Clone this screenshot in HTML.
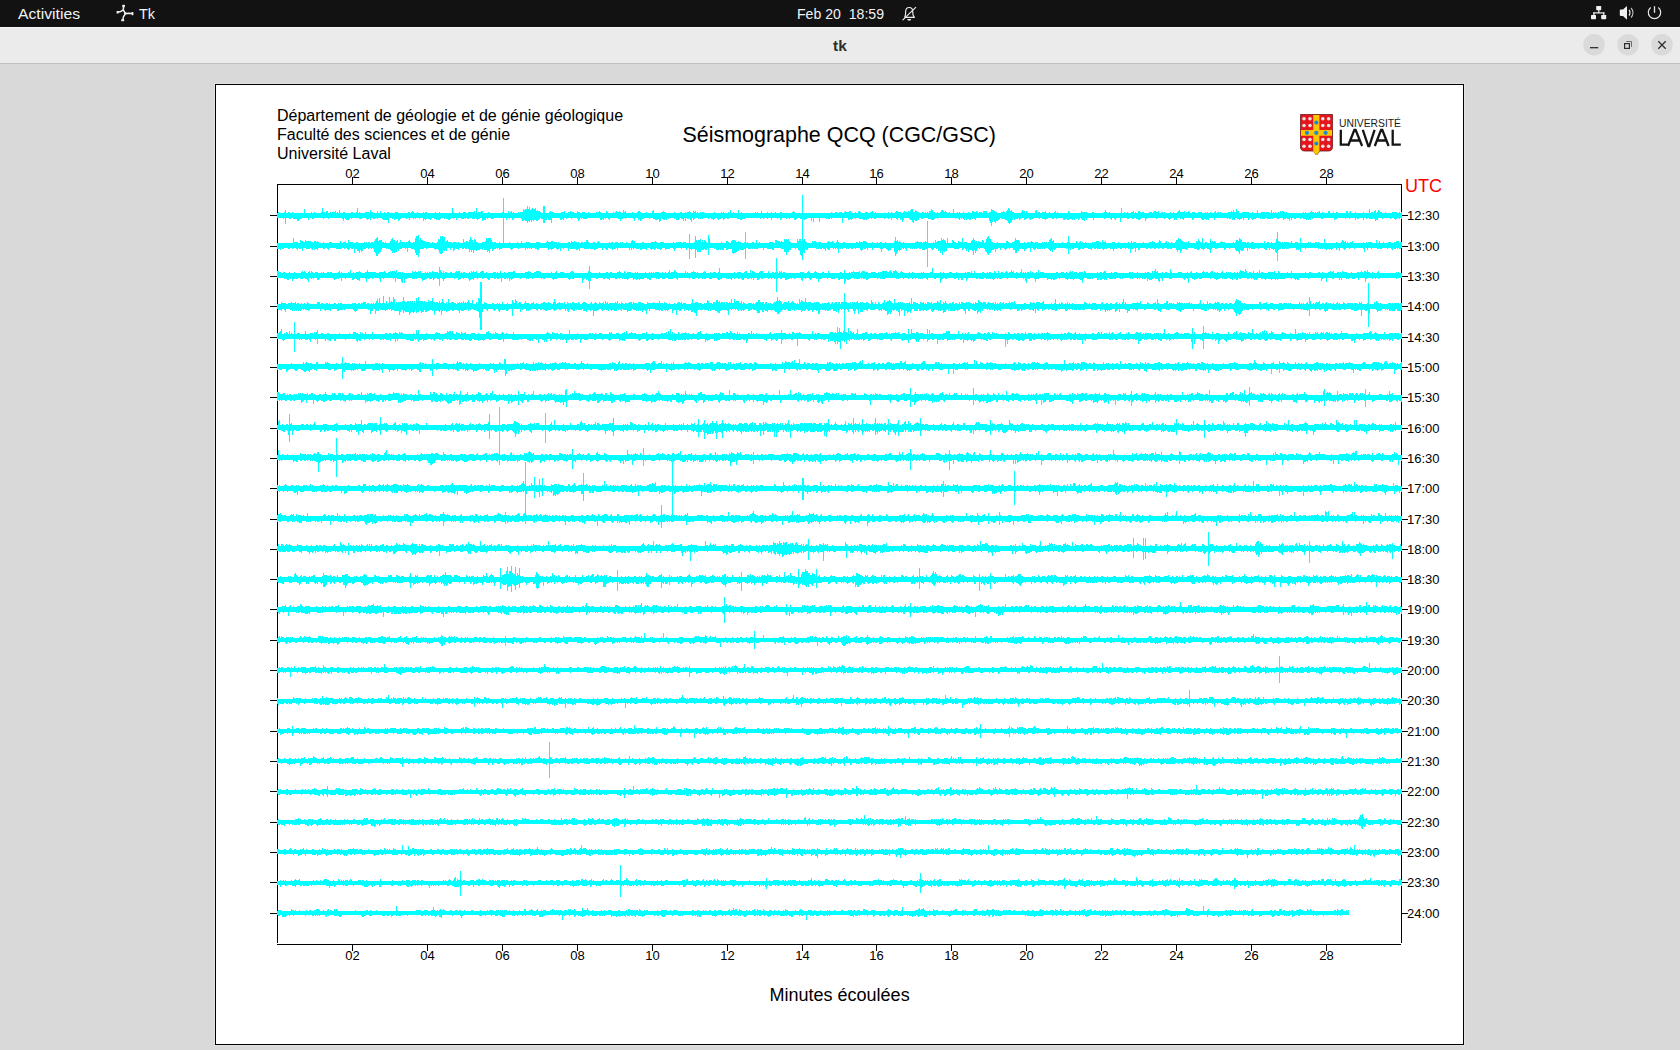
<!DOCTYPE html>
<html><head><meta charset="utf-8"><style>
html,body{margin:0;padding:0;width:1680px;height:1050px;overflow:hidden;background:#d9d9d9}
svg{position:absolute;left:0;top:0;display:block}
text{font-family:'Liberation Sans',sans-serif}
</style></head><body>
<svg width="1680" height="1050" viewBox="0 0 1680 1050">
<!-- top bar -->
<rect x="0" y="0" width="1680" height="27" fill="#121212"/>
<text x="18" y="19" fill="#f2f2f2" font-size="15" textLength="62" lengthAdjust="spacingAndGlyphs">Activities</text>
<g fill="none" stroke="#f0f0f0" stroke-width="1.5" stroke-linecap="round" stroke-linejoin="round">
<path d="M123.6 5.8L123.3 9.8L120.8 11.4L117.6 12.1M123.3 9.8L125.4 13.6L128.5 13.2L132.4 13.5M125.4 13.6L123.4 16.8L122.9 20.2"/>
</g>
<g fill="#f0f0f0">
<rect x="122.3" y="4.8" width="2.6" height="2.4" rx="0.6"/>
<rect x="116.6" y="10.9" width="2.2" height="2.6" rx="0.6"/>
<rect x="131.6" y="12" width="1.8" height="3.2" rx="0.5"/>
<rect x="121.2" y="19.2" width="3" height="2" rx="0.5"/>
<rect x="124.2" y="12.4" width="2.2" height="2.2" rx="0.6"/>
</g>
<text x="139" y="19" fill="#f2f2f2" font-size="15" textLength="16" lengthAdjust="spacingAndGlyphs">Tk</text>
<text x="797" y="19" fill="#f2f2f2" font-size="14.5" textLength="87" lengthAdjust="spacingAndGlyphs" xml:space="preserve">Feb 20  18:59</text>
<g fill="none" stroke="#ececec" stroke-width="1.15" stroke-linejoin="round">
<path d="M904.4 17.4H914.9M904.6 17.4C905.6 16.4 905.6 15 905.6 12.2C905.6 9.2 907.1 7.5 909.2 7.5C911.3 7.5 912.8 9.2 912.8 12.2C912.8 15 912.8 16.4 914.7 17.4"/>
<path d="M902.9 19.8L915.7 7.3" stroke-linecap="round"/>
</g>
<path d="M907.2 19.1H911.2C911 20.1 910.2 20.7 909.2 20.7C908.2 20.7 907.4 20.1 907.2 19.1Z" fill="#ececec"/>
<!-- network -->
<g fill="#f0f0f0">
<rect x="1596.2" y="6" width="5" height="4.2" rx="0.6"/>
<rect x="1591" y="15" width="5" height="4.2" rx="0.6"/>
<rect x="1601.2" y="15" width="5" height="4.2" rx="0.6"/>
<rect x="1598.2" y="10" width="1.2" height="3"/>
<rect x="1593.3" y="12.3" width="11" height="1.2"/>
<rect x="1593.3" y="12.3" width="1.2" height="3"/>
<rect x="1603.2" y="12.3" width="1.2" height="3"/>
</g>
<!-- volume -->
<path d="M1620.6 9.6H1623L1627 6V19.8L1623 15.9H1620.6Q1619.8 15.9 1619.8 15.1V10.4Q1619.8 9.6 1620.6 9.6Z" fill="#f0f0f0"/>
<path d="M1629 10C1630.3 11.3 1630.3 14.2 1629 15.5" stroke="#f0f0f0" stroke-width="1.2" fill="none"/>
<path d="M1631 8C1633.6 10.5 1633.6 15 1631 17.5" stroke="#bdbdbd" stroke-width="1.1" fill="none"/>
<!-- power -->
<path d="M1650.7 7.5A6.2 6.2 0 1 0 1658.3 7.5" stroke="#e8e8e8" stroke-width="1.2" fill="none"/>
<path d="M1654.5 6.2V12.8" stroke="#e8e8e8" stroke-width="1.3"/>
<!-- title bar -->
<rect x="0" y="27" width="1680" height="36" fill="#ebebeb"/>
<rect x="0" y="63" width="1680" height="1" fill="#c0c0c0"/>
<rect x="0" y="27" width="1680" height="1" fill="#f7f7f7"/>
<text x="840" y="51" text-anchor="middle" fill="#2e2e2e" font-size="15.5" font-weight="700">tk</text>
<circle cx="1594" cy="44.7" r="10.8" fill="#dadada"/>
<circle cx="1628" cy="44.7" r="10.8" fill="#dadada"/>
<circle cx="1662" cy="44.7" r="10.8" fill="#dadada"/>
<rect x="1590" y="47" width="8.2" height="1.35" fill="#333"/>
<rect x="1624.6" y="43.6" width="4.8" height="4.8" fill="none" stroke="#2e2e2e" stroke-width="1.2"/>
<path d="M1626.2 41.5H1631.5V46.8" fill="none" stroke="#6a6a6a" stroke-width="1"/>
<path d="M1658.3 41.3L1665.7 48.7M1665.7 41.3L1658.3 48.7" stroke="#2e2e2e" stroke-width="1.3"/>
<!-- canvas -->
<rect x="214" y="83" width="1251" height="963" fill="#e3e3e3"/>
<rect x="215.5" y="84.5" width="1248" height="960" fill="#fff" stroke="#000" stroke-width="1"/>
<g fill="#000" font-size="16">
<text x="277" y="121">Département de géologie et de génie géologique</text>
<text x="277" y="140">Faculté des sciences et de génie</text>
<text x="277" y="159">Université Laval</text>
</g>
<text x="839.2" y="141.5" text-anchor="middle" font-size="21.45" fill="#000">Séismographe QCQ (CGC/GSC)</text>
<!-- logo -->
<g id="logo">
<path d="M1300.5 114.5H1332.5V147C1332.5 149.5 1331 151 1328.5 151H1320L1316.5 155L1313 151H1304.5C1302 151 1300.5 149.5 1300.5 147Z" fill="#e8141c" stroke="#6b1a1a" stroke-width="0.8"/>
<path d="M1313.2 115H1319.4V130H1332V135.7H1319.4V151.5L1316.3 155L1313.2 151.5V135.7H1301V130H1313.2Z" fill="#fbc600"/>
<g fill="#1e88d8">
<circle cx="1316.3" cy="122.6" r="2.1"/><circle cx="1316.3" cy="132.8" r="2.1"/><circle cx="1316.3" cy="143.5" r="2.1"/>
<circle cx="1307" cy="132.8" r="2.1"/><circle cx="1325.6" cy="132.8" r="2.1"/>
</g>
<g fill="#e4e4e4">
<circle cx="1304" cy="118.8" r="1.8"/><circle cx="1310" cy="118.8" r="1.8"/><circle cx="1304" cy="125.5" r="1.8"/><circle cx="1310" cy="125.5" r="1.8"/>
<circle cx="1322.8" cy="118.8" r="1.8"/><circle cx="1328.6" cy="118.8" r="1.8"/><circle cx="1322.8" cy="125.5" r="1.8"/><circle cx="1328.6" cy="125.5" r="1.8"/>
<circle cx="1304" cy="139.5" r="1.8"/><circle cx="1310" cy="139.5" r="1.8"/><circle cx="1304" cy="146.3" r="1.8"/><circle cx="1310" cy="146.3" r="1.8"/>
<circle cx="1322.8" cy="139.5" r="1.8"/><circle cx="1328.6" cy="139.5" r="1.8"/><circle cx="1322.8" cy="146.3" r="1.8"/><circle cx="1328.6" cy="146.3" r="1.8"/>
</g>
<text x="1339" y="126.8" font-size="10.4" fill="#1a1a1a" textLength="62" lengthAdjust="spacingAndGlyphs">UNIVERSITÉ</text>
<path d="M1340.8 129.8V144.7H1349.4M1348 146L1354.4 129.8H1355.6L1362.1 146M1351 140.5H1359M1362.8 129.8L1368.3 146H1369.3L1374.6 129.8M1374.8 146L1381.1 129.8H1382.3L1388.6 146M1377.8 140.5H1385.6M1392.7 129.8V144.7H1400.8" fill="none" stroke="#151515" stroke-width="2.3" stroke-linejoin="miter"/>
</g>
<g shape-rendering="crispEdges">
<path d="M277 184H1402M277.5 184V943M1401.5 184V943M277 944.5H1401" stroke="#000" stroke-width="1" fill="none"/><path d="M352.5 177V184M352.5 945V951M427.5 177V184M427.5 945V951M502.5 177V184M502.5 945V951M577.5 177V184M577.5 945V951M652.5 177V184M652.5 945V951M727.5 177V184M727.5 945V951M802.5 177V184M802.5 945V951M876.5 177V184M876.5 945V951M951.5 177V184M951.5 945V951M1026.5 177V184M1026.5 945V951M1101.5 177V184M1101.5 945V951M1176.5 177V184M1176.5 945V951M1251.5 177V184M1251.5 945V951M1326.5 177V184M1326.5 945V951M270 215.5H277M1402 215.5H1408M270 246.5H277M1402 246.5H1408M270 276.5H277M1402 276.5H1408M270 306.5H277M1402 306.5H1408M270 337.5H277M1402 337.5H1408M270 367.5H277M1402 367.5H1408M270 397.5H277M1402 397.5H1408M270 428.5H277M1402 428.5H1408M270 458.5H277M1402 458.5H1408M270 488.5H277M1402 488.5H1408M270 519.5H277M1402 519.5H1408M270 549.5H277M1402 549.5H1408M270 579.5H277M1402 579.5H1408M270 609.5H277M1402 609.5H1408M270 640.5H277M1402 640.5H1408M270 670.5H277M1402 670.5H1408M270 700.5H277M1402 700.5H1408M270 731.5H277M1402 731.5H1408M270 761.5H277M1402 761.5H1408M270 791.5H277M1402 791.5H1408M270 822.5H277M1402 822.5H1408M270 852.5H277M1402 852.5H1408M270 882.5H277M1402 882.5H1408M270 913.5H277M1402 913.5H1408" stroke="#000" stroke-width="1" fill="none"/>
<path fill="#00ffff" d="M277 213h1v-1h1v1h5v-1h1v-2h1v3h2v-1h2v1h2v-1h1v1h11v-4h1v4h6v-1h1v1h2v-1h1v1h6v-1h1v-4h1v4h2v1h1v-2h2v2h2v-1h1v1h1v-1h3v-1h1v2h1v-1h1v1h1v-3h1v3h3v-1h2v1h6v-1h2v1h3v-1h1v-4h1v5h1v-1h1v1h5v-1h4v1h1v-3h1v2h2v1h4v-2h1v2h2v-2h1v2h3v-1h1v1h2v-1h2v1h6v-1h3v1h10v-1h2v1h1v-1h1v-1h1v1h1v1h3v-1h1v1h5v-1h1v1h1v-1h2v1h8v-1h1v1h3v-1h1v1h12v-5h1v4h1v1h5v-1h1v1h3v-1h3v1h2v-1h6v-1h1v2h1v-5h1v5h1v-1h3v-1h2v2h5v-1h1v1h13v-1h1v-14h1v15h4v-2h1v2h1v-1h1v-1h1v2h1v-1h1v1h4v-1h1v1h1v-1h3v-3h1v1h1v-1h2v-3h1v3h1v-2h1v3h1v-1h1v-1h1v1h2v-1h1v3h1v-1h1v1h2v1h1v1h2v-7h2v7h4v-1h1v-1h1v1h3v1h7v-1h3v-1h1v2h3v-1h2v-1h1v1h3v1h3v-2h1v1h2v1h2v-1h3v1h3v-1h1v1h7v-1h1v1h1v-1h1v-1h1v1h1v1h5v-2h1v1h1v1h5v-1h1v1h1v-1h1v-1h1v1h2v-1h1v1h1v1h2v-3h1v2h1v-1h1v2h6v-1h1v1h4v-1h1v-1h2v1h1v1h5v-1h1v1h5v-2h1v-1h1v3h7v-1h2v-1h1v1h2v1h8v-1h1v1h5v-1h2v1h3v-1h1v1h1v-1h2v-1h1v1h1v1h2v-2h1v1h1v-1h1v2h1v-1h1v1h2v-1h1v1h1v-1h2v1h10v-1h1v1h6v-1h1v1h1v-1h1v1h4v-1h1v1h1v-3h1v3h2v-1h1v1h4v-3h1v3h2v-1h1v1h13v-1h1v1h1v-1h1v1h3v-2h1v2h5v-1h1v1h3v-1h1v1h3v-1h1v1h4v-1h2v1h10v-1h1v-1h1v1h1v1h7v-18h1v18h28v-1h1v1h3v-1h2v1h2v-1h3v1h2v-1h1v-1h1v1h3v-1h2v1h1v1h3v-1h1v1h2v-2h2v1h1v1h4v-1h3v1h2v-1h2v-1h1v1h1v1h1v-1h1v1h12v-1h1v1h2v-1h1v1h3v-1h1v-1h2v1h3v1h2v-1h1v-1h1v1h3v-1h1v1h1v-2h1v-1h2v3h2v-2h1v1h1v1h2v1h3v-1h2v1h1v-1h1v1h1v-1h1v1h1v-2h2v-2h1v1h1v2h2v1h2v-1h1v1h2v-1h1v-2h2v1h1v1h1v-1h1v1h1v1h2v-1h1v1h3v-4h1v4h3v-1h1v1h1v-1h1v1h3v-1h1v1h4v-1h1v1h3v-2h2v1h2v-1h1v1h1v1h1v-1h3v1h1v-2h4v2h2v-1h2v-3h1v1h2v1h1v1h2v1h4v-1h2v-1h1v1h1v1h1v-2h1v-1h1v-2h1v1h1v2h1v-1h1v2h2v1h7v-1h1v-2h1v1h2v2h1v-2h1v1h1v1h7v-2h1v-1h1v3h1v-1h2v1h2v-1h3v-1h1v2h3v-1h1v1h4v-1h1v-1h1v2h1v-1h1v1h10v-2h1v1h1v1h11v-2h1v1h5v1h5v-1h2v1h10v-1h1v-2h1v2h1v1h2v-1h1v1h11v-5h1v5h2v-1h1v1h2v-1h1v1h3v-1h2v-1h1v2h1v-1h1v1h2v-2h2v1h1v1h1v-1h2v1h5v-1h3v1h1v-1h1v-1h2v1h2v-1h1v2h2v-1h2v1h1v-1h1v1h5v-1h1v1h2v-1h1v1h3v-1h1v-1h1v-1h1v2h4v-1h1v2h1v-1h2v-1h1v1h1v1h2v-1h3v1h3v-1h4v1h3v-1h1v1h1v-1h1v1h2v-1h1v1h3v-1h1v-1h1v2h1v-1h2v1h1v-1h1v1h7v-1h3v-1h1v1h1v-2h1v2h2v-3h1v2h2v2h3v-1h7v1h3v-1h1v1h4v-3h1v3h3v-1h4v1h1v-1h3v1h2v-3h1v3h1v-1h1v1h1v-1h1v1h2v-1h1v1h1v-2h1v1h1v-1h2v1h1v1h1v-1h1v1h16v-1h1v1h1v-1h1v1h4v-1h1v-1h1v1h2v1h1v-1h1v1h1v-1h2v-1h1v2h2v-1h1v1h5v-2h2v2h3v-1h1v1h2v-1h2v1h8v-2h2v2h1v-1h1v-1h1v2h4v-1h1v1h7v-1h1v1h5v-4h1v4h1v-1h2v1h1v-2h1v-1h1v3h1v-1h1v-2h1v1h1v1h2v1h3v-1h1v1h6v-1h5v1h2v-1h1v1h1v-1h1v7h-1v-1h-1v1h-1v-1h-2v1h-1v1h-1v-1h-1v-1h-3v1h-1v-1h-7v1h-1v-1h-4v2h-2v1h-1v-2h-1v-1h-1v1h-4v-1h-2v1h-1v-1h-2v2h-1v-2h-4v1h-2v-1h-1v2h-1v-2h-5v1h-1v-1h-3v1h-1v-1h-8v1h-2v1h-1v-2h-11v1h-2v-1h-8v1h-1v-1h-1v2h-1v-1h-1v1h-1v-1h-1v1h-1v-1h-3v-1h-2v1h-1v-1h-4v1h-2v-1h-2v2h-1v-2h-1v3h-1v-2h-2v-1h-1v1h-2v1h-1v-2h-4v1h-2v-1h-4v1h-1v-1h-1v1h-4v-1h-2v1h-3v-1h-1v1h-1v-1h-4v1h-3v1h-1v-1h-1v-1h-1v1h-1v1h-1v-2h-4v2h-1v-2h-1v1h-2v1h-1v-1h-2v-1h-2v2h-1v-1h-1v1h-1v-2h-1v1h-2v-1h-1v1h-1v-1h-12v2h-1v-2h-5v2h-1v-1h-1v1h-1v-1h-2v1h-2v-1h-1v-1h-7v1h-1v1h-1v-2h-8v2h-1v-1h-1v-1h-1v1h-1v-1h-3v2h-1v-1h-1v1h-1v-2h-3v1h-1v1h-1v-1h-1v-1h-3v1h-1v-1h-7v1h-1v-1h-9v1h-1v2h-1v-3h-4v1h-1v1h-2v-1h-2v-1h-2v1h-2v-1h-3v1h-2v-1h-6v4h-1v-4h-4v2h-1v-1h-1v-1h-2v2h-1v-1h-1v-1h-5v1h-1v-1h-10v2h-1v-2h-6v2h-1v-2h-1v3h-1v-1h-2v-1h-1v-1h-1v1h-1v1h-1v-2h-1v1h-1v-1h-1v2h-1v-1h-1v1h-1v-1h-3v1h-2v-1h-2v1h-2v-2h-6v1h-1v-1h-2v1h-2v-1h-4v1h-2v1h-1v-1h-3v-1h-2v1h-1v-1h-5v1h-3v1h-1v-1h-1v-1h-2v1h-2v1h-1v-2h-3v1h-1v1h-1v-2h-1v1h-3v1h-1v-2h-1v2h-1v2h-1v1h-1v1h-1v-1h-1v-2h-1v-1h-2v-1h-4v-1h-1v1h-1v1h-1v1h-2v2h-1v-1h-1v-2h-1v2h-1v4h-1v-3h-1v-2h-1v-3h-13v2h-1v-1h-1v-1h-1v1h-1v-1h-1v2h-2v-1h-2v1h-1v-2h-1v2h-1v-1h-1v-1h-1v1h-1v-1h-1v2h-1v-1h-1v-1h-2v1h-1v-1h-17v1h-1v-1h-2v1h-1v1h-3v-1h-3v-1h-5v1h-2v-1h-2v2h-2v1h-2v-1h-1v3h-1v-1h-1v-2h-2v-1h-1v-1h-5v2h-1v2h-1v-3h-1v1h-1v-2h-2v2h-1v-1h-1v-1h-4v2h-1v-2h-2v1h-1v-1h-3v1h-1v-1h-8v1h-2v-1h-2v1h-1v-1h-2v1h-2v1h-1v-1h-1v1h-2v-1h-4v-1h-3v1h-1v-1h-2v1h-1v1h-1v-1h-1v1h-2v-2h-5v5h-1v-5h-10v1h-1v-1h-1v1h-2v-1h-1v1h-1v-1h-6v4h-1v-4h-5v4h-1v-4h-1v3h-1v-3h-4v1h-2v1h-1v-1h-1v41h-1v-41h-2v-1h-3v1h-1v1h-2v-2h-4v1h-1v-1h-2v1h-1v-1h-4v1h-1v1h-1v-2h-2v1h-1v-1h-5v2h-1v-2h-3v1h-1v-1h-3v1h-1v-1h-2v1h-1v-1h-15v1h-3v1h-2v-1h-3v-1h-8v1h-2v-1h-2v1h-1v1h-1v-2h-2v1h-2v1h-1v-1h-1v-1h-2v1h-1v1h-1v-1h-2v-1h-2v1h-1v-1h-5v1h-1v-1h-1v1h-1v-1h-1v1h-1v-1h-3v1h-1v1h-1v-2h-1v4h-1v-2h-1v-2h-1v1h-2v-1h-1v3h-1v-3h-1v3h-1v-2h-2v-1h-1v1h-1v1h-3v-2h-1v1h-1v-1h-5v1h-1v-1h-1v2h-1v-1h-1v1h-2v-1h-1v-1h-1v3h-1v1h-1v-3h-1v1h-3v-1h-2v-1h-3v1h-1v-1h-5v1h-2v1h-1v1h-1v-2h-1v1h-1v-2h-3v3h-1v-2h-1v-1h-7v1h-1v-1h-2v1h-2v2h-1v-2h-2v-1h-8v2h-1v-1h-1v-1h-2v1h-1v-1h-1v2h-1v-1h-1v1h-2v-2h-13v1h-4v-1h-1v1h-1v-1h-1v2h-1v1h-1v-2h-1v-1h-5v1h-1v-1h-4v1h-1v-1h-2v2h-1v-1h-1v1h-2v-2h-8v5h-1v-3h-3v-2h-1v2h-2v3h-2v-4h-2v-1h-1v1h-1v1h-1v1h-2v-1h-2v1h-1v-1h-1v2h-1v-2h-1v2h-1v-1h-1v2h-1v-2h-2v-1h-1v1h-2v-2h-1v-1h-7v1h-1v1h-1v-2h-2v1h-1v-1h-2v2h-1v-2h-2v26h-1v-26h-9v1h-3v-1h-3v1h-1v-1h-1v2h-3v1h-1v-3h-2v1h-2v1h-1v-1h-1v-1h-1v1h-3v-1h-3v1h-2v-1h-1v1h-1v-1h-1v1h-3v-1h-4v2h-1v-2h-2v1h-1v-1h-2v1h-1v1h-2v-1h-2v-1h-1v1h-1v-1h-3v1h-1v1h-2v-1h-1v1h-1v-1h-2v-1h-2v1h-1v1h-1v-1h-2v-1h-1v1h-1v1h-1v-1h-1v2h-1v-3h-3v1h-1v-1h-3v1h-1v-1h-1v1h-1v-1h-3v2h-1v-2h-2v1h-1v-1h-5v1h-1v1h-1v1h-1v-2h-3v1h-1v-2h-1v1h-1v-1h-3v5h-1v-3h-5v-1h-1v-1h-4v1h-1v-1h-2v1h-2v-1h-2v2h-1v-2h-1v1h-1v1h-1v-1h-1v-1h-4v1h-3v-1h-7v1h-1v-1h-1v1h-1v1h-3v-1h-1v-1h-1v3h-1v-2h-1v-1h-13v1h-1v-1h-4v1h-1v-1h-9v1h-2v-1h-3v2h-1v-2h-6v1h-2v1h-1v1h-2v-2h-4v-1h-2v1h-2v-1h-3v6h-1v-6h-1v1h-1v-1h-6zM277 243h16v-5h1v4h4v1h2v-3h1v1h2v1h2v-2h1v1h5v1h2v1h1v-2h2v1h1v-1h1v1h1v1h4v-1h1v1h5v-1h3v1h8v-2h1v1h1v1h1v-1h2v-1h1v2h2v-3h1v2h4v1h3v-1h2v1h6v-1h1v1h1v-1h1v1h1v-1h2v1h1v-1h2v1h1v-2h1v-2h1v-1h1v-1h1v4h1v-1h3v2h2v1h1v-1h1v1h4v-2h1v-2h1v-1h1v2h2v2h1v-1h1v-1h1v3h1v-1h1v-2h1v2h4v1h1v-1h2v-1h1v-1h1v2h1v1h2v-1h2v-4h1v-2h2v-1h1v5h1v-2h1v2h2v1h2v1h5v1h2v-1h1v1h4v-1h1v-3h1v1h1v-4h1v1h1v-1h1v1h2v5h1v-1h1v-1h1v2h4v1h1v-1h4v1h1v-1h1v1h4v-4h1v3h2v-1h2v1h1v-2h1v-3h1v2h1v1h1v2h1v-3h1v1h1v2h2v1h4v-1h3v-1h1v-3h1v1h1v-1h3v2h1v2h1v1h1v-1h2v1h3v-1h1v1h9v-1h1v1h7v-1h1v1h3v-2h1v2h4v-1h4v1h6v-1h4v1h6v-1h1v-1h1v1h3v-1h2v1h4v1h1v-1h1v1h9v-1h2v1h1v-2h1v1h2v-1h1v1h2v1h1v-1h1v1h2v-1h2v1h1v-1h2v-2h2v2h1v1h4v-1h2v1h2v-1h1v-1h1v1h1v1h9v-1h1v1h1v-1h2v1h2v-1h3v1h2v-1h1v1h1v-1h1v1h3v-1h1v1h4v-2h1v-1h1v1h2v2h7v-1h2v1h7v-1h4v-1h1v1h1v1h3v-1h4v1h9v-1h1v1h2v-1h1v1h1v-1h4v1h1v-1h3v1h3v-9h1v9h4v-1h1v-6h1v4h1v1h1v-1h2v-1h1v3h1v-2h1v2h1v-2h1v1h1v1h1v1h1v-8h1v3h1v5h11v-1h1v1h4v-2h2v1h1v1h2v-2h1v-1h3v1h1v1h2v-1h1v1h2v1h3v-1h1v-10h1v11h1v-1h1v1h4v-1h2v1h2v-3h1v3h2v-1h1v1h9v-1h4v1h2v-3h2v1h3v1h1v-1h1v1h2v-3h1v1h1v-1h1v1h1v-1h1v2h1v1h1v1h6v-4h1v2h1v-2h2v2h2v-1h1v-1h1v2h1v1h1v1h5v-2h1v1h1v-1h2v1h1v1h1v-1h3v1h6v-1h1v-1h1v1h3v-1h1v1h1v1h2v-1h1v-2h1v2h1v1h4v-1h2v1h11v-1h2v1h1v-2h1v1h3v-1h3v1h1v1h5v-1h1v1h4v-1h1v1h2v-1h2v1h3v-1h1v1h8v-2h1v-4h1v4h1v-1h1v2h1v-1h1v1h1v1h2v-1h1v1h11v-1h2v-1h1v1h4v1h1v-1h2v-1h1v1h1v-21h1v22h5v-1h1v1h1v-3h1v2h1v-1h4v-3h1v2h1v-1h1v1h1v1h1v2h1v-5h1v5h4v-3h1v1h1v1h2v1h2v-2h1v1h3v-4h1v5h1v-1h3v1h4v-2h1v-1h1v-2h1v2h1v2h1v-1h1v2h1v-2h1v1h3v-2h1v1h1v2h1v-1h1v-3h1v-2h1v-1h1v2h1v1h1v2h1v1h1v1h4v-1h1v1h8v-2h2v1h1v1h3v-1h2v-1h1v-3h1v2h3v1h1v2h4v-1h1v1h2v-1h2v1h1v-1h1v-1h1v1h2v1h1v-1h3v1h4v-1h1v1h1v-1h3v1h1v-1h1v-2h1v-1h1v-1h1v3h1v-1h1v3h8v-1h1v1h4v-1h1v-6h1v6h1v1h6v-2h1v1h1v1h1v-1h1v-1h1v2h1v-1h1v1h2v-1h1v1h6v-1h1v1h1v-1h2v-1h3v1h2v1h1v-3h1v2h2v-1h1v2h6v-1h3v1h3v-1h1v1h9v-1h1v1h2v-2h1v2h1v-1h3v1h7v-1h1v1h5v-1h3v-1h1v1h2v1h3v-1h1v-2h1v1h1v2h4v-1h1v-1h1v2h1v-1h1v1h2v-1h1v1h3v-1h1v-2h2v-2h1v1h2v1h1v1h1v1h2v1h1v-1h1v1h1v-2h1v2h7v-2h1v1h1v-3h1v2h1v1h1v1h1v-5h1v5h2v-1h2v1h3v-4h1v3h1v-1h1v1h1v-1h1v1h1v1h4v-1h1v-1h1v1h3v1h8v-1h1v1h1v-1h1v-2h2v1h1v-3h1v1h1v1h1v2h4v1h1v-1h2v1h2v-1h3v1h10v-2h1v2h2v-1h2v1h2v-1h1v1h3v-1h1v-3h1v-7h1v9h1v1h2v1h1v-1h1v1h1v-1h5v1h2v-2h1v2h3v-1h3v1h2v-5h1v5h7v-1h1v1h1v-1h1v1h4v-1h2v1h1v-1h1v1h5v-4h1v4h11v-1h1v1h4v-1h1v-2h1v1h1v1h1v-1h1v2h1v-1h1v1h2v-1h2v-1h1v2h10v-1h1v1h2v-1h1v1h1v-1h4v1h4v-3h1v3h2v-2h1v2h3v-1h1v1h4v-1h3v1h3v-1h2v-1h3v2h1v-1h2v6h-1v1h-2v-1h-1v1h-1v-1h-1v1h-2v-1h-1v2h-1v-1h-1v-1h-3v1h-1v-1h-5v1h-2v-1h-1v1h-2v-1h-5v1h-1v-1h-3v2h-1v-2h-2v4h-1v-3h-1v-1h-8v1h-1v-1h-4v1h-1v-1h-3v1h-1v1h-1v-1h-1v-1h-3v3h-1v-3h-2v2h-1v-2h-3v1h-1v1h-1v-1h-1v1h-1v-1h-2v1h-1v-1h-2v-1h-1v1h-1v-1h-1v1h-1v-1h-1v1h-1v-1h-12v1h-1v-1h-4v4h-1v-3h-1v1h-1v-1h-1v1h-1v-2h-7v1h-3v-1h-1v1h-3v-1h-1v1h-2v1h-1v11h-1v-8h-1v-1h-1v-3h-1v1h-1v-1h-2v-1h-1v2h-1v-2h-2v2h-2v-1h-1v-1h-5v1h-1v-1h-3v1h-4v-1h-1v1h-1v-1h-1v3h-1v-3h-3v2h-1v1h-2v-1h-1v4h-1v-2h-1v-1h-2v-1h-1v-2h-5v1h-1v-1h-3v1h-1v1h-1v-2h-7v1h-2v-1h-3v1h-1v4h-1v-3h-1v-1h-2v-1h-2v1h-1v1h-1v-1h-2v-1h-1v1h-1v1h-2v-1h-3v-1h-6v1h-1v1h-1v-1h-4v2h-1v2h-1v-3h-2v2h-1v-2h-1v-2h-4v1h-2v-1h-1v1h-2v-1h-3v1h-2v-1h-3v1h-1v-1h-2v1h-2v-1h-3v1h-1v-1h-2v1h-2v-1h-6v2h-2v-2h-2v4h-1v-4h-1v1h-3v4h-1v-5h-1v1h-1v-1h-2v1h-1v-1h-3v1h-2v-1h-3v1h-1v-1h-1v1h-1v2h-1v-2h-3v-1h-3v1h-1v-1h-1v1h-1v1h-1v-1h-1v-1h-1v1h-4v-1h-1v1h-2v-1h-2v2h-1v-1h-3v-1h-4v1h-2v-1h-1v1h-1v1h-2v-2h-4v1h-2v-1h-1v2h-1v-2h-1v6h-1v-6h-1v1h-1v-1h-10v1h-1v1h-1v-1h-1v3h-1v-2h-1v1h-1v-1h-1v-1h-1v-1h-3v1h-1v-1h-1v1h-1v-1h-1v1h-4v-1h-1v1h-1v1h-1v-1h-1v-1h-2v4h-1v-4h-3v1h-2v2h-1v-2h-2v-1h-1v1h-2v2h-2v2h-2v-3h-2v-2h-3v1h-1v-1h-2v1h-1v1h-1v-1h-1v-1h-3v2h-1v-2h-2v1h-2v3h-1v-3h-1v1h-2v1h-1v2h-2v2h-1v-1h-1v-2h-1v-1h-1v-2h-1v-1h-4v1h-1v-1h-1v1h-1v2h-1v2h-1v-3h-1v5h-1v-4h-1v-1h-3v2h-1v-3h-1v2h-1v-2h-1v-1h-1v1h-1v1h-1v-2h-3v1h-5v-1h-7v3h-2v1h-1v-1h-1v4h-1v-4h-1v2h-1v-3h-1v1h-1v-3h-1v1h-1v-1h-2v1h-1v1h-1v-1h-1v-1h-3v19h-1v-18h-2v1h-3v-2h-1v1h-2v-1h-2v1h-1v-1h-1v1h-1v-1h-1v1h-1v-1h-1v1h-1v-1h-3v3h-1v-2h-1v-1h-1v1h-1v-1h-1v1h-1v1h-1v1h-1v-1h-1v2h-1v2h-1v2h-1v-4h-1v-4h-3v2h-2v1h-1v-1h-1v-1h-1v-1h-3v1h-1v3h-1v-3h-1v-1h-7v2h-1v-2h-4v2h-1v-2h-1v1h-2v-1h-1v2h-1v1h-1v-1h-1v-2h-4v1h-1v-1h-2v1h-2v-1h-2v1h-1v-1h-1v1h-1v-1h-3v1h-1v-1h-1v1h-1v-1h-1v5h-1v-4h-1v-1h-1v1h-1v-1h-1v1h-1v-1h-3v2h-2v-1h-1v-1h-1v3h-1v-2h-2v-1h-1v1h-2v-1h-1v1h-3v-1h-8v2h-2v-1h-1v4h-1v-1h-1v5h-1v-1h-1v-1h-1v-4h-1v-1h-1v-2h-2v1h-1v-1h-4v2h-2v2h-2v3h-1v-3h-2v-3h-3v-1h-7v2h-2v-1h-5v-1h-3v2h-1v-2h-5v1h-4v-1h-1v1h-1v-1h-1v1h-3v-1h-2v11h-1v-10h-1v1h-4v-1h-1v2h-2v1h-1v1h-2v1h-1v-1h-1v-4h-4v1h-2v-2h-2v2h-2v-1h-1v1h-1v-1h-1v1h-3v-2h-1v1h-1v-1h-5v7h-1v-7h-1v2h-2v-1h-1v1h-3v2h-4v-2h-1v8h-1v-9h-3v1h-1v-1h-1v10h-1v-11h-2v2h-1v-2h-4v1h-1v-1h-5v1h-1v2h-1v-2h-1v-1h-3v1h-4v1h-1v-2h-3v1h-1v1h-1v-1h-3v-1h-1v1h-1v1h-1v-1h-2v1h-1v-1h-1v-1h-3v2h-1v-1h-4v1h-2v-2h-1v1h-3v-1h-2v1h-1v-1h-1v2h-1v-2h-1v2h-1v-2h-11v2h-1v-2h-1v1h-3v1h-1v-2h-1v1h-1v-1h-2v2h-2v-1h-1v-1h-2v2h-1v-2h-4v1h-2v1h-2v-1h-4v-1h-1v1h-5v-1h-4v3h-1v-2h-1v1h-2v-1h-6v-1h-1v3h-1v-3h-4v1h-1v-1h-2v3h-1v-3h-1v1h-1v1h-1v-1h-1v-1h-2v1h-2v1h-1v-1h-2v1h-1v-2h-9v2h-2v-1h-2v-1h-3v1h-1v-1h-1v1h-1v-1h-1v1h-1v-1h-1v2h-1v-2h-6v1h-1v-1h-5v1h-1v1h-1v-1h-1v-1h-8v1h-2v1h-1v-2h-1v1h-1v-1h-1v1h-2v1h-1v1h-1v-3h-1v1h-1v4h-1v-2h-1v1h-1v-2h-3v-2h-1v2h-1v-1h-2v1h-3v1h-1v-1h-2v3h-1v-3h-1v2h-1v-2h-1v2h-1v-3h-1v-1h-1v1h-2v-1h-1v1h-2v-1h-3v2h-1v-1h-2v-1h-1v2h-1v1h-1v-3h-2v2h-1v-2h-3v3h-1v-1h-1v1h-1v-1h-1v3h-1v1h-2v-1h-1v-3h-1v-1h-2v1h-1v-1h-1v-1h-7v1h-1v-1h-2v1h-4v4h-1v4h-1v-2h-2v-2h-1v-3h-1v-1h-3v-1h-3v4h-1v-4h-1v1h-1v-1h-3v1h-3v2h-1v-2h-1v3h-2v1h-1v-1h-1v1h-1v-2h-1v-1h-1v-1h-2v-1h-1v1h-1v-1h-4v2h-1v2h-1v1h-1v1h-1v2h-2v-3h-1v-1h-1v-3h-1v-1h-1v1h-1v-1h-2v1h-1v-1h-2v1h-3v2h-1v1h-1v-2h-1v3h-1v-2h-2v-2h-2v4h-1v-5h-1v1h-2v-1h-1v1h-1v1h-1v-1h-1v-1h-2v1h-1v-1h-2v1h-6v-1h-7v2h-1v-1h-1v-1h-2v1h-2v-1h-5v2h-1v-1h-2v1h-1v-2h-1v2h-1v-1h-1v-1h-1v1h-4v-1h-3v3h-1v-3h-1v1h-2v-1h-1v2h-1v-1h-1v-1h-3v1h-1v-1h-2v1h-2v-1h-4v1h-2v-1h-1v2h-1v-1h-3zM277 271h2v1h2v1h2v-1h2v1h4v-1h1v1h4v-1h1v1h6v-1h1v-1h1v1h1v-1h1v1h1v1h2v-1h1v-1h1v2h1v-2h1v1h1v1h2v-1h3v1h3v-1h1v1h1v-1h1v1h3v-1h2v1h1v-1h2v1h6v-1h1v-1h1v2h1v-1h1v1h6v-1h1v1h1v-3h1v3h2v-1h1v1h2v-1h3v-1h1v1h1v1h4v-1h2v-2h1v2h8v1h3v-1h5v-1h1v1h1v1h2v-1h2v-1h1v1h1v-1h3v1h1v-2h1v3h1v-1h3v1h1v-1h1v1h9v-2h1v1h2v-1h1v1h2v-1h1v1h1v-1h1v2h4v-1h1v1h1v-1h1v1h1v-1h2v1h1v-2h1v1h5v1h1v-6h1v3h1v2h1v1h1v-2h1v2h1v-1h2v1h3v-1h2v1h3v-1h1v-1h1v1h1v-1h2v2h1v-1h1v1h1v-1h2v1h4v-1h1v1h1v-2h1v1h1v-1h1v1h2v-1h1v2h3v-1h1v-1h3v2h2v-1h1v1h6v-1h3v1h1v-1h1v1h2v-2h1v2h3v-1h1v1h3v-1h5v-1h2v2h10v-1h3v-1h1v1h2v1h3v-1h2v-1h4v1h1v1h10v-1h1v1h3v-1h1v-1h1v2h3v-1h4v1h6v-1h1v-1h2v1h1v1h14v-2h1v-5h1v6h1v1h8v-1h1v1h6v-1h2v1h2v-1h2v1h5v-1h2v-1h1v1h1v1h3v-2h1v1h1v1h1v-1h4v1h4v-1h1v1h1v-1h1v1h7v-1h1v1h3v-1h1v1h1v-1h1v1h1v-1h1v1h1v-1h4v1h3v-1h1v1h2v-1h1v1h2v-1h1v-2h1v3h1v-1h3v-2h1v1h1v1h1v1h8v-2h1v2h1v-1h1v1h3v-1h2v-1h1v1h2v1h1v-1h1v1h5v-1h1v-1h1v1h1v1h4v-1h1v1h2v-1h3v1h2v-1h1v-4h1v5h14v-1h1v1h2v-1h4v1h3v-1h1v-1h2v2h3v-3h1v3h1v-2h2v1h1v1h4v-1h1v-1h3v2h5v-2h1v2h3v-1h2v1h1v-1h1v-14h1v14h1v1h1v-2h1v1h1v-1h1v2h1v-1h2v1h15v-1h4v1h3v-1h1v-1h1v1h1v1h4v-1h1v-1h1v1h1v1h5v-1h2v1h4v-2h1v2h11v-1h2v1h2v-3h1v3h4v-1h1v1h1v-1h2v-1h1v1h5v-1h1v2h1v-1h1v-1h3v1h3v1h3v-1h5v1h2v-1h1v1h1v-1h2v-1h5v1h2v-1h1v-1h1v2h1v1h1v-2h2v-1h1v1h1v1h1v1h2v-1h1v-1h1v1h1v1h6v-1h1v1h2v-1h1v1h8v-1h1v1h1v-1h1v1h6v-1h2v-4h1v5h7v-1h1v1h2v-1h1v1h5v-1h3v1h4v-1h1v1h8v-1h1v1h1v-1h3v1h1v-2h1v2h2v-2h1v2h7v-1h2v1h3v-1h1v1h1v-1h2v1h3v-2h1v1h1v1h2v-2h1v2h2v-1h2v1h2v-1h1v-1h1v1h1v1h1v-1h2v-2h1v2h1v-1h1v2h2v-1h1v1h3v-1h1v-3h1v4h1v-1h1v1h1v-1h1v1h1v-1h2v1h1v-2h1v2h1v-1h1v1h3v-1h1v1h1v-3h1v3h1v-1h4v1h12v-1h2v1h3v-1h3v1h2v-1h1v1h2v-1h1v-1h1v1h1v-1h1v2h1v-1h3v1h2v-1h4v1h1v-2h1v1h1v1h11v-1h1v1h2v-1h2v1h1v-1h1v-1h2v2h5v-1h1v1h2v-1h3v1h12v-1h2v1h1v-1h1v1h4v-1h1v1h7v-1h1v1h1v-1h2v1h3v-2h1v2h1v-2h1v-2h1v3h1v-1h1v2h4v-1h1v1h2v-1h2v1h3v-4h1v3h1v1h6v-1h4v1h5v-1h1v1h2v-1h1v-1h1v2h4v-1h1v1h5v-1h1v-1h1v1h1v1h1v-1h2v1h2v-1h1v-1h2v2h1v-1h1v1h2v-1h1v1h3v-1h1v-1h1v2h3v-1h1v1h1v-1h1v1h1v-1h1v1h3v-1h1v1h2v-1h1v1h1v-1h1v-2h1v1h3v1h1v-3h1v2h1v2h2v-1h2v1h2v-2h1v2h3v-1h1v1h1v-3h1v3h1v-1h2v1h5v-1h6v-1h1v2h3v-2h1v1h1v1h7v-1h1v1h3v-2h1v2h13v-1h1v1h3v-1h2v1h7v-1h2v1h2v-1h1v1h5v-1h2v-1h1v1h2v-1h1v2h3v-1h2v1h1v-1h1v1h1v-2h1v1h4v1h4v-1h1v1h5v-1h2v1h1v-1h1v-1h1v1h1v1h1v-2h2v1h1v-2h1v2h2v1h2v-1h1v1h4v-1h1v-1h1v2h17v-1h1v1h1v-1h1v1h3v5h-5v1h-1v-1h-17v1h-1v-1h-2v1h-1v-1h-2v1h-1v-1h-5v1h-1v3h-1v-4h-6v2h-1v-2h-3v1h-3v-1h-3v1h-1v-1h-1v1h-1v-1h-4v2h-1v-2h-1v2h-1v-2h-5v1h-2v-1h-5v4h-1v-4h-3v1h-1v2h-1v-3h-12v1h-1v-1h-9v2h-2v-1h-1v1h-1v-1h-1v-1h-2v1h-1v-1h-6v1h-7v1h-1v-1h-1v1h-1v-1h-3v1h-1v-1h-3v-1h-1v1h-1v1h-1v-1h-1v-1h-1v1h-2v-1h-3v1h-1v1h-1v-1h-1v1h-1v-1h-1v-1h-1v1h-1v-1h-2v1h-2v-1h-6v1h-2v-1h-1v2h-2v-2h-1v1h-1v-1h-1v2h-1v-1h-2v-1h-3v1h-3v-1h-1v1h-1v-1h-2v1h-3v1h-1v-1h-2v-1h-3v1h-1v-1h-8v1h-3v-1h-1v1h-3v1h-1v-1h-2v-1h-3v5h-1v-4h-1v-1h-1v1h-1v1h-1v-1h-1v-1h-11v1h-3v-1h-6v3h-1v-2h-1v-1h-1v4h-1v-1h-1v-2h-3v-1h-1v1h-2v1h-3v-1h-1v2h-1v-3h-1v1h-2v-1h-1v1h-1v-1h-2v1h-1v-1h-1v1h-1v-1h-4v1h-1v-1h-1v1h-1v-1h-7v1h-1v-1h-1v1h-1v-1h-4v1h-2v-1h-1v1h-4v-1h-2v2h-1v-1h-1v1h-1v-1h-2v1h-2v-2h-1v2h-2v-2h-4v1h-1v-1h-1v1h-4v-1h-3v1h-1v4h-1v-3h-2v-1h-2v-1h-1v1h-1v-1h-1v1h-1v1h-1v-1h-3v-1h-1v1h-1v1h-1v-1h-2v-1h-5v1h-1v-1h-2v1h-2v1h-2v-1h-1v1h-1v-1h-3v1h-1v-2h-8v1h-3v3h-1v-3h-1v-1h-4v1h-2v-1h-1v5h-1v-2h-1v-3h-1v1h-1v-1h-6v1h-1v-1h-8v1h-1v-1h-5v1h-3v-1h-1v1h-1v-1h-2v1h-1v1h-1v-1h-1v-1h-1v1h-1v-1h-1v1h-1v-1h-1v1h-1v-1h-2v1h-5v-1h-1v1h-2v-1h-8v1h-1v2h-1v-3h-3v2h-2v-2h-2v2h-1v-2h-2v1h-2v-1h-7v1h-2v-1h-2v1h-1v1h-1v3h-1v-5h-4v1h-2v-1h-6v2h-1v-1h-1v-1h-3v1h-1v-1h-1v1h-1v-1h-1v1h-1v-1h-2v1h-1v-1h-2v1h-1v-1h-3v1h-1v-1h-4v1h-1v-1h-4v1h-1v-1h-1v1h-1v-1h-11v1h-3v-1h-1v1h-1v-1h-2v1h-1v-1h-8v1h-1v1h-2v-2h-1v1h-2v-1h-1v1h-1v-1h-1v1h-4v-1h-1v1h-1v-1h-3v1h-2v1h-2v-1h-1v3h-1v2h-1v-6h-1v1h-3v1h-2v-2h-3v1h-4v-1h-3v1h-1v-1h-5v1h-3v3h-1v-4h-1v1h-1v-1h-4v1h-1v1h-1v-1h-1v-1h-3v1h-1v-1h-2v3h-1v-1h-1v-2h-6v1h-1v-1h-2v1h-1v-1h-1v1h-3v1h-2v-2h-3v1h-2v-1h-2v1h-1v13h-1v-14h-1v1h-1v-1h-2v1h-1v-1h-2v1h-1v-1h-5v1h-2v-1h-1v1h-1v1h-2v-2h-3v2h-1v-2h-1v1h-1v-1h-2v1h-2v-1h-3v2h-2v-1h-1v-1h-1v1h-2v-1h-3v1h-1v-1h-2v2h-1v-1h-1v-1h-1v1h-1v-1h-1v1h-1v-1h-4v1h-2v1h-2v-1h-1v-1h-5v1h-3v-1h-3v1h-2v-1h-1v1h-1v-1h-3v1h-1v-1h-3v1h-3v-1h-2v1h-1v-1h-11v2h-1v-1h-1v-1h-3v1h-5v-1h-3v1h-3v-1h-2v1h-2v-1h-1v1h-1v-1h-5v2h-2v-1h-2v-1h-3v1h-4v1h-1v-1h-2v1h-1v-1h-2v1h-1v-2h-4v1h-1v1h-1v-1h-3v-1h-1v1h-1v-1h-2v1h-1v-1h-2v1h-2v-1h-5v2h-1v-1h-2v-1h-2v1h-2v-1h-5v1h-2v-1h-5v3h-1v8h-1v-8h-1v-2h-1v1h-1v-2h-1v1h-1v1h-1v3h-1v-5h-8v1h-2v-1h-1v1h-1v1h-1v-1h-1v-1h-11v1h-3v1h-1v-1h-1v-1h-7v1h-2v-1h-1v1h-1v-1h-8v1h-1v-1h-3v1h-1v-1h-1v1h-1v-1h-5v1h-1v-1h-7v1h-1v1h-1v-1h-1v2h-1v-3h-1v1h-1v-1h-1v1h-2v-1h-2v4h-1v-4h-2v1h-2v-1h-1v1h-2v-1h-4v2h-2v-1h-1v-1h-4v1h-1v-1h-4v1h-1v-1h-3v2h-1v-1h-2v1h-1v1h-1v-2h-1v-1h-4v1h-1v-1h-2v1h-2v1h-1v-2h-3v1h-1v-1h-9v1h-1v2h-1v-2h-1v-1h-2v8h-1v-7h-2v-1h-2v1h-1v1h-1v-2h-1v1h-3v-1h-2v1h-2v1h-2v1h-1v-2h-1v-1h-4v1h-1v-1h-1v1h-3v-1h-5v1h-2v4h-1v-5h-1v5h-1v-1h-1v-3h-4v-1h-1v4h-1v-4h-1v1h-1v-1h-9v1h-1v-1h-2v4h-1v-3h-1v-1h-6v1h-1v-1h-2v1h-2v-1h-1v4h-1v-3h-1v-1h-5v3h-1v-1h-2v-1h-1v-1h-1v1h-1v1h-2v-2h-6v1h-1v-1h-3v3h-1v-3h-2v1h-1v-1h-1v1h-2v1h-1v-1h-1v-1h-13v1h-1v1h-2v-2h-3v1h-1v-1h-1v1h-1v-1h-2v4h-1v-2h-1v-1h-2v-1h-2v1h-3v-1h-2v1h-2v-1h-1v1h-2v2h-1v-3h-1v1h-1v-1h-1v2h-2v-1h-1v-1h-1v1h-1v-1h-7zM277 304h4v-2h1v1h4v1h2v-1h3v-1h1v1h3v-1h1v2h1v-1h2v1h2v-1h1v1h2v-1h1v1h2v-2h1v1h1v1h8v-2h3v2h1v-1h2v1h3v-1h2v1h1v-1h1v1h4v-1h2v1h2v-1h1v1h1v-1h2v1h10v-1h1v1h1v-1h2v1h2v-1h2v1h1v-1h2v-1h3v2h1v-1h2v1h2v-1h1v1h1v-1h1v1h1v-1h1v-2h1v-2h1v4h1v-5h1v5h1v1h1v-1h1v-7h1v7h1v1h1v-3h1v3h1v-1h1v-6h1v5h1v-1h1v1h1v-5h1v2h1v5h1v-2h1v1h1v-1h4v-1h1v-4h1v4h1v1h2v-1h2v1h1v-1h1v1h1v-1h1v2h1v-2h1v2h1v-5h1v3h1v-4h1v4h4v1h1v-1h1v1h3v-2h1v2h1v-1h2v-3h1v4h2v1h1v-1h2v1h1v-2h1v2h1v-1h1v-3h1v3h1v1h1v1h1v-2h1v2h1v-5h1v4h2v-1h3v1h2v1h1v-1h2v-1h1v1h1v-1h1v1h1v-2h1v2h1v-1h1v1h1v-1h1v-2h1v2h1v1h2v-3h1v4h3v-2h1v2h1v-6h1v1h1v-17h2v22h2v-2h1v1h2v1h5v-1h2v1h3v-1h1v1h1v-1h1v1h2v-2h1v2h4v-1h1v1h4v-4h1v2h1v1h1v-4h1v2h1v3h1v-1h1v-1h2v2h3v-1h1v-2h1v2h3v1h2v-1h2v-1h1v2h2v-1h1v1h4v-1h2v-1h2v1h3v-1h1v1h2v1h2v-2h1v-3h1v3h1v2h1v-1h2v-1h1v1h3v1h1v-2h1v2h2v-2h1v1h1v1h1v-1h1v1h1v-2h2v1h3v1h1v-2h1v1h1v1h2v-1h1v-1h3v1h1v1h3v-1h1v-1h1v2h2v-1h1v-1h1v1h1v1h2v-2h1v1h1v1h1v-1h1v-1h1v2h1v-3h1v2h1v-1h1v2h1v-1h6v-1h1v1h1v-2h1v3h1v-1h1v1h1v-2h1v1h1v1h2v-1h2v1h1v-1h1v-1h3v2h1v-2h1v1h3v1h1v-2h3v1h3v1h3v-2h1v1h5v-1h1v1h5v-2h1v2h3v1h1v-2h1v1h2v1h2v-1h1v1h4v-1h1v1h2v-1h1v-1h2v1h1v-1h1v2h1v-1h3v1h5v-1h1v-4h1v4h2v-1h3v1h4v1h2v-1h1v1h1v-1h1v-3h1v1h1v2h3v1h1v-2h2v1h1v-3h2v2h1v-1h1v2h1v-1h2v1h1v-1h1v2h1v-2h2v1h1v-1h1v1h1v-4h1v4h2v-4h1v3h1v-1h3v2h2v-2h1v3h1v-2h1v1h1v1h3v-1h4v1h1v-1h1v1h1v-1h1v-1h2v-2h2v2h1v1h1v-1h2v2h1v-2h2v2h1v-1h1v1h1v-1h1v1h2v-1h1v-1h2v-1h1v-4h1v4h1v-1h1v1h1v1h1v2h1v-1h1v-1h3v1h1v-2h1v2h2v-1h1v-1h1v1h1v1h2v1h1v-1h1v1h1v-5h1v3h1v-2h1v1h1v1h2v-4h1v4h1v1h1v-1h3v1h3v-1h1v1h1v-1h3v1h1v1h2v-1h1v1h1v-1h4v-1h1v1h1v1h1v-1h1v-1h1v2h1v-1h1v-1h2v2h1v-2h2v2h1v-2h3v-9h1v9h2v1h3v-1h1v2h1v-2h1v1h1v-1h1v1h1v-1h1v-1h1v2h2v-1h1v1h1v-1h1v1h3v-1h2v1h1v1h2v-4h1v2h1v2h2v-2h1v2h2v-2h1v1h1v1h2v-1h1v-1h1v-2h1v3h1v-1h1v-1h2v-1h1v1h1v1h1v1h1v1h1v-5h1v4h3v-1h1v1h1v-1h1v1h1v-1h1v1h2v1h1v-1h3v-1h1v2h1v-6h1v6h1v-2h3v1h2v1h2v-2h2v1h1v-1h1v2h1v-1h1v1h1v-2h2v1h2v-1h1v2h1v-1h4v-2h1v1h1v1h1v-3h1v4h2v-2h1v1h1v-2h1v2h1v1h2v-1h2v1h1v-2h2v2h1v-1h2v1h2v-2h1v2h1v-2h2v1h3v-1h1v1h1v-1h2v1h2v1h1v-1h1v1h1v-2h1v1h2v-3h1v1h1v1h2v1h1v-1h3v2h1v-1h1v-1h1v1h4v-1h1v2h1v-2h1v2h1v-1h1v1h1v-1h1v-1h1v2h1v-1h1v-1h1v2h1v-1h2v1h1v-1h1v-1h1v1h1v-1h2v1h1v-2h1v2h1v1h8v-1h2v1h4v-2h1v1h2v-1h1v1h1v1h1v-2h4v1h2v-1h1v-1h1v3h7v-1h1v1h2v-1h1v-4h1v5h3v-1h1v1h1v-2h1v1h1v1h2v-1h1v1h1v-2h1v2h1v-1h1v1h2v-1h1v1h11v-2h2v1h1v1h2v-1h1v1h2v-1h4v1h5v-1h1v-1h1v2h3v-1h2v1h2v-1h2v1h3v-1h1v-1h1v2h2v-1h1v1h2v-2h1v-3h1v5h1v-2h1v2h6v-1h5v-1h1v1h2v-2h1v3h6v-2h1v1h1v1h4v-1h2v-1h1v2h1v-5h1v4h1v1h5v-1h2v-2h2v3h1v-1h3v1h1v-1h1v1h3v-2h1v1h1v-1h1v1h3v1h1v-1h1v1h1v-1h3v-1h1v2h1v-1h1v1h7v-1h1v-3h1v4h2v-1h1v1h3v-3h1v3h1v-1h2v1h3v-1h1v-1h1v1h1v-1h2v1h1v1h1v-1h2v1h2v-1h2v1h2v-1h3v1h2v-1h1v-2h1v-2h1v1h2v1h2v2h2v1h1v-1h1v1h14v-2h2v2h2v-1h3v-1h1v2h3v-1h3v1h6v-1h3v1h1v-1h4v1h1v-1h1v1h1v-1h1v1h8v-2h1v2h1v-1h1v1h1v-1h1v1h2v-1h1v-1h1v2h1v-7h1v4h1v3h2v-1h1v1h1v-1h1v-1h1v1h1v-1h1v-1h1v3h2v-1h2v1h1v-1h1v-1h1v2h1v-1h1v1h1v-1h1v1h2v-1h1v1h2v-1h1v-1h1v2h1v-1h1v1h3v-2h1v1h1v1h2v-1h6v1h1v-1h3v1h2v-2h1v1h1v-1h1v2h5v-1h1v-20h1v21h5v-2h1v1h1v-2h1v1h1v1h1v1h1v-1h1v1h7v-1h3v1h1v-1h1v1h1v-1h5v1h1v-1h2v7h-1v1h-4v-2h-1v1h-1v1h-3v-1h-1v1h-2v-2h-1v1h-1v-1h-1v1h-1v-1h-3v1h-1v1h-3v1h-1v-2h-1v-1h-6v5h-1v13h-1v-17h-1v1h-2v-1h-1v-1h-1v1h-1v6h-1v-6h-1v-1h-1v1h-2v1h-3v-1h-3v-1h-6v1h-1v-1h-3v1h-3v-1h-1v1h-5v-1h-4v2h-2v1h-1v-1h-1v-2h-3v1h-2v-1h-3v1h-1v-1h-5v7h-1v-6h-1v1h-1v-1h-4v-1h-1v1h-1v-1h-7v1h-1v-1h-9v1h-5v1h-1v-2h-3v1h-2v-1h-4v2h-1v-2h-1v1h-1v-1h-5v1h-1v-1h-7v1h-1v-1h-3v1h-3v-1h-1v1h-1v-1h-1v2h-1v1h-1v2h-1v1h-1v-1h-1v-1h-1v3h-1v-3h-1v-1h-1v-2h-1v-1h-4v1h-1v-1h-3v2h-1v-2h-2v1h-1v1h-1v1h-1v-2h-1v1h-1v-2h-1v1h-1v-1h-1v1h-1v-1h-4v1h-1v-1h-1v2h-3v-1h-3v-1h-7v2h-1v-2h-9v1h-2v1h-1v1h-1v-1h-2v-1h-2v-1h-6v1h-2v-1h-1v1h-1v-1h-4v1h-1v2h-1v-1h-2v-1h-1v-1h-1v1h-2v-1h-8v1h-2v-1h-6v2h-1v-1h-2v-1h-1v1h-1v-1h-3v2h-2v2h-1v-3h-2v-1h-5v3h-1v-3h-1v1h-1v1h-1v1h-1v-3h-3v1h-2v1h-1v-1h-1v1h-1v-1h-1v2h-1v-2h-1v-1h-1v1h-1v-1h-1v2h-1v-2h-3v1h-3v-1h-1v1h-2v-1h-6v1h-3v-1h-1v1h-3v-1h-1v1h-3v-1h-1v1h-1v-1h-2v1h-1v-1h-1v1h-1v1h-2v-2h-5v1h-1v-1h-1v1h-1v1h-2v-1h-4v-1h-2v1h-1v-1h-3v1h-1v-1h-1v2h-1v-2h-3v2h-1v-1h-1v-1h-1v4h-1v-4h-1v2h-1v-1h-1v-1h-1v1h-2v-1h-4v1h-1v-1h-1v1h-1v1h-1v-2h-1v1h-1v1h-2v-2h-6v1h-1v-1h-9v2h-1v-1h-2v1h-1v-1h-1v-1h-1v2h-1v-2h-1v1h-1v-1h-1v1h-2v-1h-1v1h-1v-1h-4v2h-1v-1h-1v3h-1v-2h-1v1h-1v2h-1v-4h-1v1h-2v-1h-2v-1h-2v2h-2v-2h-2v5h-1v-3h-1v-1h-1v-1h-3v1h-2v1h-1v-1h-2v1h-5v-2h-1v2h-1v-2h-1v1h-1v2h-2v1h-1v-3h-2v1h-1v-1h-1v1h-1v-1h-2v-1h-1v1h-1v1h-1v1h-1v-1h-1v-2h-2v1h-2v1h-1v-1h-2v1h-1v-1h-2v1h-2v-2h-1v2h-4v-2h-2v2h-1v2h-1v-2h-1v1h-1v1h-1v-2h-2v5h-1v-6h-2v1h-1v-2h-1v7h-1v-4h-1v-2h-1v1h-1v-2h-1v1h-1v1h-1v-1h-1v2h-1v2h-1v-2h-1v2h-1v1h-1v-4h-2v-1h-2v-1h-1v2h-1v-1h-1v1h-1v-1h-1v-1h-3v1h-5v-1h-2v2h-1v-1h-4v2h-3v-3h-1v5h-1v-4h-1v-1h-1v2h-1v3h-1v-3h-1v-2h-4v3h-1v-2h-1v-1h-1v1h-1v26h-1v-27h-2v1h-1v-1h-1v1h-1v3h-1v-3h-1v2h-1v-1h-3v-2h-2v1h-2v1h-2v-1h-1v1h-1v-1h-3v-1h-1v1h-1v4h-2v-4h-1v1h-1v-1h-2v1h-1v1h-1v-2h-2v1h-2v-1h-1v-1h-1v1h-1v1h-1v-1h-1v1h-1v1h-1v-2h-3v-1h-1v1h-1v-1h-1v2h-1v-1h-2v-1h-1v2h-3v-1h-1v-1h-1v1h-2v-1h-1v1h-1v1h-1v1h-1v1h-1v1h-2v-2h-2v-1h-1v-1h-2v1h-1v-1h-3v2h-1v-1h-2v-1h-1v2h-2v-2h-2v3h-3v-2h-1v-1h-3v-1h-1v1h-2v1h-2v-2h-3v1h-1v1h-1v-1h-1v1h-1v-1h-1v-1h-1v2h-1v-1h-1v-1h-1v1h-1v-1h-3v1h-1v-1h-1v1h-1v5h-1v-4h-1v-1h-6v1h-1v2h-2v-1h-1v-1h-2v-1h-4v1h-1v-2h-1v2h-1v-1h-4v-1h-1v1h-3v-1h-1v1h-1v1h-1v5h-1v-3h-2v-2h-1v1h-2v-2h-2v1h-1v-1h-2v-1h-1v2h-1v-2h-2v1h-1v1h-2v-1h-2v5h-1v-5h-2v1h-1v2h-1v-4h-3v1h-1v1h-1v-1h-1v1h-1v-1h-1v-1h-1v2h-2v-1h-1v1h-1v-1h-4v-1h-5v2h-1v-2h-1v1h-1v4h-1v-3h-1v-1h-2v2h-1v-2h-1v1h-1v-1h-1v1h-1v-1h-1v1h-1v-1h-3v-1h-1v1h-1v1h-3v1h-1v-2h-4v-1h-1v2h-1v-1h-1v-1h-1v1h-1v-1h-1v2h-3v-1h-2v1h-1v-1h-1v-1h-1v2h-1v-1h-2v-1h-1v1h-2v1h-1v-1h-1v-1h-2v1h-2v1h-3v5h-1v-6h-2v1h-1v-1h-3v2h-1v-1h-3v-2h-1v1h-4v-1h-1v1h-1v-1h-1v2h-2v-1h-2v-1h-1v1h-1v2h-1v-1h-1v-2h-1v2h-1v-2h-4v1h-2v-1h-2v1h-2v1h-1v-1h-1v-1h-2v1h-4v1h-2v-1h-2v-1h-1v1h-2v-1h-2v2h-1v-1h-1v-1h-5v1h-2v1h-1v-1h-1v1h-1v-2h-3v1h-1v-1h-1v3h-1v-3h-7v7h-1v-7h-3v1h-1v1h-2v-2h-1v1h-5v2h-1v-1h-1v-2h-2v1h-1v1h-1v-1h-1v-1h-5v2h-1v-1h-1v-1h-3v3h-1v18h-2v-12h-1v-6h-1v-1h-2v-1h-3v-1h-2v1h-1v-1h-1v2h-1v-2h-1v1h-3v1h-3v-1h-1v3h-1v-2h-1v-1h-4v1h-2v-1h-2v1h-3v1h-1v-2h-1v1h-1v-1h-1v1h-1v4h-1v-5h-1v2h-1v-1h-1v-1h-1v1h-2v4h-1v-5h-1v1h-1v-1h-3v1h-2v1h-2v-2h-1v2h-2v1h-1v-2h-1v-1h-1v2h-2v1h-1v-3h-1v2h-1v1h-1v-1h-2v1h-1v2h-1v-3h-4v-1h-1v2h-1v-3h-2v2h-1v3h-1v-4h-5v-1h-2v1h-1v-2h-1v1h-1v-1h-1v1h-2v1h-1v-1h-5v-1h-1v2h-1v-1h-1v1h-1v3h-1v-5h-2v2h-2v3h-1v-5h-1v1h-1v-1h-10v1h-1v1h-1v1h-1v-1h-1v-1h-1v-1h-8v1h-1v-1h-1v1h-4v1h-2v-2h-6v2h-1v-1h-4v1h-1v-1h-1v-1h-3v2h-1v-2h-10v1h-1v1h-1v-1h-3v-1h-1v1h-1v-1h-1v1h-1v1h-1v-1h-1v1h-1v-1h-1v1h-1v-1h-1v1h-1v-1h-1v1h-1v-1h-2v-1h-4v3h-1v-2h-1v-1h-2v2h-1v-1h-3v-1h-1zM277 333h2v-1h1v-1h1v-2h1v5h2v-1h1v1h1v-2h1v1h1v1h1v-3h1v3h1v-1h1v1h2v-12h1v12h2v-1h3v1h5v-3h1v3h4v-1h3v1h1v-2h1v1h1v-1h1v-2h1v4h3v-1h2v1h4v-1h2v1h10v-1h1v1h9v-1h1v1h3v-2h3v1h2v1h2v-2h1v2h1v-1h1v1h2v-2h1v2h6v-2h1v2h12v-1h2v1h2v-1h2v1h2v-1h2v-1h1v1h2v1h1v-2h1v1h1v-1h1v1h1v1h10v-1h1v1h2v-4h1v3h1v-3h1v4h7v-1h1v1h8v-1h1v-1h1v1h3v1h5v-1h2v-2h1v1h1v-1h2v1h1v-1h1v2h1v1h2v-2h1v1h3v1h1v-2h1v1h1v1h1v-1h1v-1h1v2h5v-1h4v1h3v-1h1v1h7v-2h2v-1h1v2h2v1h2v-1h1v1h1v-2h1v1h2v1h3v-1h1v-1h1v1h1v1h2v-1h1v1h6v-2h1v2h32v-1h1v-1h1v1h2v1h2v-2h1v1h2v1h1v-1h2v1h2v-1h2v1h7v-4h1v4h7v-1h1v1h11v-1h2v1h1v-1h1v1h2v-1h1v1h3v-1h3v1h7v-2h1v1h1v-1h1v2h4v-1h3v1h3v-1h2v-1h1v2h1v-3h1v2h1v1h1v-1h2v-1h1v1h1v1h1v-1h2v1h6v-1h3v1h1v-2h1v2h5v-1h1v1h8v-1h2v1h1v-1h2v-1h1v2h1v-3h1v2h1v-4h1v5h1v-2h1v2h1v-1h1v1h3v-2h1v1h1v1h1v-1h4v-1h1v1h1v1h1v-1h1v1h4v-1h1v1h3v-1h1v-1h2v-1h1v2h1v1h4v-1h1v1h7v-1h1v1h1v-1h1v1h1v-1h2v1h2v-1h3v1h1v-2h2v1h2v-2h1v1h1v1h1v1h1v-1h1v1h2v-2h1v2h1v-1h1v1h8v-1h2v1h1v-3h1v3h1v-1h1v1h2v-1h1v1h12v-1h1v-1h1v2h3v-1h1v1h1v-1h5v-3h1v3h4v1h3v-1h1v1h2v-2h2v1h1v1h1v-1h3v-1h1v1h1v1h11v-3h1v3h2v-1h1v1h1v-1h3v1h9v-1h1v-1h3v1h2v-1h1v1h1v-6h1v5h1v-4h1v4h2v1h1v-2h1v2h1v-1h2v1h1v-5h1v6h1v-3h1v1h1v1h1v-1h1v2h2v-1h1v-4h1v5h4v-1h3v-1h2v1h1v1h2v-1h2v1h2v-1h2v1h3v-1h4v1h1v-1h2v-1h1v1h1v1h1v-1h1v1h1v-1h4v-1h1v1h2v-1h1v1h1v1h2v-1h4v1h2v-5h1v5h2v-5h1v4h3v1h1v-2h2v1h1v1h1v-1h3v1h4v-5h1v5h1v-4h1v4h1v-1h2v1h10v-1h3v-2h1v1h1v-1h2v3h8v-3h1v3h3v-1h1v1h2v-1h1v1h1v-1h1v-1h1v2h8v-1h1v-1h1v1h2v1h3v-1h2v1h1v-1h1v-1h1v1h1v1h2v-2h1v1h2v1h1v-1h1v1h8v-1h1v1h2v-2h1v1h1v1h4v-1h1v1h2v-1h2v1h2v-1h2v1h2v-2h1v2h2v-1h4v1h2v-1h1v1h3v-1h1v1h2v-1h2v1h1v-1h1v1h1v-1h1v-1h1v1h2v1h11v-1h1v1h2v-1h2v1h1v-1h1v-1h1v1h3v1h2v-1h1v-1h1v2h3v-1h1v1h5v-1h1v1h6v-1h2v1h3v-1h1v-1h1v1h1v1h1v-2h1v2h2v-1h1v1h1v-1h1v1h2v-2h1v2h1v-1h1v-1h1v1h1v1h4v-1h2v-1h1v2h5v-1h1v1h1v-2h1v1h1v1h5v-1h1v-1h2v1h2v-1h1v2h2v-1h1v1h1v-1h4v1h1v-1h1v1h3v-1h1v1h1v-1h3v1h1v-1h1v1h2v-1h1v-4h1v5h3v-1h1v1h5v-1h2v-1h2v1h1v1h2v-1h1v1h2v-1h5v1h3v-6h1v6h1v-2h1v2h7v-1h1v-7h1v7h1v-1h1v1h1v1h1v-1h1v1h3v-2h1v2h3v-1h3v1h9v-2h1v2h4v-1h1v-1h1v1h1v-2h1v2h1v1h1v-1h1v-1h1v1h5v1h2v-2h1v1h3v-4h1v4h1v1h2v-1h1v1h2v-1h1v-1h1v2h1v-3h1v1h1v-2h1v3h1v-2h1v2h1v1h1v-1h2v-2h1v1h1v1h1v1h7v-1h1v-1h1v1h3v1h4v-1h1v1h4v-5h1v5h2v-1h1v1h1v-1h1v1h1v-2h1v1h3v1h1v-1h1v1h1v-2h1v2h3v-1h1v1h1v-2h1v1h1v-1h1v2h2v-1h1v-1h1v1h1v-1h1v2h1v-1h1v-1h2v1h1v-1h1v2h1v-1h1v1h2v-1h3v1h3v-1h1v-2h1v2h6v1h8v-1h1v1h6v-1h6v-1h1v-1h1v1h1v2h2v-1h1v-1h1v1h1v1h7v-2h1v2h4v-1h4v1h1v-1h5v1h2v-1h1v6h-3v1h-2v-1h-4v2h-1v-2h-1v1h-1v1h-1v-2h-1v1h-1v-1h-2v1h-2v-1h-1v1h-1v-1h-1v1h-1v1h-1v-1h-1v1h-1v-1h-1v-1h-4v1h-1v-1h-4v1h-2v1h-1v-2h-3v1h-1v-1h-3v1h-1v3h-1v-3h-1v1h-2v-2h-7v1h-2v-1h-2v1h-1v-1h-1v1h-2v-1h-1v1h-2v-1h-3v1h-2v1h-1v-1h-1v-1h-5v1h-1v-1h-4v1h-4v-1h-4v1h-2v2h-1v-3h-3v1h-4v1h-1v-1h-1v-1h-4v1h-1v1h-1v-2h-8v1h-1v1h-1v-1h-5v-1h-4v1h-1v-1h-2v1h-1v1h-2v-1h-1v-1h-3v1h-3v-1h-3v1h-1v-1h-2v1h-2v-1h-4v1h-1v-1h-1v2h-2v1h-1v-2h-3v-1h-1v1h-1v-1h-5v1h-4v2h-1v-1h-1v-1h-1v-1h-3v1h-1v1h-1v3h-1v-5h-1v1h-1v1h-1v-2h-2v1h-1v-1h-8v10h-1v-8h-1v-2h-1v1h-1v-1h-4v1h-1v4h-1v-5h-1v10h-1v-7h-1v-3h-17v1h-1v-1h-2v1h-1v1h-1v-2h-2v1h-1v-1h-4v2h-2v-1h-2v-1h-2v1h-1v-1h-1v1h-3v-1h-4v1h-1v-1h-1v1h-1v-1h-2v1h-1v1h-2v3h-1v-5h-1v1h-2v-1h-1v1h-1v-1h-4v1h-2v-1h-1v1h-2v-1h-1v1h-1v-1h-4v1h-3v-1h-2v1h-1v-1h-1v1h-2v-1h-12v1h-5v-1h-6v2h-1v-1h-1v-1h-1v5h-1v-4h-5v-1h-1v1h-3v-1h-1v1h-2v-1h-3v1h-1v-1h-1v1h-1v-1h-1v1h-1v1h-1v-1h-1v-1h-2v1h-1v-1h-3v1h-1v-1h-2v1h-1v-1h-1v1h-1v1h-1v-2h-1v1h-2v-1h-2v1h-1v-1h-6v1h-2v-1h-1v2h-3v-2h-4v1h-1v1h-2v-1h-2v1h-2v-1h-2v-1h-3v1h-1v-1h-2v1h-2v4h-1v-4h-1v7h-1v-8h-14v1h-2v-1h-1v2h-2v-1h-3v-1h-1v1h-1v-1h-5v1h-1v1h-1v1h-1v-2h-1v1h-1v-1h-1v-1h-1v1h-1v1h-1v-1h-3v3h-1v-4h-1v1h-2v-1h-5v1h-1v-1h-1v1h-1v-1h-1v1h-3v1h-1v-2h-3v1h-2v-1h-1v1h-3v4h-1v-5h-3v1h-2v-1h-2v1h-2v2h-1v-3h-3v1h-1v-1h-3v1h-1v2h-1v-1h-1v1h-1v-2h-1v-1h-4v1h-1v-1h-1v4h-1v-3h-5v1h-1v-1h-1v-1h-9v2h-1v-1h-1v-1h-7v1h-4v-1h-1v1h-1v-1h-6v1h-1v1h-2v-2h-3v1h-1v1h-1v-2h-1v1h-1v-1h-1v1h-2v-1h-1v1h-1v-1h-1v1h-1v-1h-2v1h-1v-1h-1v2h-1v-1h-2v4h-1v-4h-1v2h-1v-2h-1v1h-1v-1h-1v9h-1v-7h-2v2h-1v-3h-1v3h-1v-2h-1v-2h-1v1h-3v-2h-1v3h-1v-3h-3v1h-2v-1h-1v1h-1v-1h-4v1h-1v-1h-1v1h-1v-1h-4v2h-1v-1h-1v-1h-10v7h-1v-7h-4v1h-2v-1h-5v1h-1v-1h-2v1h-1v4h-1v-5h-3v1h-1v1h-1v-1h-1v-1h-2v1h-1v1h-1v-2h-4v2h-1v-1h-2v-1h-16v2h-1v2h-1v-4h-1v1h-2v-1h-2v1h-5v-1h-1v1h-2v-1h-3v1h-1v-1h-9v1h-3v1h-1v-1h-1v1h-1v-2h-4v1h-2v1h-1v-1h-1v2h-1v-3h-6v1h-2v-1h-5v1h-1v-1h-2v1h-2v-1h-1v1h-2v-1h-1v1h-1v-1h-1v1h-3v-1h-1v1h-1v1h-2v-2h-1v2h-1v-1h-4v-1h-9v1h-1v-1h-4v1h-3v-1h-2v1h-1v1h-2v-2h-5v1h-1v1h-1v-1h-1v-1h-12v1h-1v1h-1v-1h-1v1h-1v-1h-2v1h-1v-2h-8v1h-1v1h-1v-1h-1v-1h-5v1h-1v-1h-6v1h-2v-1h-6v1h-4v-1h-2v1h-1v3h-1v-4h-3v1h-2v-1h-1v1h-3v-1h-1v1h-3v3h-1v-3h-1v-1h-1v1h-2v-1h-1v1h-1v-1h-3v1h-1v-1h-4v1h-1v1h-1v-2h-3v3h-1v-2h-1v2h-1v-2h-2v-1h-3v4h-1v-4h-1v1h-1v-1h-3v2h-1v-1h-1v1h-2v-1h-2v-1h-5v1h-1v-1h-2v1h-7v-1h-8v3h-1v-3h-2v1h-3v-1h-7v1h-2v-1h-4v1h-1v1h-1v-1h-4v1h-1v-1h-4v-1h-2v1h-1v1h-2v-1h-1v-1h-1v1h-2v-1h-1v1h-3v-1h-3v1h-4v-1h-2v1h-3v-1h-1v1h-1v-1h-4v2h-1v-2h-1v1h-2v-1h-4v2h-1v-1h-1v-1h-1v1h-1v-1h-4v1h-3v1h-1v-2h-1v1h-3v2h-1v-2h-1v-1h-1v1h-1v-1h-1v2h-4v-1h-4v-1h-8v2h-1v-2h-1v3h-1v-3h-4v2h-1v-2h-1v1h-3v-1h-2v1h-1v-1h-1v1h-2v-1h-7v1h-1v-1h-2v1h-1v-1h-4v1h-1v-1h-3v2h-2v-1h-1v2h-1v-1h-1v-2h-10v1h-1v-1h-9v2h-2v-2h-3v2h-2v-1h-2v-1h-1v2h-1v-2h-7v5h-1v-5h-1v1h-1v-1h-4v3h-1v-2h-1v-1h-1v1h-3v-1h-3v1h-1v-1h-1v1h-1v-1h-4v13h-1v-13h-9v1h-1v1h-1v-1h-1v-1h-5zM277 364h14v-1h1v1h11v-2h1v2h1v-1h1v-1h1v1h2v1h1v-1h2v1h4v-2h2v2h7v-2h1v1h1v-1h1v1h2v1h6v-1h1v1h4v-1h1v-6h1v7h1v-1h1v-1h1v1h4v1h2v-1h1v1h1v-1h1v1h4v-1h1v1h5v-3h1v3h9v-1h3v1h1v-1h1v1h2v-1h1v1h36v-1h1v-1h1v2h1v-1h2v1h1v-1h1v1h6v-5h1v5h3v-1h3v1h4v-1h4v1h6v-1h1v1h2v-1h1v-2h1v2h1v-1h2v1h1v1h1v-1h1v1h2v-1h1v1h3v-1h1v1h8v-1h1v1h10v-1h1v1h2v-1h1v1h5v-2h1v1h1v1h3v-5h2v5h11v-1h1v1h2v-1h1v1h1v-1h1v-1h1v2h2v-1h1v1h6v-2h1v2h1v-1h2v1h1v-2h1v2h1v-1h1v-1h1v1h1v1h2v-1h1v1h4v-1h1v1h1v-1h3v-1h1v1h1v1h2v-1h3v-1h1v1h2v-1h1v1h1v1h1v-1h2v1h4v-1h2v1h4v-1h1v-2h1v2h2v1h3v-1h1v1h21v-1h2v1h1v-2h1v1h3v1h2v-2h1v-1h1v3h2v-1h1v1h2v-1h2v1h2v-1h1v1h3v-1h1v1h11v-1h5v1h1v-1h1v-1h1v-1h2v2h1v1h2v-1h3v-2h1v3h1v-1h1v1h2v-1h1v1h4v-1h1v1h1v-2h1v2h10v-1h1v-1h1v1h2v-1h1v1h2v1h6v-1h3v1h1v-1h2v1h2v-1h4v1h1v-2h3v2h3v-1h1v-1h3v1h1v1h1v-1h1v1h1v-1h2v1h2v-2h1v2h1v-2h1v2h2v-1h1v1h2v-1h1v1h1v-1h2v-1h1v2h3v-1h3v1h2v-1h3v1h2v-2h2v1h1v1h13v-1h1v1h4v-1h1v1h6v-2h1v2h1v-1h1v-2h1v1h1v1h1v-1h2v1h1v-1h1v-1h1v2h1v-3h1v3h4v-4h1v5h4v-2h1v1h1v1h1v-1h3v1h2v-1h2v1h1v-1h3v1h9v-2h1v1h1v-1h2v2h1v-1h1v1h3v-1h1v1h2v-1h1v1h2v-1h2v1h1v-1h7v-1h1v1h1v-1h2v1h1v1h1v-1h1v-1h1v-1h1v2h1v-3h1v4h5v-1h1v1h2v-1h3v-1h1v2h3v-1h2v1h2v-1h2v1h2v-1h1v-1h3v1h2v1h1v-1h1v1h1v-1h5v-2h2v2h2v-1h1v-1h1v3h6v-1h1v1h8v-1h1v-1h1v-1h2v2h1v1h9v-2h2v2h1v-2h1v1h1v1h1v-1h1v1h11v-1h2v1h4v-1h1v1h2v-1h2v-1h1v1h2v-1h1v2h6v-4h1v4h1v-3h1v2h1v1h2v-2h1v1h2v1h3v-1h1v-1h1v1h2v-1h1v1h2v1h1v-1h2v1h9v-1h1v1h7v-1h1v-1h1v1h1v1h2v-2h1v1h2v1h2v-1h2v1h3v-1h1v1h2v-1h1v-1h1v1h1v-1h1v1h2v-1h1v1h2v1h4v-1h2v-1h1v1h1v1h16v-4h1v4h4v-1h2v1h1v-1h1v-1h1v2h1v-1h1v1h1v-1h2v1h2v-2h4v1h2v1h2v-1h2v1h2v-2h1v1h1v1h8v-2h1v2h2v-1h1v1h1v-1h1v1h3v-1h1v1h3v-1h2v1h2v-3h1v3h4v-1h1v1h2v-1h3v1h5v-1h1v1h3v-2h1v2h1v-1h1v1h2v-2h1v2h1v-1h2v1h5v-1h4v-1h2v1h2v1h4v-1h1v1h1v-1h1v1h6v-1h1v1h1v-1h1v-1h1v2h3v-1h3v1h1v-1h1v-1h1v1h1v1h1v-1h1v1h2v-1h1v1h3v-1h3v1h1v-2h2v1h2v1h2v-1h1v1h4v-1h1v1h10v-1h1v1h5v-1h5v-1h1v1h3v1h11v-1h3v1h1v-1h1v-3h1v2h1v1h1v1h6v-2h1v1h1v1h6v-1h2v-1h1v2h5v-3h1v2h3v-1h1v1h1v1h2v-2h1v1h1v1h6v-2h1v2h2v-1h1v1h2v-1h1v1h3v-1h1v-1h1v2h7v-1h2v-1h2v1h1v1h1v-1h1v1h1v-1h1v1h3v-1h2v1h1v-1h1v1h5v-1h2v1h2v-1h2v1h1v-1h1v-1h1v2h1v-1h4v-1h1v1h3v1h9v-1h1v-1h2v1h1v1h6v-1h1v-1h4v1h1v-1h1v1h3v1h2v-2h1v-1h2v2h1v1h1v-1h3v-1h1v1h3v1h1v-1h1v1h2v-1h1v-1h1v8h-2v-1h-3v1h-2v4h-1v-5h-10v1h-2v1h-1v-2h-2v1h-1v1h-1v-1h-2v-1h-1v1h-1v1h-1v-2h-2v1h-1v-1h-8v2h-2v-1h-2v-1h-1v1h-1v-1h-1v4h-1v-3h-2v-1h-5v1h-3v-1h-7v2h-1v-1h-1v-1h-2v1h-1v1h-1v-1h-3v1h-1v-2h-1v3h-1v-2h-1v-1h-1v1h-3v-1h-1v2h-1v-1h-1v1h-2v-2h-1v1h-1v2h-1v-1h-1v-1h-1v-1h-3v2h-1v-1h-1v-1h-3v1h-2v-1h-1v1h-1v-1h-5v1h-1v1h-3v-1h-2v-1h-1v1h-1v1h-1v-2h-3v4h-1v-4h-1v1h-2v-1h-4v5h-1v-5h-4v2h-1v-2h-1v1h-3v1h-2v-1h-3v-1h-1v1h-1v-1h-2v1h-3v1h-1v-1h-2v-1h-8v1h-4v-1h-3v1h-1v1h-1v-2h-8v1h-2v-1h-1v2h-1v-1h-1v1h-2v-1h-2v-1h-2v1h-2v3h-1v-3h-1v-1h-1v2h-1v-1h-1v1h-1v-1h-4v-1h-2v2h-2v-2h-5v1h-1v-1h-2v1h-4v1h-2v-1h-1v-1h-1v2h-1v-2h-1v1h-1v1h-1v-1h-1v1h-1v-1h-1v-1h-4v1h-1v-1h-4v1h-2v-1h-1v2h-1v-1h-1v-1h-1v1h-5v-1h-5v3h-1v-1h-2v-2h-4v2h-1v-1h-1v-1h-4v1h-1v-1h-1v1h-3v-1h-9v1h-2v-1h-4v1h-2v-1h-2v1h-3v-1h-1v1h-4v1h-1v-1h-1v-1h-1v1h-1v1h-1v-2h-2v2h-2v-2h-6v2h-1v-2h-2v1h-3v1h-1v-2h-2v1h-2v-1h-2v1h-1v1h-1v-1h-5v1h-1v-2h-1v1h-1v-1h-1v2h-1v1h-1v-2h-3v-1h-1v1h-2v-1h-3v1h-1v-1h-2v1h-1v-1h-2v1h-3v-1h-5v1h-1v-1h-1v1h-1v-1h-1v1h-2v-1h-3v1h-2v-1h-1v1h-1v1h-1v-1h-1v1h-1v-1h-1v-1h-1v1h-5v1h-1v-1h-3v-1h-10v1h-3v-1h-5v1h-1v-1h-1v1h-1v-1h-3v1h-1v-1h-18v1h-1v-1h-1v1h-1v-1h-7v1h-3v-1h-1v5h-1v-5h-4v5h-1v-5h-5v1h-4v-1h-6v2h-1v-2h-2v1h-1v1h-1v-2h-1v1h-1v-1h-2v1h-3v-1h-2v2h-2v-1h-1v-1h-4v1h-2v1h-1v-1h-1v1h-1v-1h-1v-1h-2v1h-1v-1h-3v1h-1v-1h-4v1h-4v-1h-1v1h-1v-1h-2v1h-2v-1h-6v1h-1v1h-1v-2h-2v1h-1v1h-1v-2h-16v1h-2v1h-1v-2h-2v1h-2v-1h-1v2h-1v-2h-6v1h-2v-1h-2v1h-1v1h-4v-2h-2v1h-1v1h-4v-1h-1v-1h-4v1h-1v-1h-1v4h-1v-2h-1v-1h-6v-1h-3v1h-2v-1h-5v1h-2v-1h-1v2h-1v-1h-1v-1h-6v1h-1v-1h-4v4h-1v-4h-7v2h-2v-1h-2v1h-1v-2h-16v1h-3v1h-1v-2h-2v1h-1v-1h-4v1h-5v-1h-3v1h-3v-1h-4v1h-3v1h-1v-1h-1v-1h-5v1h-1v-1h-3v1h-1v1h-1v-1h-1v1h-1v-1h-1v-1h-10v1h-1v1h-1v-1h-2v-1h-2v1h-1v-1h-6v1h-1v-1h-2v1h-1v-1h-5v1h-1v-1h-3v1h-3v1h-1v-1h-2v-1h-2v3h-1v-3h-11v1h-4v3h-1v-4h-1v1h-1v1h-1v-1h-1v-1h-2v1h-1v-1h-7v1h-2v1h-1v-2h-1v1h-1v-1h-1v1h-7v-1h-1v1h-2v-1h-1v1h-2v1h-1v-1h-1v1h-1v-2h-3v1h-1v-1h-1v1h-2v-1h-1v1h-4v1h-1v-1h-3v-1h-6v1h-2v-1h-6v1h-1v-1h-4v1h-1v-1h-1v1h-1v-1h-8v1h-1v-1h-1v1h-1v-1h-5v1h-3v-1h-2v1h-2v1h-1v-1h-1v-1h-2v1h-1v-1h-2v2h-1v-1h-3v-1h-1v1h-3v1h-1v-1h-1v1h-2v-1h-1v1h-1v-1h-1v1h-2v-1h-4v-1h-3v1h-2v-1h-5v1h-3v1h-1v-1h-1v1h-2v-2h-1v5h-1v2h-1v-6h-1v-1h-1v1h-1v-1h-1v1h-1v-1h-1v1h-2v2h-1v-2h-1v3h-1v-3h-1v-1h-3v1h-1v1h-1v-1h-1v1h-1v-1h-1v-1h-1v1h-1v-1h-4v1h-2v1h-3v1h-1v-2h-2v-1h-2v1h-1v1h-1v-1h-1v1h-1v-2h-1v1h-1v-1h-4v2h-2v-1h-2v-1h-1v1h-1v-1h-4v1h-1v-1h-11v1h-1v-1h-3v7h-1v-6h-1v1h-1v-2h-9v3h-2v-2h-2v-1h-4v1h-1v1h-1v-2h-1v1h-1v-1h-2v1h-1v1h-1v-1h-4v-1h-3v2h-1v-2h-2v1h-1v1h-1v-1h-3v2h-1v-2h-1v-1h-5v4h-1v-3h-1v-1h-1v2h-1v-1h-5v1h-1v-1h-1v-1h-6v1h-1v1h-4v-2h-3v1h-1v-1h-1v1h-2v1h-1v-1h-1v1h-1v-1h-6v2h-1v-1h-1v8h-1v-10h-5v1h-2v1h-1v-2h-3v1h-3v-1h-11v2h-1v-1h-2v-1h-2v1h-2v2h-1v-1h-1v-1h-1v1h-1v1h-2v-1h-1v-1h-2v-1h-3v1h-1v1h-2v-1h-1v-1h-5v1h-1v1h-1v1h-1v-3h-4v1h-3v-1h-1v1h-1zM277 392h2v1h1v1h3v-1h2v2h2v-1h1v1h1v-1h2v1h3v-1h1v1h1v-1h1v1h1v-2h1v1h1v-1h1v1h1v-1h1v1h4v-1h1v2h1v-1h2v-1h2v2h1v-1h1v1h4v-1h2v1h2v-1h2v-2h1v2h1v1h5v-2h1v1h1v-1h1v1h1v1h2v-2h3v2h1v-2h1v1h1v1h4v-1h1v-1h2v2h1v-1h1v1h4v-1h3v1h1v-3h1v3h3v-1h1v1h1v-2h1v1h1v-1h3v1h2v-1h1v2h5v-1h1v1h7v-1h1v-1h1v1h3v-2h1v1h5v1h1v1h1v-1h1v1h1v-2h1v1h3v1h3v-1h2v1h3v-1h1v1h2v-5h1v4h2v1h9v-3h1v2h2v-2h2v2h1v-1h1v1h1v1h2v-2h2v1h1v1h3v-2h1v2h2v-1h3v1h1v-1h1v-2h1v3h1v-1h2v1h1v-1h1v-3h1v4h4v-1h2v-2h1v3h4v-1h1v1h3v-1h2v-2h1v1h2v2h4v-1h1v-1h1v1h1v1h2v-2h2v-2h1v4h1v-1h2v1h3v-1h1v1h3v-1h1v1h4v-1h2v1h1v-1h1v1h3v-1h1v1h2v-4h1v4h1v-1h4v-2h1v3h3v-1h1v1h2v-1h2v-3h1v4h5v-1h2v1h3v-1h1v1h2v-1h1v-1h1v2h1v-1h1v-1h1v2h1v-1h2v1h4v-1h1v1h1v-1h1v1h3v-5h1v-1h1v6h3v-1h1v1h1v-2h1v1h1v-3h1v2h2v1h1v-1h2v1h1v1h1v-1h1v1h6v-1h2v1h1v-1h1v-1h1v-1h1v1h1v1h5v-1h1v1h1v1h2v-2h2v2h3v-3h1v1h1v1h2v1h6v-1h1v1h1v-1h2v-1h1v1h1v1h7v-1h2v1h7v-1h2v-1h1v1h2v1h5v-1h1v1h2v-1h1v-1h2v-2h1v2h1v1h1v1h11v-1h1v1h3v-2h3v1h1v1h1v-1h1v1h1v-1h1v1h1v-4h1v3h1v1h2v-1h1v1h1v-1h1v1h6v-2h2v-1h2v2h3v1h10v-1h2v1h2v-1h1v-2h1v1h3v2h5v-5h1v5h3v-2h2v1h1v1h1v-1h1v1h9v-1h2v1h4v-1h1v1h5v-1h4v1h2v-1h1v-1h1v2h6v-1h1v1h5v-5h1v5h8v-1h1v1h1v-5h1v4h1v1h1v-1h2v-1h2v2h1v-3h1v2h1v-1h1v2h2v-1h1v1h3v-1h4v1h1v-2h1v2h3v-1h1v1h1v-1h1v1h5v-2h2v-1h1v1h3v1h2v-1h1v1h3v-1h1v2h1v-2h1v2h2v-1h1v1h1v-1h3v1h5v-2h2v1h2v-1h1v2h8v-2h1v1h2v1h3v-1h2v1h1v-1h1v1h1v-2h1v1h2v1h1v-1h2v1h7v-1h1v1h1v-1h1v1h5v-1h1v1h4v-1h2v-1h2v2h1v-1h4v-6h1v7h3v-1h1v-2h1v2h3v1h1v-1h3v1h1v-1h2v-1h1v2h1v-1h1v1h2v-1h1v-1h1v1h1v1h5v-1h1v-1h2v-1h1v2h1v1h1v-1h2v1h2v-2h1v2h3v-1h1v-1h1v1h1v-1h1v2h4v-2h1v2h3v-1h1v1h1v-1h1v1h5v-7h1v7h1v-1h2v1h4v-1h1v1h1v-1h1v1h3v-2h1v1h1v1h4v-2h1v1h1v1h3v-2h1v2h3v-1h1v1h3v-4h1v4h4v-1h1v-1h2v1h2v-1h1v1h2v1h9v-1h1v1h2v-1h1v1h1v-1h1v1h1v-1h1v-1h1v2h2v-1h2v1h1v-1h1v1h1v-2h5v2h5v-2h1v1h1v1h1v-1h1v1h1v-1h1v-1h1v2h8v-1h2v1h1v-2h1v2h1v-1h2v1h1v-2h1v1h3v-1h3v1h1v-1h2v2h2v-1h4v1h1v-1h1v-1h1v1h3v-1h1v2h4v-2h2v1h1v1h1v-1h1v1h9v-1h3v1h2v-2h1v1h1v-1h1v2h4v-1h1v-3h1v4h2v-1h2v-1h1v1h1v1h3v-1h1v-1h1v1h1v-1h1v1h4v1h5v-1h1v-2h1v3h1v-1h2v1h1v-1h1v1h6v-1h1v1h2v-1h2v1h10v-3h1v3h4v-1h1v1h1v-1h2v-1h2v2h2v-1h2v-2h1v1h2v1h3v1h2v-1h3v1h1v-5h1v5h16v-2h2v2h1v-1h1v-1h2v-1h2v3h1v-1h2v1h2v-1h1v-2h1v2h1v-1h1v2h1v-5h1v4h1v1h2v-1h1v-7h1v6h1v-1h1v2h1v-1h1v1h1v1h2v-1h1v1h2v-2h1v1h2v-1h1v1h2v1h2v-1h1v-1h1v2h1v-2h1v1h1v1h2v-1h1v1h2v-1h1v-1h1v2h1v-1h1v-1h1v2h1v-1h2v1h6v-1h2v1h2v-1h1v-1h1v2h1v-1h5v-2h1v2h2v1h16v-4h1v-2h1v6h1v-2h1v-1h1v1h1v-1h1v1h1v1h1v1h5v-4h1v4h1v-1h3v1h1v-2h1v1h4v1h1v-2h2v1h1v-1h1v1h1v1h1v-1h1v-1h2v2h1v-1h1v-1h1v1h1v-1h1v2h1v-1h1v-5h1v6h2v-1h1v-2h1v3h9v-1h3v1h5v-1h1v1h1v-4h1v3h2v-1h1v2h9v7h-1v-1h-2v-1h-1v2h-1v-1h-1v-1h-3v1h-1v1h-3v-2h-1v1h-2v-1h-11v1h-2v1h-1v-2h-6v7h-1v-6h-1v-1h-5v1h-1v-1h-2v1h-1v2h-1v-3h-6v1h-1v-1h-2v1h-1v-1h-1v2h-1v-2h-3v1h-1v1h-1v-2h-1v2h-1v-1h-1v1h-1v-1h-4v-1h-2v1h-1v-1h-1v6h-1v-6h-1v1h-1v1h-1v-1h-1v2h-1v-1h-1v-1h-3v2h-1v-3h-6v1h-1v1h-2v-2h-8v3h-1v-1h-3v-2h-11v2h-1v-2h-2v2h-1v-1h-2v-1h-3v1h-1v2h-1v-2h-2v-1h-6v2h-3v-1h-1v1h-1v-2h-8v6h-1v-5h-1v1h-1v1h-1v-1h-1v-1h-1v1h-1v-1h-1v1h-1v-1h-3v-1h-2v1h-1v-1h-7v1h-1v1h-1v1h-1v-2h-1v1h-1v-2h-4v2h-1v-2h-1v1h-1v-1h-2v1h-1v2h-2v-2h-1v1h-1v-2h-1v1h-1v-1h-1v1h-1v-1h-2v1h-4v-1h-5v1h-1v-1h-2v2h-1v-1h-1v1h-1v-2h-2v1h-1v-1h-4v2h-1v-2h-1v1h-2v1h-3v-2h-5v2h-1v-2h-1v1h-2v-1h-1v1h-3v-1h-1v1h-1v1h-1v-2h-1v1h-1v2h-1v-3h-5v2h-1v-1h-1v-1h-1v3h-1v-2h-3v1h-1v-2h-1v1h-1v-1h-3v1h-1v-1h-2v1h-1v1h-1v4h-1v-6h-1v2h-1v-1h-1v-1h-2v1h-2v-1h-5v1h-2v-1h-1v5h-1v-5h-1v1h-1v-1h-2v1h-1v-1h-1v4h-1v-4h-1v2h-2v1h-1v-2h-1v-1h-1v1h-1v-1h-2v1h-1v2h-1v-1h-3v1h-1v-3h-1v1h-1v-1h-4v1h-2v-1h-2v1h-2v1h-2v-2h-5v1h-1v3h-1v-2h-2v-1h-4v-1h-12v1h-2v1h-3v-2h-3v2h-2v1h-1v-3h-1v5h-1v-5h-4v4h-1v-3h-1v-1h-4v1h-1v-1h-1v1h-1v-1h-3v1h-1v-1h-3v2h-1v-1h-2v-1h-4v1h-2v-1h-3v2h-1v-1h-2v-1h-2v1h-1v-1h-5v2h-2v-2h-3v1h-2v1h-3v1h-2v-2h-2v1h-1v-1h-2v1h-1v1h-1v-2h-1v-1h-2v1h-1v-1h-1v5h-1v-5h-3v1h-1v-1h-24v2h-1v-1h-1v-1h-3v1h-1v1h-1v-1h-1v1h-1v-1h-1v1h-1v-1h-1v2h-1v-2h-4v-1h-2v1h-1v-1h-3v1h-1v-1h-2v1h-2v1h-1v1h-1v2h-1v-3h-2v-1h-1v6h-1v-7h-3v1h-3v-1h-4v1h-1v1h-2v-1h-1v-1h-5v3h-1v-2h-1v-1h-18v5h-1v-4h-1v-1h-21v1h-1v-1h-3v1h-2v-1h-13v2h-1v-2h-3v1h-2v3h-1v-1h-1v-2h-1v1h-1v1h-1v-1h-1v-2h-3v2h-1v-2h-2v1h-1v-1h-1v2h-2v-2h-2v1h-1v-1h-2v1h-1v-1h-2v2h-1v-1h-1v-1h-15v1h-1v2h-1v-3h-8v1h-2v-1h-2v2h-1v1h-1v-1h-2v3h-1v-4h-5v1h-1v-1h-1v-1h-2v2h-1v-2h-3v1h-1v-1h-2v1h-1v-1h-1v3h-1v-1h-1v-2h-7v1h-1v-1h-1v1h-1v-1h-3v1h-2v-1h-1v1h-2v-1h-4v1h-1v2h-1v-1h-1v-2h-5v1h-3v-1h-1v1h-1v-1h-3v2h-1v1h-1v-3h-4v1h-1v-1h-1v3h-1v-1h-1v-1h-1v-1h-9v1h-1v2h-1v1h-1v-2h-3v1h-1v-1h-2v-2h-4v2h-2v-2h-1v1h-1v1h-1v-1h-3v-1h-1v1h-1v-1h-2v1h-1v-1h-2v1h-1v1h-2v-1h-1v1h-1v1h-1v-2h-4v1h-1v-1h-4v-1h-12v2h-4v1h-1v-2h-3v-1h-1v2h-1v-1h-1v-1h-4v2h-1v-1h-1v2h-2v-2h-3v-1h-1v1h-3v1h-1v-2h-2v1h-1v1h-1v1h-2v-3h-1v1h-4v-1h-2v1h-1v1h-1v-1h-2v-1h-5v1h-2v-1h-11v1h-1v6h-1v-5h-2v3h-1v-3h-2v1h-1v-1h-4v1h-1v-2h-1v-1h-5v1h-1v-1h-1v1h-1v1h-1v-2h-2v1h-1v1h-1v-1h-1v-1h-11v2h-2v-2h-3v1h-1v2h-1v-1h-1v-1h-1v-1h-1v5h-1v-5h-1v1h-1v-1h-1v1h-2v1h-1v1h-1v-2h-1v1h-1v2h-1v-3h-2v-1h-1v1h-1v-1h-5v1h-2v1h-1v-2h-5v1h-1v-1h-2v2h-1v-2h-2v1h-2v2h-1v-2h-2v1h-1v-1h-2v-1h-2v2h-3v-2h-3v1h-1v-1h-1v2h-1v-1h-2v1h-2v-2h-1v4h-1v1h-1v-5h-1v1h-1v-1h-2v1h-3v2h-3v1h-1v-1h-1v-1h-1v-1h-1v-1h-1v1h-2v-1h-1v2h-1v-1h-2v1h-3v-1h-1v-1h-1v2h-2v-2h-8v1h-1v-1h-3v1h-5v1h-1v-2h-1v1h-1v-1h-5v1h-3v1h-2v1h-1v-1h-1v1h-1v-3h-7v1h-3v-1h-2v1h-1v-1h-1v2h-2v-2h-2v1h-1v1h-1v-1h-2v-1h-3v1h-2v1h-1v-1h-2v1h-1v-1h-1v2h-1v-3h-13v1h-1v-1h-1v1h-1v-1h-3v2h-1v-1h-2v-1h-2v1h-1v-1h-8v1h-3v-1h-2v1h-2v1h-2v-1h-2v-1h-2v1h-1v1h-1v-1h-1v-1h-2v4h-1v-4h-6v3h-1v-3h-2v1h-1v1h-1v1h-1v-3h-6v1h-2v-1h-1v1h-2v-1h-3v1h-2v-1h-3v1h-1v-1h-1v1h-1v-1h-1v1h-1zM277 425h1v-4h1v-1h1v5h2v-1h1v1h3v-1h2v1h1v-11h1v10h1v-1h1v2h9v-1h3v1h2v-1h2v1h2v-1h1v1h2v-1h1v-2h1v2h1v1h7v-1h4v1h7v-1h2v-1h1v1h1v1h7v-1h1v1h4v-1h2v1h3v-2h1v1h1v1h1v-1h3v-4h1v5h2v-1h2v1h1v-1h1v-1h5v1h1v-1h3v2h2v-1h1v-7h1v7h3v-1h1v1h1v-1h1v1h1v1h5v-1h1v-1h1v-1h1v3h3v-1h1v1h2v-2h1v1h1v-1h1v1h1v-1h1v1h1v1h2v-1h1v1h2v-1h2v1h1v-2h1v1h2v1h7v-2h1v2h18v-1h1v1h5v-1h1v-1h1v2h2v-1h1v-1h1v1h2v-1h1v2h1v-1h3v1h5v-1h1v-1h1v2h1v-1h2v1h2v-1h1v1h1v-1h1v-1h1v1h1v1h3v-1h4v-2h1v-8h1v11h9v-18h1v18h2v-1h3v1h2v-1h6v-1h1v-2h2v1h2v1h1v1h1v1h1v-1h1v1h6v-1h2v-1h1v1h3v-1h1v2h1v-2h3v2h6v-12h1v12h4v-1h1v-2h1v3h2v-5h1v5h8v-1h1v1h6v-2h1v2h6v-1h2v1h1v-3h1v-1h1v2h1v2h1v-2h1v2h3v-1h2v1h1v-1h1v1h1v-1h2v-2h1v3h1v-2h2v1h1v1h2v-1h7v-1h2v1h1v-1h1v-5h1v7h9v-1h1v1h1v-1h1v1h1v-1h1v1h2v-3h2v1h1v2h1v-1h2v1h2v-1h1v1h6v-1h1v1h2v-3h1v3h2v-1h1v-1h1v2h2v-1h1v1h1v-1h2v1h6v-2h1v2h7v-1h1v1h5v-1h1v1h1v-1h1v1h1v-2h1v2h3v-1h1v1h3v-2h1v1h2v-1h1v2h2v-1h1v-5h1v6h3v-1h1v-1h1v-3h1v4h2v-1h1v2h1v-1h1v-1h2v-2h1v2h3v-2h1v3h1v1h1v-1h2v-1h1v-3h1v3h1v1h1v-1h1v1h2v-1h1v1h2v1h2v-1h1v1h1v-1h1v1h2v-1h1v-1h3v1h2v-1h3v1h1v1h1v-1h1v-1h2v-1h1v3h1v-2h2v2h3v-2h2v1h1v1h1v-3h1v2h1v-2h1v1h1v1h5v-1h1v1h1v-1h1v2h1v-1h1v-1h1v1h2v-1h1v2h1v-2h1v2h2v-2h1v1h1v-1h1v-3h1v4h1v1h1v-1h1v1h1v-2h1v1h1v1h1v-1h3v1h1v-2h3v1h1v-1h8v1h1v-1h3v1h3v-1h3v2h2v-2h1v1h1v-1h2v-4h1v5h1v1h1v-1h1v1h2v-1h1v-2h1v2h1v1h4v-1h1v1h2v-1h1v-3h1v4h2v-2h1v1h2v-1h1v2h1v-7h1v6h1v-1h1v1h3v-1h1v2h1v-1h1v-5h1v5h3v-1h1v1h4v1h1v-1h1v1h1v-2h1v-5h1v6h1v-1h1v1h1v-1h1v1h1v-1h1v1h1v1h1v-2h2v2h1v-1h1v-5h1v6h1v-2h1v1h6v-1h1v-3h1v5h3v-1h2v-2h1v-1h1v3h2v-3h1v3h1v-1h1v2h3v-1h1v-1h2v-1h1v1h1v1h1v-6h1v6h3v1h1v-1h3v1h5v-1h1v1h6v-1h1v-1h1v2h2v-1h2v1h6v-1h1v-2h1v3h3v-1h2v1h4v-2h2v2h10v-1h1v-2h1v1h1v-1h1v1h1v1h7v1h3v-5h1v4h1v-1h1v1h2v1h2v-1h4v-1h1v1h1v1h6v-5h1v3h1v1h2v1h4v-1h1v1h2v-1h1v-1h2v1h2v1h1v-1h1v1h1v-1h1v1h3v-1h1v1h8v-1h2v1h5v-1h1v1h2v-1h3v1h9v-1h1v1h5v-1h1v1h1v-1h3v1h6v-2h1v2h5v-1h1v1h6v-1h2v-1h1v1h1v-1h1v1h3v1h1v-1h1v1h3v-1h1v-2h1v2h3v1h1v-1h1v1h3v-1h1v-1h1v1h1v-1h1v2h2v-2h2v1h1v-2h1v1h1v2h1v-2h1v2h12v-1h1v-1h2v2h5v-1h2v1h1v-3h1v3h3v-1h2v1h1v-1h1v1h1v-1h1v-1h2v2h1v-1h1v1h8v-2h1v1h1v-5h1v5h1v-1h1v2h1v-1h1v1h1v-2h1v1h1v1h7v-1h1v1h1v-4h1v4h2v-1h1v-1h1v1h1v1h5v-5h1v4h1v1h2v-1h2v1h2v-2h1v1h1v1h3v-1h2v1h1v-1h1v1h2v-4h1v2h1v2h2v-1h1v1h1v-1h1v1h3v-2h1v2h3v-2h2v2h5v-1h1v-1h1v1h3v1h1v-2h3v1h2v1h4v-1h1v-1h1v2h3v-1h2v-3h1v4h1v-2h1v1h2v1h1v-2h1v1h5v1h6v-2h1v2h1v-1h1v1h1v-5h1v5h2v-1h2v1h6v-1h5v-1h1v-1h1v1h1v1h1v1h6v-1h5v1h1v-1h1v1h1v-2h1v2h1v-1h1v-2h1v2h1v1h3v-2h2v1h2v1h2v-5h1v3h1v-1h1v1h1v1h2v-1h1v2h2v-1h2v1h3v-1h1v1h3v-5h1v5h1v-5h1v5h2v-1h4v1h1v-1h1v1h3v-1h2v1h1v-1h1v-1h2v1h2v1h3v-1h1v1h1v-1h1v1h8v-1h2v1h1v-1h1v1h1v-3h1v3h6v6h-1v-1h-5v1h-1v-1h-1v1h-1v1h-1v-1h-1v1h-1v-2h-1v1h-1v-1h-4v1h-4v1h-1v-2h-3v1h-1v-1h-5v1h-3v3h-1v-3h-1v1h-1v-1h-3v-1h-1v1h-4v-1h-7v1h-1v1h-2v-1h-1v-1h-5v1h-1v1h-2v-1h-1v-1h-20v1h-1v1h-1v3h-1v-4h-1v-1h-1v1h-1v-1h-2v1h-1v3h-1v-3h-2v-1h-1v1h-2v-1h-1v1h-2v1h-1v-1h-2v-1h-2v2h-1v-1h-3v-1h-1v1h-1v-1h-10v1h-4v-1h-2v2h-1v-1h-4v1h-1v-1h-2v-1h-4v1h-1v-1h-4v1h-1v-1h-4v1h-1v2h-2v4h-1v-4h-1v-3h-1v1h-3v1h-1v-2h-1v1h-3v-1h-4v1h-3v2h-1v-2h-1v-1h-3v1h-1v-1h-1v1h-1v-1h-4v1h-2v-1h-1v1h-3v1h-2v-1h-1v-1h-2v8h-1v-8h-1v1h-2v-1h-2v1h-2v-1h-4v1h-1v-1h-1v1h-2v1h-1v-1h-4v-1h-1v1h-1v-1h-5v5h-1v-5h-1v2h-4v-1h-1v1h-2v-1h-1v-1h-1v1h-2v1h-1v-1h-1v1h-1v-2h-4v1h-1v-1h-7v1h-2v1h-1v-1h-2v-1h-3v1h-3v-1h-5v1h-1v-1h-1v1h-2v-1h-2v1h-2v3h-1v-4h-1v2h-1v-1h-3v2h-1v-1h-1v-2h-1v1h-2v1h-1v-1h-1v1h-1v-1h-1v-1h-1v1h-3v-1h-1v2h-1v-1h-2v-1h-3v1h-1v-1h-1v3h-1v-3h-9v1h-1v1h-1v-1h-2v-1h-1v1h-2v-1h-1v1h-2v-1h-1v1h-1v-1h-1v1h-3v-1h-1v1h-1v-1h-2v1h-1v-1h-1v1h-2v-1h-3v1h-1v-1h-4v1h-1v-1h-5v1h-2v2h-1v-1h-1v-1h-2v-1h-7v1h-1v-1h-3v2h-3v-2h-3v1h-6v-1h-1v2h-1v-1h-2v2h-1v-2h-2v-1h-1v1h-1v-1h-3v1h-1v1h-1v1h-3v-1h-1v-2h-2v1h-1v1h-1v-2h-2v1h-1v-1h-2v1h-1v-1h-1v5h-1v-4h-3v1h-2v-2h-5v1h-1v-1h-3v1h-1v-1h-1v4h-1v-4h-1v3h-2v-2h-1v-1h-2v1h-1v-1h-5v1h-4v-1h-1v1h-1v-1h-3v2h-1v-1h-1v-1h-3v1h-2v-1h-2v1h-1v-1h-3v1h-1v-1h-3v1h-1v-1h-4v1h-3v-1h-1v1h-1v-1h-3v1h-1v5h-1v-6h-1v1h-1v-1h-1v1h-3v1h-1v-2h-1v2h-2v-1h-1v1h-1v-2h-2v2h-1v-2h-1v2h-5v4h-1v-5h-1v1h-1v3h-1v-2h-1v-1h-1v-2h-2v2h-1v-1h-1v4h-1v-5h-2v2h-1v-1h-2v-1h-1v1h-2v1h-1v-1h-1v3h-1v-2h-1v3h-1v-5h-1v1h-2v-1h-2v2h-1v-1h-1v1h-1v-1h-1v1h-1v-1h-1v1h-1v3h-1v-4h-1v-1h-2v2h-1v-1h-1v-1h-1v2h-1v-2h-1v4h-1v-2h-1v-2h-2v1h-1v-1h-1v2h-1v1h-1v-2h-4v-1h-5v1h-1v-1h-6v2h-1v-1h-1v1h-1v5h-1v-5h-1v4h-1v-6h-1v1h-1v1h-2v-1h-1v1h-2v-1h-2v1h-5v-2h-1v1h-1v1h-2v-1h-1v2h-1v-2h-3v1h-1v-2h-1v1h-1v1h-1v-1h-1v-1h-3v1h-2v7h-1v-8h-1v2h-1v-2h-1v2h-1v-1h-1v-1h-1v2h-1v-2h-4v2h-1v1h-1v4h-1v-6h-1v6h-1v-6h-1v1h-1v-2h-1v2h-1v-1h-1v1h-2v-2h-1v1h-2v4h-1v-4h-2v5h-1v-6h-1v1h-1v1h-1v-1h-1v-1h-1v2h-2v-1h-1v1h-1v-1h-1v-1h-1v2h-1v-1h-1v1h-2v-1h-1v1h-1v-1h-1v3h-1v-2h-1v-1h-2v1h-1v-1h-1v-1h-2v2h-1v-1h-1v-1h-2v2h-1v-1h-1v-1h-1v2h-1v-1h-3v7h-1v-5h-1v-1h-3v1h-1v6h-1v-6h-1v-2h-1v2h-1v1h-1v-2h-1v2h-3v1h-1v-2h-2v6h-1v-7h-1v-2h-1v2h-3v5h-1v-5h-2v-2h-1v1h-1v1h-1v-1h-2v-1h-3v2h-1v-2h-5v1h-1v-1h-3v1h-2v-1h-1v1h-2v-1h-5v1h-1v-1h-2v1h-1v1h-1v-1h-1v-1h-1v1h-1v-1h-2v1h-1v1h-2v-2h-1v1h-2v-1h-3v1h-1v-1h-3v3h-1v-3h-4v1h-2v1h-1v-2h-3v1h-1v-1h-5v1h-2v-1h-2v2h-1v-1h-1v-1h-1v1h-1v-1h-5v1h-1v5h-1v-4h-1v-1h-1v-1h-1v1h-1v-1h-1v1h-2v3h-1v-3h-1v-1h-5v1h-1v-1h-9v1h-1v1h-1v-1h-2v-1h-4v1h-2v-1h-3v1h-1v-1h-7v1h-1v-1h-1v2h-1v-1h-3v-1h-2v1h-2v-1h-2v1h-1v-1h-3v1h-2v1h-1v-1h-1v-1h-2v13h-1v-13h-2v1h-1v-1h-10v3h-1v-1h-1v-1h-1v-1h-4v1h-1v-1h-2v2h-1v-2h-1v2h-1v2h-1v-3h-1v3h-1v3h-1v-4h-1v-1h-1v-1h-1v-1h-3v1h-1v1h-1v-1h-1v-1h-2v1h-1v1h-1v-1h-2v34h-1v-34h-1v-1h-1v2h-2v-1h-1v-1h-2v1h-1v-1h-1v9h-1v-8h-2v-1h-2v2h-1v-2h-2v1h-1v-1h-3v1h-1v1h-1v-2h-6v1h-1v-1h-1v2h-1v-2h-2v1h-1v-1h-1v1h-2v-1h-1v1h-1v1h-2v-1h-1v-1h-2v2h-1v-2h-1v1h-2v-1h-3v1h-4v-1h-1v1h-2v-1h-2v1h-1v-1h-17v4h-1v-4h-1v1h-2v-1h-2v1h-2v-1h-5v5h-1v-4h-1v1h-1v-1h-2v2h-1v-3h-2v1h-1v1h-1v-2h-1v1h-1v-1h-7v1h-1v1h-1v-1h-1v-1h-4v5h-1v-4h-1v-1h-2v2h-1v-1h-3v1h-1v1h-1v-3h-7v3h-1v-1h-1v-2h-1v1h-2v4h-1v-4h-1v1h-1v-2h-4v2h-1v-2h-1v2h-1v-1h-2v-1h-7v1h-1v-1h-2v2h-1v-2h-1v1h-3v-1h-3v1h-2v-1h-1v1h-1v1h-1v-2h-2v1h-1v1h-1v-2h-9v1h-1v-1h-10v1h-4v-1h-2v1h-1v4h-1v-5h-1v1h-1v11h-1v-7h-1v-4h-1v-1h-2v2h-2v-1h-2v-1h-4zM277 455h1v-5h1v4h1v1h2v-1h1v1h4v-1h1v1h12v-2h1v1h5v1h1v-1h2v1h1v-1h1v1h2v-1h1v-1h1v1h2v-2h2v2h2v1h7v-2h1v2h1v-1h3v1h3v-17h1v16h1v1h3v-1h2v1h3v-1h5v1h1v-1h1v1h1v-1h1v-1h1v2h1v-1h1v1h1v-1h2v1h1v-1h3v1h1v-1h1v1h3v-1h1v1h1v-2h1v1h2v1h2v-1h3v1h4v-2h1v-1h1v-2h1v5h1v-1h2v1h1v-1h1v1h1v-1h1v1h4v-1h2v1h2v-1h2v-1h1v1h1v1h11v-1h1v1h2v-1h1v-1h1v1h1v1h1v-1h1v1h1v-1h5v-1h2v1h2v-1h3v1h1v1h4v-3h1v2h2v1h4v-1h2v1h8v-1h3v1h1v-1h2v1h3v-1h5v1h2v-1h1v-1h1v2h5v-1h2v-1h2v2h2v-1h1v1h1v-1h3v-1h1v1h1v-1h2v1h1v1h3v-1h1v1h1v-1h1v1h5v-2h1v-1h1v3h1v-1h1v1h6v-1h1v1h3v-2h1v1h1v-1h1v1h1v-2h1v-1h1v1h1v1h1v1h1v-1h1v2h7v-1h2v1h2v-1h2v1h2v-1h3v1h7v-2h2v1h2v1h1v-1h2v1h1v-1h1v1h1v-1h2v1h1v-6h1v6h4v-1h2v-1h1v1h1v1h2v-1h1v1h3v-1h1v-1h1v1h1v1h6v-2h1v-1h1v2h2v1h4v-2h1v1h2v1h20v-5h1v4h2v1h1v-1h1v1h1v-1h2v-1h1v1h2v1h2v-2h1v1h1v1h1v-7h1v7h5v-1h1v1h6v-1h2v-1h1v2h1v-1h2v-1h1v1h2v1h2v-1h3v1h2v-2h2v1h1v1h1v-1h2v-1h1v1h1v-3h1v4h4v-1h1v1h2v-1h3v-1h1v2h3v-1h1v1h7v-1h2v1h4v-1h1v-1h1v1h1v1h3v-3h1v3h1v-1h1v1h4v-1h3v1h1v-1h1v1h2v-2h1v1h1v-2h1v1h2v1h1v1h1v-1h1v-2h1v1h1v1h1v-2h1v2h1v1h3v-1h2v1h1v-1h1v1h2v-1h1v1h1v-3h1v3h3v-1h1v1h3v-1h2v1h2v-1h1v1h2v-1h6v1h7v-1h6v-1h1v1h3v1h2v-2h4v1h2v1h3v-1h1v-1h1v2h2v-1h2v1h3v-1h1v1h2v-1h4v1h1v-1h1v-1h1v2h8v-1h1v1h3v-1h1v1h2v-1h1v-1h2v1h2v1h4v-1h2v-1h1v2h2v-1h4v-1h1v1h1v1h1v-1h2v1h8v-1h2v1h4v-1h3v1h9v-1h2v1h1v-1h1v-1h2v1h1v1h7v-3h1v2h1v1h1v-3h1v3h3v-1h2v-1h2v-4h1v4h1v2h1v-1h2v1h2v-1h1v1h2v-1h2v-1h1v1h2v1h11v-2h3v1h2v1h4v-2h1v1h1v1h1v-1h1v-4h1v4h1v1h3v-1h1v1h2v-1h2v-1h1v1h3v1h3v-2h1v-1h1v1h1v2h1v-1h1v1h2v-2h1v-1h1v3h4v-2h1v1h1v1h8v-1h1v-4h1v4h1v1h1v-1h1v1h7v-2h2v1h1v1h3v-1h1v1h3v-1h1v1h3v-1h2v1h2v-1h1v-2h1v2h2v1h1v-1h3v-1h1v1h1v1h1v-1h1v1h1v-1h1v1h3v-2h1v2h1v-4h1v4h2v-1h1v1h5v-1h1v-1h3v2h4v-1h2v1h3v-2h1v2h2v-1h1v1h2v-2h1v1h1v1h4v-1h1v1h2v-1h1v1h1v-2h3v1h2v1h3v-1h3v1h4v-1h1v-1h1v2h2v-1h1v1h2v-1h1v1h8v-1h1v1h1v-1h1v1h2v-5h1v4h1v1h17v-2h1v2h1v-1h2v-1h1v2h2v-1h2v-1h1v1h3v-1h1v1h2v1h1v-1h2v-1h3v2h1v-3h1v2h4v1h1v-3h1v3h8v-1h1v-1h1v1h1v1h6v-4h1v1h1v3h8v-1h3v1h1v-1h1v1h1v-1h1v-1h1v2h2v-1h1v-1h1v2h1v-1h5v-1h1v-1h1v1h2v2h1v-1h1v1h5v-1h2v1h2v-1h1v1h1v-1h1v1h1v-1h1v1h2v-1h1v-1h1v1h2v1h1v-2h2v2h6v-1h3v1h2v-2h2v1h1v1h6v-1h2v1h15v-2h1v2h1v-3h1v2h2v1h2v-2h2v1h1v1h1v-1h2v1h2v-1h1v1h1v-1h4v1h2v-2h1v1h2v1h1v-1h1v1h7v-1h1v-2h1v1h1v2h4v-1h4v-2h1v2h5v1h6v-1h1v1h7v-1h7v-1h1v1h3v1h1v-1h1v-1h1v-1h1v1h1v-2h2v4h4v-1h1v1h1v-1h3v1h1v-1h3v1h2v-2h1v2h3v-1h2v-1h2v1h1v1h1v-2h1v1h1v1h8v-1h2v-2h1v2h1v-1h1v1h1v1h4v6h-1v-1h-2v5h-1v-5h-5v2h-1v-2h-1v2h-1v-1h-1v-1h-6v1h-2v-1h-7v1h-1v1h-1v-1h-1v-1h-12v1h-1v-1h-3v1h-1v-1h-2v1h-1v-1h-2v2h-1v-1h-3v-1h-2v1h-2v-1h-2v4h-1v-4h-4v4h-1v-4h-1v1h-2v-1h-13v1h-1v-1h-4v1h-2v-1h-2v2h-1v-1h-1v1h-2v2h-1v-4h-14v1h-2v-1h-3v1h-1v4h-1v-5h-7v1h-3v-1h-1v1h-1v-1h-3v5h-1v-5h-5v1h-1v-1h-1v1h-1v-1h-2v1h-1v-1h-2v2h-2v-1h-2v-1h-7v1h-2v-1h-5v1h-1v-1h-1v1h-1v-1h-2v1h-1v-1h-3v2h-2v-1h-2v1h-2v-2h-2v1h-2v3h-1v-3h-2v-1h-2v1h-2v1h-1v-2h-1v2h-1v-2h-1v2h-1v-1h-1v-1h-3v2h-1v-1h-3v-1h-2v1h-1v-1h-3v1h-2v-1h-2v2h-2v-2h-1v1h-1v-1h-1v1h-1v3h-1v-4h-2v1h-1v-1h-4v1h-3v-1h-1v2h-2v-1h-1v1h-1v-1h-2v1h-1v-2h-1v1h-1v-1h-1v1h-1v1h-2v-1h-1v-1h-2v2h-1v-1h-2v-1h-1v1h-1v-1h-1v1h-3v-1h-4v1h-2v-1h-3v1h-1v1h-1v-1h-4v-1h-3v1h-1v1h-1v-1h-1v-1h-4v2h-1v-2h-1v1h-1v-1h-5v1h-1v-1h-1v2h-2v-1h-1v-1h-3v1h-2v-1h-2v3h-1v-3h-2v1h-4v-1h-6v1h-2v1h-2v-2h-1v2h-1v-1h-1v-1h-2v2h-1v-1h-1v-1h-4v1h-1v-1h-1v3h-1v-3h-4v1h-1v-1h-2v1h-1v-1h-3v1h-1v-1h-3v1h-1v-1h-7v1h-2v4h-1v-5h-5v1h-1v-1h-4v1h-2v-1h-2v1h-1v1h-1v-2h-1v1h-1v-1h-2v1h-2v1h-1v1h-1v-3h-1v4h-1v-4h-1v4h-1v-4h-8v2h-1v-1h-1v-1h-1v1h-2v-1h-1v1h-1v1h-1v-2h-2v1h-1v1h-1v-1h-1v-1h-2v2h-1v-2h-6v1h-2v-1h-2v2h-1v-1h-6v2h-1v-2h-4v1h-1v-2h-2v2h-3v-1h-2v1h-1v-1h-1v-1h-3v4h-1v-4h-1v1h-2v9h-1v-9h-1v-1h-1v2h-1v-2h-1v3h-1v-1h-1v-2h-1v1h-3v-1h-9v2h-1v-2h-3v1h-3v-1h-3v1h-1v-1h-2v1h-1v-1h-3v1h-1v-1h-1v10h-1v-10h-1v1h-1v-1h-1v1h-1v-1h-2v1h-1v-1h-2v1h-1v-1h-1v1h-2v1h-1v-1h-1v-1h-8v1h-3v-1h-2v1h-1v-1h-2v1h-1v1h-1v-1h-1v-1h-1v1h-3v-1h-7v1h-1v-1h-2v1h-1v1h-1v-2h-2v1h-2v-1h-3v3h-1v-2h-2v-1h-8v1h-2v1h-1v-2h-2v1h-1v1h-1v-2h-8v1h-2v-1h-1v1h-3v3h-1v-2h-2v-1h-1v-1h-1v2h-1v-1h-2v1h-1v-1h-2v1h-1v-1h-1v-1h-3v2h-1v-2h-2v1h-2v-1h-1v1h-2v-1h-1v1h-1v1h-2v2h-1v-3h-1v1h-1v-1h-1v-1h-2v1h-1v1h-2v-2h-2v1h-3v-1h-7v1h-1v-1h-8v1h-1v-1h-2v1h-1v-1h-5v4h-1v-4h-1v1h-2v-1h-12v1h-1v4h-1v-5h-1v2h-3v1h-1v3h-1v-5h-2v-1h-2v1h-1v-1h-1v1h-2v-1h-2v1h-1v-1h-1v1h-1v1h-1v-1h-1v-1h-1v1h-1v-1h-3v1h-1v-1h-3v2h-1v-2h-1v1h-1v1h-4v-2h-1v1h-1v-1h-1v1h-2v1h-1v-2h-1v1h-2v-1h-2v2h-1v-2h-1v1h-1v1h-3v-2h-1v1h-1v-1h-5v1h-1v1h-3v-1h-2v-1h-1v1h-1v-1h-7v1h-1v-1h-4v1h-4v-1h-5v1h-1v-1h-1v6h-1v-6h-8v1h-2v4h-1v-5h-3v1h-3v1h-1v-2h-1v4h-1v-3h-2v2h-1v-2h-2v-1h-7v2h-1v-1h-1v-1h-1v1h-1v1h-1v-1h-1v-1h-6v1h-1v1h-1v-1h-1v-1h-3v1h-2v1h-1v-2h-3v1h-1v-1h-4v1h-1v-1h-5v2h-1v-1h-2v8h-1v-9h-4v1h-1v1h-1v-1h-3v-1h-4v1h-2v-1h-1v1h-1v1h-1v-2h-4v1h-1v-1h-4v2h-1v-1h-2v1h-1v1h-1v-3h-6v1h-1v1h-1v1h-1v-2h-1v2h-1v-1h-2v-1h-3v-1h-4v1h-2v1h-1v-2h-1v1h-6v-1h-1v1h-1v1h-1v-2h-2v1h-3v-1h-4v2h-1v-1h-1v-1h-3v1h-2v-1h-4v2h-1v-2h-5v1h-1v-1h-4v1h-4v-1h-3v1h-2v1h-3v-1h-2v-1h-2v1h-3v1h-1v-1h-1v-1h-1v1h-3v-1h-1v1h-1v-1h-1v1h-1v-1h-1v1h-2v-1h-1v1h-2v-1h-5v1h-1v2h-2v1h-1v1h-2v-2h-2v-2h-1v-1h-5v1h-2v1h-1v-1h-1v-1h-2v1h-2v-1h-5v1h-1v-1h-2v2h-1v-1h-2v-1h-3v1h-4v-1h-2v1h-1v-1h-4v1h-1v-1h-3v1h-2v-1h-2v1h-2v1h-2v-2h-1v1h-2v1h-2v-1h-1v-1h-5v2h-3v-1h-2v-1h-4v1h-3v-1h-3v1h-1v-1h-1v1h-2v-1h-1v2h-1v-1h-1v1h-1v1h-1v-3h-5v17h-1v-16h-2v1h-1v-2h-1v1h-2v-1h-4v1h-1v-1h-1v1h-3v1h-1v1h-1v9h-1v-10h-2v-1h-2v-1h-1v1h-1v-1h-1v1h-1v-1h-2v1h-1v-1h-1v1h-2v-1h-2v1h-2v-1h-2v2h-2v-1h-2v1h-1v-2h-11v1h-1v-1h-1v1h-1v-1h-2zM277 485h1v1h1v-1h1v1h4v-1h1v-1h1v1h1v1h4v-1h2v1h3v-1h1v1h1v-1h1v1h4v-1h2v1h1v-1h1v1h2v-1h1v-1h1v2h1v-1h1v1h7v-1h1v1h1v-1h1v-1h1v1h1v1h2v-1h1v1h4v-1h1v1h2v-1h2v1h11v-1h1v1h9v-1h2v1h3v-2h3v2h3v-1h1v1h2v-1h2v1h4v-1h1v-1h1v1h1v1h1v-1h1v-1h1v2h1v-1h2v-1h1v1h2v1h1v-1h2v-1h4v1h2v1h1v-1h2v1h1v-2h1v1h3v-1h1v1h2v1h7v-1h1v-1h1v2h1v-1h1v-1h1v1h2v1h3v-1h2v1h11v-1h4v1h1v-1h2v1h1v-1h1v1h1v-1h1v-1h1v-1h1v2h2v1h1v-1h1v1h1v-1h9v1h3v-1h1v-1h1v2h2v-1h2v1h1v-1h2v1h1v-1h3v1h3v-1h1v1h2v-2h1v2h1v-1h4v1h6v-1h3v1h7v-1h2v1h4v-1h1v1h1v-1h2v-1h1v-1h1v-2h1v3h1v-22h1v24h3v-1h1v1h1v-3h1v2h2v-8h1v9h1v-1h1v1h1v-1h1v-6h1v6h2v-7h1v8h1v-1h1v1h6v-2h1v1h2v-1h3v2h1v-2h1v1h5v1h4v-2h2v2h2v-1h1v-1h1v-1h1v2h1v1h2v-1h3v-1h1v1h1v-12h1v12h2v-1h1v1h1v1h1v-1h1v1h2v-1h1v1h1v-1h1v1h7v-1h1v1h1v-5h1v5h1v-2h1v2h3v-1h1v1h2v-1h1v1h1v-1h1v1h1v-1h1v1h3v-1h4v1h1v-1h1v1h3v-1h1v-1h1v2h3v-2h1v2h1v-1h2v1h1v-1h1v1h6v-1h2v-1h2v1h1v-2h1v1h2v-2h1v4h5v-1h2v1h1v-1h2v1h2v-1h1v1h3v-24h1v23h1v1h1v-1h1v1h5v-1h1v1h4v-2h1v2h2v-1h1v1h4v-1h1v1h1v-1h3v-1h1v1h3v1h1v-3h1v3h1v-1h1v-1h3v-2h1v3h1v1h1v-2h2v1h1v-1h1v2h1v-1h9v1h2v-2h1v2h1v-1h1v1h1v-2h2v2h2v-1h3v1h1v-1h2v-1h1v2h3v-1h1v1h3v-1h1v1h1v-1h1v1h2v-1h1v1h3v-1h3v1h11v-2h1v1h1v1h7v-4h1v3h1v1h4v-1h1v1h2v-1h1v1h1v-2h1v2h1v-1h1v1h1v-1h1v1h1v-1h1v1h1v-8h2v7h2v1h1v-1h2v1h4v-1h5v1h2v-4h1v4h2v-1h1v1h4v-1h2v1h1v-1h1v1h3v-2h1v2h2v-1h1v1h2v-1h1v1h5v-1h3v1h1v-2h1v1h2v1h3v-1h1v-1h1v2h10v-1h3v1h1v-1h3v-1h1v2h1v-1h4v1h6v-4h1v3h3v1h1v-3h1v3h1v-1h1v-1h2v2h3v-1h1v1h3v-1h3v1h1v-1h1v1h2v-1h1v1h2v-1h1v1h4v-1h2v1h3v-1h1v1h7v-1h1v1h3v-1h1v1h3v-2h2v-3h1v5h1v-2h1v2h1v-1h2v1h4v-2h1v1h3v-1h1v2h2v-1h1v1h12v-1h4v1h1v-1h2v1h4v-1h4v-1h1v2h1v-1h4v1h5v-1h1v1h1v-1h1v-1h1v1h1v1h4v-1h3v1h3v-15h1v15h2v-1h1v1h2v-1h2v1h1v-1h1v1h3v-1h1v1h6v-1h2v1h1v-1h2v-1h1v1h5v1h1v-1h3v1h1v-2h1v2h1v-1h3v1h1v-1h1v1h1v-1h1v1h4v-1h2v1h2v-2h1v2h2v-2h1v2h2v-3h2v1h1v2h2v-1h1v-1h1v2h1v-1h1v1h2v-1h2v1h2v-1h2v-1h1v-1h1v3h8v-1h3v1h5v-1h6v-1h1v-2h1v1h1v-1h1v4h1v-2h2v1h2v1h1v-1h1v1h4v-1h1v1h1v-1h2v1h1v-2h1v2h1v-2h1v1h2v1h2v-1h2v1h2v-3h1v3h1v-1h1v1h1v-1h3v1h1v-1h1v-1h1v2h1v-4h1v4h3v-2h1v1h2v1h1v-1h2v-1h1v2h1v-1h1v-1h2v1h2v1h1v-3h1v2h2v1h2v-1h1v1h3v-1h2v1h2v-1h2v1h2v-1h1v1h1v-1h2v1h3v-1h2v1h5v-1h1v1h4v-1h1v1h1v-1h1v-1h1v2h3v-2h1v2h4v-1h2v1h5v-1h2v1h2v-1h1v-2h1v3h2v-1h1v1h6v-1h1v-1h1v2h2v-1h1v1h4v-5h1v5h2v-2h1v1h1v-1h1v2h8v-1h1v1h2v-2h2v1h1v-1h1v2h2v-1h1v1h3v-1h1v1h2v-1h1v1h1v-1h2v1h16v-1h1v1h4v-1h1v1h2v-1h1v1h2v-1h3v1h3v-1h1v1h2v-1h4v1h1v-1h2v-1h2v1h1v1h1v-1h1v1h8v-1h2v-1h1v1h1v1h1v-2h2v1h1v-1h1v2h2v-4h1v3h1v-1h1v1h1v1h1v-1h1v1h1v-1h2v1h2v-1h1v1h8v-2h1v1h1v-1h1v2h1v-1h4v-1h1v1h5v1h5v-3h1v3h1v-1h3v1h4v6h-1v-1h-1v2h-1v-2h-2v1h-1v-1h-1v3h-1v-3h-7v1h-1v3h-1v-2h-1v-2h-1v1h-1v-1h-5v1h-5v-1h-2v1h-1v-1h-2v1h-2v-1h-2v1h-1v1h-2v-2h-2v1h-1v-1h-1v1h-2v-1h-1v1h-3v-1h-3v1h-2v-1h-1v2h-1v-2h-10v2h-1v-1h-1v-1h-9v1h-1v3h-1v-3h-1v-1h-6v1h-4v-1h-1v1h-4v4h-1v-5h-1v1h-5v-1h-4v1h-5v2h-1v-2h-2v-1h-2v4h-1v-3h-1v-1h-1v5h-1v-5h-7v1h-1v-1h-1v1h-3v-1h-7v1h-2v-1h-1v1h-1v-1h-2v2h-1v-2h-2v1h-6v-1h-1v1h-1v-1h-7v1h-2v1h-1v-2h-1v2h-2v-1h-1v1h-1v-1h-2v-1h-3v1h-1v-1h-5v3h-1v-2h-3v-1h-1v1h-1v-1h-1v1h-1v-1h-3v1h-1v-1h-2v3h-1v-3h-1v1h-1v1h-1v-2h-6v1h-1v-1h-3v2h-1v-1h-1v-1h-3v1h-1v-1h-6v1h-2v1h-1v-1h-2v-1h-3v1h-2v5h-1v-6h-1v1h-1v-1h-2v2h-3v-1h-1v1h-1v-1h-2v-1h-1v1h-1v-1h-6v1h-1v-1h-4v1h-1v-1h-2v1h-1v-1h-4v1h-1v1h-1v-2h-3v1h-1v1h-1v-2h-2v1h-2v-1h-1v1h-2v1h-1v1h-1v-2h-1v3h-1v-1h-1v-2h-2v-1h-1v1h-5v-1h-2v1h-1v-1h-4v1h-2v-1h-3v1h-1v-1h-1v1h-1v-1h-2v1h-1v-1h-4v1h-1v-1h-2v2h-2v-1h-1v1h-1v1h-1v-2h-1v-1h-10v2h-1v-2h-2v1h-3v-1h-2v5h-1v-4h-3v1h-1v-2h-10v1h-1v-1h-1v1h-1v3h-1v-3h-1v-1h-2v1h-1v-1h-4v1h-2v-1h-13v1h-1v13h-1v-14h-9v1h-1v-1h-2v1h-1v2h-1v-2h-3v1h-2v1h-1v-1h-1v1h-1v-3h-5v1h-3v-1h-4v1h-2v-1h-4v1h-1v1h-1v-1h-1v-1h-9v2h-1v-2h-2v3h-1v-3h-1v1h-2v-1h-7v1h-4v5h-1v-6h-1v2h-1v-1h-1v-1h-1v1h-4v-1h-1v1h-1v1h-1v-2h-1v1h-1v-1h-1v1h-1v1h-2v-2h-6v1h-1v-1h-1v1h-1v1h-1v-2h-8v1h-1v-1h-14v1h-1v1h-1v-1h-2v1h-2v-2h-7v1h-2v-1h-1v1h-1v-1h-1v1h-1v-1h-1v1h-1v-1h-5v2h-1v-2h-1v1h-3v-1h-9v1h-2v-1h-3v1h-2v-1h-17v2h-1v-1h-1v-1h-1v1h-2v-1h-1v1h-1v1h-1v-2h-3v1h-1v1h-1v-2h-2v1h-1v-1h-2v1h-3v2h-1v-2h-2v-1h-1v9h-2v-9h-3v2h-1v-2h-4v1h-1v-1h-5v1h-1v-1h-3v1h-2v1h-1v-1h-1v-1h-2v1h-1v-1h-20v1h-2v-1h-2v1h-1v1h-1v-1h-1v-1h-3v1h-2v-1h-4v1h-1v-1h-1v2h-1v-1h-2v-1h-4v1h-1v-1h-2v1h-1v-1h-7v1h-1v-1h-5v1h-2v-1h-1v1h-1v1h-1v-1h-1v1h-2v-1h-3v-1h-1v1h-1v4h-1v-5h-8v1h-2v-1h-2v1h-5v1h-1v-1h-1v-1h-3v1h-3v1h-1v1h-1v-3h-1v23h-1v-23h-1v1h-2v-1h-4v1h-2v1h-2v-1h-1v2h-1v-3h-2v1h-3v-1h-1v1h-4v-1h-6v1h-1v-1h-3v5h-1v-5h-1v1h-4v1h-1v-1h-7v-1h-1v1h-3v-1h-1v1h-2v-1h-3v1h-3v-1h-10v1h-6v-1h-2v2h-2v-2h-1v2h-2v-2h-5v10h-1v-7h-2v-3h-5v1h-2v1h-1v-1h-4v-1h-1v1h-2v-1h-2v1h-2v-1h-1v1h-1v1h-1v1h-1v1h-1v-1h-1v2h-1v-1h-1v1h-1v-5h-1v2h-1v-1h-2v-1h-1v1h-1v-1h-4v5h-1v-4h-1v-1h-1v6h-1v-5h-3v-1h-1v7h-1v-7h-7v3h-1v30h-1v-33h-1v1h-1v-1h-1v1h-4v1h-1v-1h-1v-1h-3v1h-1v1h-1v-1h-1v1h-1v-2h-8v1h-2v-1h-9v1h-1v1h-1v-2h-6v1h-2v-1h-7v1h-1v-1h-1v1h-2v1h-2v1h-1v-2h-1v1h-1v-2h-6v4h-1v-4h-1v1h-1v2h-1v-1h-3v-1h-2v1h-1v-1h-1v-1h-1v1h-3v1h-1v-2h-7v1h-1v-1h-10v1h-1v1h-1v-1h-2v1h-1v-2h-1v1h-1v-1h-1v1h-1v-1h-4v1h-1v-1h-1v1h-2v1h-1v-1h-2v-1h-2v1h-1v-1h-3v2h-2v-1h-1v1h-1v-2h-1v2h-1v-1h-1v-1h-3v1h-2v-1h-2v1h-1v-1h-3v1h-1v-1h-3v1h-2v-1h-2v1h-1v-1h-1v1h-1v-1h-5v1h-1v1h-1v-1h-1v-1h-14v2h-2v1h-1v-3h-2v2h-1v-2h-9v1h-3v-1h-2v1h-3v-1h-1v1h-2v-1h-4v1h-1v-1h-1v1h-3v-1h-8v1h-4v-1h-2v4h-1v-3h-1v1h-2v-1h-1v-1h-5v1h-1v-1h-3v1h-1v-1h-3v1h-1v-1h-2zM277 515h1v-1h2v-1h1v2h2v1h1v-1h2v1h4v-1h1v-1h1v1h1v-1h1v2h2v-2h1v2h1v-1h3v1h2v-1h1v1h3v-3h1v3h15v-1h1v-1h1v1h1v1h2v-1h2v1h1v-1h3v1h3v-3h1v3h1v-1h1v1h4v-2h1v2h8v-1h2v1h2v-1h1v1h1v-1h3v1h2v-1h3v-1h2v2h1v-2h3v2h1v-1h1v-1h1v2h7v-1h1v1h4v-1h1v1h1v-1h1v1h2v-1h1v1h2v-1h1v1h7v-2h1v1h1v-1h2v1h1v1h4v-1h2v-1h1v1h1v1h2v-2h1v2h1v-1h3v-1h2v-1h1v2h2v-1h2v1h2v1h2v-1h1v1h4v-2h3v-2h1v2h1v1h2v-1h1v1h2v1h2v-1h1v1h1v-1h2v1h4v-1h1v-1h1v2h8v-1h1v1h1v-1h1v1h2v-2h2v1h1v1h2v-1h1v1h3v-1h3v-1h1v2h6v-1h3v-1h1v-1h1v1h2v1h2v1h1v-1h1v-3h1v3h1v1h1v-1h1v1h3v-1h1v1h2v-1h2v-1h1v-1h1v1h1v2h3v-2h1v-1h1v1h1v1h1v1h1v-1h4v1h1v-1h3v-1h1v1h1v1h1v-1h1v-1h1v1h1v1h1v-1h2v-1h1v1h2v1h1v-1h1v1h2v-1h1v1h2v-1h2v1h2v-1h1v1h2v-1h2v1h1v-1h1v1h5v-1h3v1h7v-1h2v1h3v-1h3v1h2v-1h1v-1h1v1h2v1h3v-2h1v1h1v1h2v-1h2v-1h3v1h1v1h2v-1h1v-1h1v2h5v-2h2v2h5v-1h5v1h1v-1h3v1h1v-1h2v-1h2v2h1v-1h1v-1h1v1h1v1h5v-1h1v1h4v-1h1v-1h2v1h1v1h4v-1h1v-10h1v10h1v-1h2v2h1v-1h3v1h2v-1h1v-1h1v1h2v1h1v-1h1v1h2v-1h1v1h1v-1h1v1h2v-1h1v-1h1v1h1v-2h1v3h9v-1h6v1h3v-1h2v1h5v-1h1v1h6v-1h4v1h4v-4h1v4h2v-1h3v1h1v-1h2v1h1v-1h2v1h7v-1h1v1h1v-1h1v-1h2v-1h1v-2h1v3h2v1h2v1h2v-1h3v1h2v-1h1v1h3v-1h3v-2h1v1h1v1h1v-1h1v1h1v1h8v-1h1v1h1v-1h1v1h2v-1h2v-4h1v5h1v-1h1v1h1v-1h1v-1h1v1h1v-1h1v2h6v-1h1v1h1v-1h1v-2h1v1h3v-1h1v2h2v-1h1v1h1v1h2v-1h1v-1h1v2h6v-1h3v1h6v-1h1v1h1v-1h2v1h3v-1h3v1h4v-1h2v1h7v-1h1v-1h1v2h5v-1h1v-1h1v1h1v1h2v-2h1v2h6v-1h2v1h5v-2h1v1h1v1h11v-1h2v1h1v-1h2v-1h1v2h2v-1h1v-1h1v2h4v-1h1v-1h1v2h1v-1h4v1h2v-1h1v-2h1v1h1v1h1v-1h1v2h1v-1h1v1h2v-1h1v-2h1v2h1v1h12v-1h1v1h3v-1h1v1h1v-1h2v1h12v-3h1v3h3v-1h1v1h1v-1h1v1h4v-3h1v2h1v1h3v-1h2v-1h1v2h3v-3h1v3h7v-1h1v1h2v-4h1v3h1v1h7v-1h4v1h9v-1h5v-1h1v1h1v-1h1v2h1v-1h3v1h5v-1h1v1h1v-1h3v1h3v-1h1v-1h1v1h2v1h3v-1h5v1h3v-1h1v-1h1v1h1v1h4v-1h3v1h1v-2h1v1h1v-1h2v1h3v1h7v-2h1v2h1v-1h5v1h1v-1h1v1h2v-1h1v1h3v-2h2v1h1v1h2v-1h1v1h1v-1h1v-1h1v1h3v1h2v-2h2v2h2v-1h1v-3h1v4h2v-1h1v1h1v-1h1v1h6v-2h2v2h2v-1h1v-1h1v1h2v1h2v-1h1v1h6v-1h2v1h13v-1h1v-2h1v2h1v-3h1v4h4v-1h1v1h2v-1h1v-4h1v5h3v-1h1v1h3v-1h1v1h6v-1h3v-1h1v-1h1v3h2v-1h3v1h16v-1h2v1h1v-1h1v1h6v-1h1v1h11v-2h1v2h1v-1h2v1h1v-1h2v1h2v-2h1v2h1v-4h1v3h1v1h3v-1h1v1h2v-2h3v1h1v1h7v-1h1v1h1v-1h2v1h1v-1h3v-1h1v2h2v-2h1v2h1v-1h2v1h6v-1h2v1h2v-4h1v4h4v-1h2v1h2v-1h3v1h3v-1h1v1h1v-1h2v1h1v-1h3v-1h1v1h1v1h2v-1h3v1h1v-5h1v1h1v4h1v-5h1v5h2v-1h1v1h1v-1h1v1h3v-2h1v1h1v1h8v-1h3v-1h2v-2h1v4h1v-4h1v3h2v1h4v-1h1v1h1v-1h1v1h7v-2h1v2h1v-1h2v1h3v-3h2v2h2v1h3v-3h1v3h3v-1h1v1h1v-1h1v1h3v-1h1v1h1v-1h1v1h4v5h-3v2h-1v-2h-1v1h-1v-1h-2v1h-3v-1h-3v1h-1v-1h-4v1h-1v-1h-1v3h-1v-3h-9v2h-2v-1h-1v-1h-2v1h-1v-1h-1v3h-1v-3h-7v1h-1v-1h-8v2h-1v-1h-1v-1h-1v1h-1v-1h-4v1h-1v-1h-2v1h-1v-1h-2v1h-1v-1h-4v1h-2v-1h-2v1h-3v-1h-24v1h-1v-1h-8v1h-2v-1h-2v1h-1v-1h-1v2h-1v-2h-2v1h-1v-1h-2v1h-3v1h-2v-2h-2v1h-1v-1h-2v1h-2v1h-1v-2h-2v2h-1v-2h-2v1h-1v-1h-1v2h-1v-2h-6v1h-2v-1h-7v2h-1v-1h-1v-1h-6v1h-1v-1h-1v1h-2v-1h-5v1h-1v-1h-1v2h-2v-2h-2v5h-1v-4h-3v-1h-1v1h-1v-1h-3v1h-1v-1h-3v2h-2v-1h-1v-1h-1v1h-1v-1h-4v1h-3v-1h-3v1h-1v-1h-1v1h-1v1h-1v-1h-1v2h-1v-3h-16v1h-1v-1h-1v1h-1v-1h-1v1h-1v-1h-12v1h-1v1h-1v-2h-5v1h-2v1h-1v-1h-1v-1h-1v1h-3v-1h-3v1h-1v1h-1v-1h-1v-1h-2v1h-1v-1h-5v1h-1v-1h-10v1h-2v-1h-4v1h-2v1h-1v1h-1v-2h-4v-1h-1v4h-1v-4h-1v1h-1v-1h-5v1h-1v-1h-3v1h-1v-1h-4v1h-2v-1h-1v2h-1v-2h-2v1h-1v-1h-1v1h-2v-1h-1v1h-1v-1h-4v3h-1v-2h-1v-1h-1v2h-3v-1h-1v-1h-7v1h-1v-1h-16v2h-3v-2h-3v1h-2v-1h-4v1h-2v-1h-3v4h-1v-4h-2v1h-1v1h-1v-1h-4v-1h-2v2h-1v-2h-2v4h-1v-4h-3v1h-1v1h-2v-1h-2v-1h-2v3h-1v-3h-5v1h-4v3h-1v-4h-1v1h-5v1h-1v-1h-1v-1h-6v1h-2v-1h-1v1h-1v-1h-1v1h-1v-1h-4v1h-1v1h-1v-1h-1v-1h-4v1h-1v-1h-1v2h-2v-1h-1v-1h-4v1h-2v-1h-1v2h-1v-1h-1v-1h-2v1h-1v1h-1v-1h-1v1h-1v-2h-1v1h-1v1h-2v-1h-1v-1h-6v1h-1v-1h-2v1h-1v-1h-1v1h-1v1h-1v-2h-4v1h-1v1h-1v-1h-1v1h-1v-1h-1v-1h-3v1h-2v-1h-4v1h-3v-1h-7v1h-3v-1h-3v1h-3v-1h-2v1h-1v1h-1v3h-1v-5h-7v1h-1v1h-1v-1h-2v1h-1v-1h-1v-1h-3v3h-1v-3h-3v1h-1v2h-1v-1h-1v-2h-13v1h-2v-1h-3v1h-2v-1h-3v1h-1v2h-1v-2h-2v-1h-1v1h-1v-1h-1v1h-2v1h-1v-1h-1v1h-1v1h-1v-2h-1v-1h-2v1h-6v1h-1v-1h-1v1h-1v-2h-1v1h-5v1h-2v-2h-5v4h-1v-4h-5v1h-1v-1h-3v1h-2v-1h-5v1h-1v-1h-1v1h-1v1h-1v1h-1v-2h-4v1h-2v-1h-1v-1h-2v2h-1v-1h-1v-1h-6v1h-2v1h-1v-2h-2v1h-1v-1h-1v1h-2v1h-2v-1h-2v-1h-3v1h-1v-1h-2v1h-1v-1h-1v1h-1v-1h-7v1h-1v-1h-2v3h-1v-1h-1v-1h-2v1h-1v-2h-13v1h-2v-1h-1v1h-4v3h-1v-4h-12v1h-3v-1h-1v1h-1v-1h-1v1h-1v-1h-2v1h-3v6h-1v-6h-2v3h-1v-4h-1v1h-1v-1h-3v1h-2v1h-1v-2h-4v1h-1v-1h-3v1h-2v-1h-4v1h-1v-1h-5v4h-1v-3h-1v-1h-1v2h-2v-1h-3v1h-1v-1h-1v1h-1v-2h-1v2h-1v-2h-3v1h-1v1h-1v-1h-1v-1h-6v2h-2v-1h-1v-1h-4v5h-1v-5h-1v1h-2v-1h-8v1h-1v2h-1v-2h-1v1h-1v-2h-1v1h-2v-1h-4v1h-1v-1h-1v1h-1v-1h-2v1h-2v-1h-2v4h-1v-3h-1v-1h-4v1h-1v-1h-4v1h-3v-1h-3v1h-7v-1h-5v1h-1v-1h-1v2h-1v-1h-1v-1h-7v1h-1v-1h-2v1h-1v-1h-3v1h-5v-1h-2v1h-2v-1h-1v1h-1v1h-1v-2h-1v3h-1v-2h-4v-1h-5v1h-1v1h-1v-2h-5v1h-2v-1h-1v1h-2v-1h-5v2h-1v-2h-1v1h-1v-1h-1v2h-1v-1h-1v-1h-2v1h-1v-1h-7v2h-1v-2h-1v2h-1v-2h-4v1h-1v-1h-1v1h-1v-1h-1v1h-1v-1h-6v1h-1v4h-1v-5h-3v1h-1v-1h-2v1h-1v-1h-2v1h-2v-1h-5v1h-1v-1h-12v1h-1v1h-1v-1h-1v4h-1v-4h-3v-1h-1v1h-1v-1h-3v1h-5v-1h-1v1h-2v-1h-1v1h-1v-1h-4v1h-1v-1h-6v1h-1v-1h-2v1h-1v1h-1v1h-1v-1h-1v-1h-1v2h-1v-2h-2v1h-3v2h-1v-1h-1v-2h-1v-1h-5v1h-2v-1h-1v1h-1v-1h-4v1h-1v-1h-3v2h-1v-2h-1v1h-2v-1h-1v1h-2v-1h-1v1h-1v-1h-4v1h-1v-1h-2v4h-1v-4h-8v2h-1v-2h-2v1h-2v-1h-1v1h-1v-1h-4v1h-1v-1h-1v1h-3v-1h-4v2h-3v-1h-2v-1h-2v1h-1v-1h-1v1h-1v-1h-3v1h-2v-1h-6v1h-2v-1h-1v1h-1zM277 546h1v-2h1v2h2v-2h2v1h1v1h1v-1h1v-1h1v1h2v-1h1v1h2v1h5v-2h1v1h4v1h4v-1h1v1h4v-1h1v1h4v-1h2v1h1v-1h2v1h2v-1h2v1h8v-1h1v-1h1v2h5v-4h1v2h1v1h1v-1h1v1h1v1h3v-3h1v3h1v-1h1v1h2v-1h1v1h2v-1h1v1h2v-1h1v1h1v-2h1v1h1v1h3v-1h1v-1h1v2h1v-2h1v2h1v-2h1v2h3v-1h2v1h3v-1h2v-1h2v2h2v-1h2v1h3v-1h1v1h2v-1h2v-2h1v1h1v1h1v-1h1v1h3v-2h1v1h1v1h4v1h1v-1h1v-1h1v-1h1v1h4v2h2v-2h1v2h1v-2h2v1h3v1h4v-1h1v1h5v-1h1v1h1v-2h2v1h1v1h1v-1h1v1h6v-2h2v1h1v-1h2v2h2v-1h2v1h2v-1h2v-1h1v1h1v1h1v-1h1v-1h1v1h1v-3h1v2h3v1h1v-1h1v1h1v1h5v-5h1v5h1v-1h2v-1h1v2h2v-1h1v1h1v-1h2v-1h1v2h2v-1h1v1h2v-1h1v-1h2v2h1v-2h1v2h3v-1h2v1h1v-1h1v1h8v-1h1v1h9v-1h1v1h3v-1h1v1h1v-2h1v1h3v1h1v-1h2v1h3v-1h1v1h2v-1h1v1h1v-5h1v5h1v-1h1v1h1v-1h3v-1h1v2h2v-1h2v-1h1v2h3v-1h5v1h2v-1h1v1h1v-2h1v2h2v-1h1v1h1v-1h3v-1h1v1h3v1h7v-1h1v1h2v-1h1v1h7v-1h1v1h5v-1h1v1h1v-2h1v2h1v-1h3v1h25v-1h1v-1h1v-1h1v2h1v1h2v-1h1v-1h1v2h1v-1h3v-4h1v5h1v-1h1v-1h1v1h2v-1h1v1h1v1h4v-1h2v1h1v-1h3v-1h1v-1h1v1h1v1h6v-1h2v2h6v-1h3v-1h1v1h5v1h8v-5h1v4h2v1h1v-1h1v-2h1v2h2v-1h1v1h1v-1h1v2h8v-1h1v1h1v-1h2v1h1v-1h1v1h1v-2h3v2h4v-1h2v-1h1v1h2v1h3v-1h1v1h2v-1h2v1h5v-1h1v1h2v-1h1v1h2v-1h3v1h1v-1h2v1h1v-1h4v-3h1v1h2v2h1v-2h1v1h1v-3h1v2h2v2h1v-3h1v1h1v-1h2v3h1v-1h2v-1h1v1h1v-1h1v1h1v1h1v-2h1v-1h1v2h1v1h3v-1h1v2h1v-2h1v2h1v-1h1v-1h1v1h1v-6h1v7h2v-1h1v1h4v-1h1v1h2v-2h2v1h2v-2h1v2h1v-1h1v1h1v-1h1v2h4v-1h1v1h12v-4h1v2h1v1h1v1h3v-1h1v1h2v-1h1v1h2v-1h1v1h1v-2h3v1h4v1h2v-1h2v1h1v-1h1v-1h1v2h1v-1h3v1h1v-1h1v1h1v-1h1v1h1v-1h1v-1h2v1h1v-2h1v3h14v-1h1v1h1v-2h2v1h1v1h5v-1h1v1h5v-2h1v1h1v1h1v-1h1v1h2v-1h1v1h2v-1h3v1h3v-1h1v-1h1v1h2v1h4v-1h1v-1h2v1h3v1h1v-1h1v1h1v-1h5v1h5v-1h4v1h4v-1h3v1h4v-1h1v1h2v-2h1v1h1v1h1v-5h1v5h1v-2h3v-1h2v1h1v1h1v1h2v-1h3v1h1v-1h2v1h13v-1h2v1h1v-1h1v1h1v-2h1v2h3v-1h1v1h2v-3h1v2h3v1h4v-2h1v2h1v-1h4v1h3v-1h1v-4h1v5h4v-1h1v1h1v-1h2v-2h1v1h1v-1h1v1h1v2h1v-2h1v2h1v-1h1v1h1v-1h3v1h2v-2h2v-1h1v2h1v-1h1v1h2v1h2v-4h1v4h2v-2h1v1h3v1h1v-1h1v-1h2v2h1v-1h1v1h1v-2h2v1h2v-1h2v1h1v1h8v-1h1v1h1v-1h5v-1h2v2h1v-1h1v1h2v-1h1v1h1v-1h2v1h1v-1h3v1h2v-1h3v-1h2v1h1v-1h1v1h1v1h1v-8h1v7h1v1h1v-1h1v-2h1v1h1v2h1v-1h1v1h2v-8h1v8h1v-8h1v8h4v-1h1v1h4v-2h2v2h3v-1h1v1h3v-1h1v1h1v-1h1v-1h1v1h2v1h7v-1h1v-1h1v1h2v-2h1v3h1v-1h1v-1h1v-1h1v3h5v-1h1v-1h1v1h1v-1h2v2h6v-2h2v1h1v1h3v-14h1v13h1v-1h3v1h1v1h2v-1h1v1h7v-1h1v1h3v-1h2v-1h1v2h5v-3h1v3h2v-1h2v1h3v-1h1v1h1v-1h1v1h3v-1h1v1h4v-2h1v-2h1v-1h2v3h1v-2h1v2h2v2h3v-1h1v1h2v-1h1v1h9v-2h1v1h1v-1h1v-1h1v1h1v2h1v-1h1v1h1v-1h1v1h1v-1h2v1h1v-1h1v1h2v-2h1v-1h1v2h1v1h1v-3h1v2h3v1h1v-2h1v2h2v-1h1v1h1v-5h1v4h1v1h4v-1h3v1h1v-1h1v1h3v-2h1v2h3v-1h3v-1h1v1h1v1h4v-2h1v1h2v1h3v-5h1v4h1v-1h1v2h2v-1h1v-1h1v1h1v1h3v-1h1v1h2v-2h3v-2h1v1h1v1h1v1h1v-1h1v1h3v1h6v-1h1v1h1v-1h1v-1h1v1h1v1h3v-2h1v1h1v1h3v-1h1v-1h1v1h1v-1h2v1h1v-2h1v2h2v1h5v-2h1v2h1v5h-3v1h-1v-1h-3v1h-1v-1h-1v8h-1v-7h-1v1h-1v-1h-1v-1h-1v2h-1v-1h-2v-1h-1v1h-1v-1h-2v1h-1v-1h-1v1h-1v-1h-2v2h-2v-1h-1v-1h-1v1h-1v1h-1v-1h-1v-1h-4v1h-1v1h-3v3h-1v-2h-1v-1h-1v-1h-1v-1h-1v1h-3v-1h-4v1h-1v1h-1v-1h-2v1h-1v-1h-1v1h-1v-1h-1v1h-2v-2h-2v1h-2v-1h-1v1h-1v-1h-5v1h-1v-1h-6v2h-1v-1h-2v-1h-4v1h-3v-1h-1v12h-1v-12h-3v1h-1v3h-1v-3h-2v-1h-4v1h-1v-1h-3v2h-1v-1h-1v1h-1v-1h-2v-1h-1v1h-5v3h-1v-1h-1v-1h-2v-1h-1v-1h-4v1h-6v-1h-1v1h-5v2h-1v-2h-1v3h-1v2h-1v-3h-1v1h-1v-2h-1v-2h-1v1h-1v-1h-2v1h-1v-1h-2v1h-1v-1h-3v1h-1v-1h-1v1h-1v-1h-6v2h-3v-1h-1v-1h-1v1h-1v-1h-5v1h-1v1h-1v-2h-1v1h-1v-1h-1v1h-1v-1h-1v1h-1v-1h-1v2h-1v-2h-3v1h-1v2h-1v12h-1v-15h-1v1h-1v1h-1v1h-1v-1h-1v-2h-1v1h-2v-1h-1v1h-1v-1h-2v1h-1v-1h-8v1h-1v-1h-3v1h-1v-1h-1v1h-1v-1h-2v1h-1v-1h-1v1h-1v-1h-6v1h-1v2h-1v-3h-11v2h-4v-1h-3v1h-1v-1h-2v7h-1v-7h-1v8h-1v-8h-1v-1h-5v1h-1v-1h-2v7h-1v-7h-1v1h-1v-1h-1v1h-3v-1h-2v1h-3v-1h-5v1h-1v-1h-3v1h-1v-1h-3v1h-1v-1h-1v3h-1v-2h-1v-1h-5v2h-1v-1h-1v-1h-14v1h-2v-1h-6v1h-1v-1h-10v1h-1v1h-1v-1h-2v-1h-1v1h-2v-1h-4v1h-1v-1h-4v1h-1v-1h-5v1h-1v-1h-1v1h-4v1h-1v-1h-1v-1h-3v1h-2v1h-3v1h-1v-1h-1v-2h-8v1h-1v2h-1v-3h-2v3h-1v-3h-12v1h-4v1h-1v-1h-2v4h-1v-3h-1v-1h-2v1h-1v-2h-6v1h-1v-1h-5v1h-1v-1h-1v1h-2v-1h-8v1h-2v1h-1v-2h-1v2h-1v-2h-4v1h-3v-1h-3v1h-1v-1h-7v1h-1v-1h-9v1h-1v-1h-2v2h-4v-1h-4v1h-1v-1h-1v-1h-2v1h-1v-1h-3v1h-1v-1h-2v1h-1v-1h-4v1h-1v-1h-3v1h-1v-1h-6v1h-1v-1h-2v1h-4v-1h-1v1h-2v1h-1v-1h-1v1h-1v-2h-2v1h-2v2h-1v-1h-2v-1h-4v-1h-2v4h-1v-4h-1v2h-1v-2h-1v1h-1v2h-1v-2h-1v-1h-2v1h-1v-1h-3v1h-1v1h-1v-1h-1v1h-1v-2h-3v7h-1v-7h-10v1h-3v-1h-3v1h-1v-1h-1v1h-1v-1h-3v10h-1v-9h-3v-1h-1v2h-1v-1h-1v-1h-1v1h-2v1h-1v-1h-3v-1h-1v9h-1v-9h-2v1h-2v1h-1v-2h-1v2h-1v-1h-2v1h-1v1h-1v-1h-2v-1h-1v2h-1v-2h-1v2h-2v1h-1v-1h-2v1h-1v-1h-1v1h-1v1h-1v1h-1v-3h-2v2h-1v-2h-2v-2h-1v3h-1v-1h-1v-1h-1v-2h-1v3h-1v-2h-2v1h-1v-2h-2v1h-1v-1h-2v1h-1v2h-1v-2h-1v-1h-1v2h-1v-1h-2v-1h-6v2h-1v-1h-1v-1h-3v1h-1v-1h-4v2h-2v-2h-3v1h-3v1h-3v-1h-1v2h-1v1h-1v-2h-2v1h-1v-2h-1v-1h-14v1h-1v-1h-9v1h-2v-1h-1v2h-1v-2h-1v1h-2v9h-1v-9h-1v-1h-1v1h-1v-1h-1v2h-1v-1h-2v4h-1v-3h-1v-2h-6v1h-4v-1h-3v1h-1v-1h-6v2h-1v-2h-3v2h-1v-2h-4v2h-1v-2h-2v2h-1v-2h-4v1h-3v1h-1v-1h-1v1h-1v-1h-1v-1h-1v1h-1v-1h-5v1h-1v1h-1v-1h-1v-1h-1v2h-2v-1h-1v1h-2v-1h-4v1h-1v-2h-3v1h-1v1h-3v-1h-1v-1h-13v1h-1v-1h-1v1h-1v-1h-2v1h-1v1h-3v-1h-3v-1h-5v3h-1v-1h-1v1h-1v-3h-3v1h-1v-1h-2v1h-1v-1h-5v1h-1v-1h-6v1h-1v1h-1v-1h-3v-1h-7v1h-2v-1h-6v1h-1v-1h-2v1h-2v1h-1v-2h-2v1h-3v-1h-3v1h-1v-1h-2v4h-1v-3h-2v-1h-3v1h-2v2h-1v-1h-1v-1h-1v-1h-12v1h-1v-1h-7v1h-1v1h-1v-1h-6v-1h-2v1h-1v1h-2v-1h-1v-1h-3v3h-1v-1h-1v1h-1v-2h-1v-1h-4v1h-3v-1h-5v1h-1v-1h-3v1h-4v1h-1v-2h-6v5h-1v-5h-1v1h-2v-1h-4v1h-1v1h-1v-2h-6v1h-1v1h-1v-1h-1v1h-2v-1h-2v1h-1v2h-1v-1h-2v1h-1v-2h-1v-1h-1v-1h-3v2h-1v-1h-1v-1h-8v1h-1v1h-1v1h-2v-3h-2v1h-2v-1h-2v2h-1v-2h-1v1h-2v-1h-3v1h-1v-1h-1v1h-2v-1h-5v1h-1v-1h-4v1h-1v-1h-3v1h-2v-1h-1v1h-2v-1h-2v2h-2v-2h-4v4h-1v-4h-2v2h-1v-2h-2v2h-1v-1h-1v-1h-2v1h-2v-1h-1v1h-1v-1h-4v1h-1v-1h-1v1h-1v1h-1v-1h-1v1h-1v-2h-2v1h-1v-1h-3v1h-2v-1h-1v2h-1v-2h-1v1h-1v1h-1v-1h-2v2h-1v-2h-2v-1h-5v2h-1v-1h-2v-1h-4v1h-3v-1h-2v1h-3v-1h-1v1h-4v-1h-1v1h-2v-1h-2zM277 577h3v-1h1v1h7v-1h1v1h1v-1h1v1h3v-3h1v-1h1v2h1v1h1v1h2v-1h1v-1h1v2h1v-1h3v1h3v-1h1v1h1v-1h2v-1h2v2h7v-1h1v-3h1v2h3v1h3v-1h1v1h1v1h1v-1h2v1h2v-2h1v2h4v-2h3v-1h3v2h2v1h4v-1h1v1h1v-1h1v1h3v-1h1v1h1v-1h1v-1h1v-1h1v1h2v2h7v-2h2v1h1v1h1v-1h1v1h9v-2h1v1h1v-1h2v2h4v-2h2v1h2v1h1v-1h3v1h5v-1h1v-3h1v4h4v-2h1v1h1v-1h1v2h8v-1h1v-1h2v1h1v-1h2v2h2v-2h1v2h2v-1h1v1h2v-1h2v-1h1v-1h1v1h1v-3h1v3h5v1h1v1h2v-2h4v1h2v1h6v-2h1v1h1v1h1v-1h1v1h1v-1h3v1h3v-1h1v1h5v-2h1v1h2v-3h1v3h1v1h1v-1h1v-1h1v-1h1v1h1v1h1v1h6v-9h1v9h1v-2h2v-1h2v-3h1v-4h1v7h1v-3h2v-5h1v7h1v2h1v-1h1v-7h1v9h1v-3h1v2h1v-7h1v8h1v1h1v-1h1v1h12v-2h1v-3h1v1h1v1h1v2h2v1h1v-1h1v1h3v-1h1v1h3v-1h1v1h1v-4h1v2h2v2h1v-1h1v1h1v-2h1v1h1v1h5v-1h1v-1h2v2h1v-1h1v1h5v-2h1v2h6v-2h1v2h3v-1h2v-1h1v2h1v-1h1v-1h1v-1h2v3h1v-1h2v-2h1v1h1v2h1v-1h1v-1h1v1h2v-1h1v1h1v-1h1v2h2v-1h2v1h6v-7h1v7h3v-1h1v1h3v-1h1v1h2v-1h1v1h5v-1h2v1h3v-1h1v1h1v-1h1v1h3v-1h1v-3h1v2h3v1h1v1h1v-1h2v1h4v-1h1v-1h2v-1h1v3h1v-1h1v1h5v-2h1v2h1v-1h1v1h5v-1h1v1h1v-1h3v1h5v-1h1v-1h1v-1h1v2h1v1h5v-1h1v1h1v-1h1v-1h2v1h1v-1h1v1h2v-1h1v2h4v-1h2v-1h2v1h1v1h2v-1h1v1h1v-1h1v1h2v-2h1v1h1v-2h2v3h1v-1h1v1h4v-2h1v2h6v-1h1v1h1v-5h1v5h5v-2h2v1h1v-2h1v2h1v-1h2v1h1v1h2v-1h1v1h1v-1h1v1h1v-1h1v-1h1v1h1v-1h1v1h2v-2h1v1h1v1h1v-1h1v1h1v1h4v-1h2v1h1v-2h1v2h4v-5h1v5h1v-1h2v-1h1v2h1v-4h1v2h1v1h3v1h3v-8h1v8h2v-3h1v-2h3v-3h1v2h2v2h2v2h2v-2h1v1h2v2h1v-7h1v8h1v-1h1v-1h1v2h4v-1h1v1h5v-1h1v-1h1v1h3v1h8v-1h2v1h2v-1h1v1h4v-1h1v-1h1v1h2v-3h2v1h2v1h2v1h1v1h2v-2h1v1h1v-1h1v2h3v-1h1v-1h2v1h2v1h5v-2h1v2h1v-2h2v2h4v-1h1v1h4v-1h1v1h6v-2h2v1h1v1h1v-1h2v1h5v-1h1v-1h1v2h3v-1h1v1h1v-9h1v8h1v1h1v-1h1v1h3v-2h1v2h3v-1h1v-1h1v-2h1v-2h1v3h1v-2h1v2h1v2h2v-1h1v1h2v1h4v-1h1v-1h1v2h3v-2h1v1h1v1h3v-1h2v-1h1v-1h2v2h1v-1h2v1h1v1h8v-2h1v1h1v1h4v-3h1v3h2v-1h1v1h2v-1h1v1h2v-1h1v1h1v-4h1v3h3v1h11v-3h1v3h2v-1h1v1h2v-1h2v-1h1v2h1v-1h2v-1h1v-1h3v2h2v1h9v-1h1v1h1v-1h1v1h3v-2h1v1h1v1h2v-1h3v1h2v-1h1v-1h1v1h2v-1h2v2h1v-2h2v1h1v1h8v-2h1v1h1v-1h1v2h2v-1h2v1h1v-1h2v-1h1v2h4v-1h2v1h2v-1h1v1h4v-1h1v1h4v-1h1v1h2v-1h1v1h3v-1h2v1h4v-1h1v1h5v-1h3v1h9v-2h1v1h1v1h1v-2h1v2h2v-1h2v1h11v-1h5v-1h1v1h2v1h3v-2h1v1h1v1h1v-1h2v1h4v-1h4v-1h1v2h3v-1h1v1h3v-1h2v1h1v-1h1v1h2v-2h1v2h4v-1h3v-1h1v1h1v-1h2v2h2v-1h1v1h5v-1h2v-1h1v1h2v-2h1v1h1v1h1v1h2v-1h2v1h1v-1h1v1h6v-1h1v1h2v-2h2v1h5v-1h1v2h6v-1h1v1h2v-1h2v-2h1v2h2v1h4v-1h1v1h2v-1h4v-1h1v2h2v-1h1v1h3v-1h1v1h3v-2h3v1h1v1h1v-2h1v2h6v-2h1v1h1v1h5v-1h3v1h6v-1h2v1h1v-1h1v1h2v-2h2v2h1v-1h2v1h1v-1h1v1h3v-2h1v1h2v-1h1v1h1v1h2v-1h1v1h2v-1h3v1h3v-1h2v-1h1v1h2v1h1v-1h1v1h4v-1h1v1h1v-1h3v-1h1v1h1v-1h2v1h2v-2h1v3h3v-1h1v-1h1v-1h1v1h1v2h1v-2h1v2h6v-1h1v-1h2v1h1v-1h1v-1h1v1h2v2h1v-2h1v1h4v1h2v-1h1v-1h1v1h1v1h1v-1h3v1h1v-1h1v1h3v-1h3v1h4v5h-1v1h-2v-1h-8v1h-1v1h-1v-2h-2v1h-1v-1h-3v1h-1v-1h-2v1h-1v-1h-2v5h-1v-5h-4v1h-1v-1h-5v1h-1v-1h-5v1h-1v-1h-4v1h-3v-1h-1v1h-1v-1h-1v1h-1v1h-1v-2h-1v1h-2v-1h-1v1h-1v1h-2v-1h-1v2h-1v-2h-1v-1h-5v1h-1v-1h-1v1h-1v-1h-1v1h-1v-1h-1v1h-1v-1h-2v1h-1v1h-2v-1h-1v-1h-1v1h-1v-1h-1v1h-3v-1h-2v1h-1v1h-1v2h-1v-3h-2v-1h-5v1h-1v-1h-2v1h-1v-1h-1v3h-1v-1h-1v-2h-1v2h-1v-2h-1v1h-1v1h-1v2h-1v-2h-1v-1h-6v4h-1v-5h-4v1h-1v4h-1v-4h-1v1h-1v-2h-1v1h-1v-1h-4v1h-1v2h-1v-2h-2v-1h-2v1h-1v-1h-6v1h-1v1h-1v-1h-4v1h-1v-1h-2v-1h-2v1h-1v-1h-6v1h-1v-1h-1v2h-1v-2h-11v2h-1v-2h-1v1h-1v1h-1v1h-1v-1h-1v-1h-1v2h-1v-2h-1v-1h-6v1h-1v-1h-2v1h-1v-1h-2v1h-2v-1h-3v2h-3v-1h-1v-1h-13v1h-3v1h-1v-1h-2v1h-1v-1h-1v-1h-10v1h-2v-1h-1v1h-1v-1h-2v1h-1v-1h-2v1h-1v1h-1v-1h-2v-1h-2v3h-1v-2h-1v-1h-2v2h-1v-1h-1v-1h-5v1h-2v-1h-1v1h-2v-1h-6v1h-3v-1h-1v1h-2v-1h-7v1h-2v-1h-2v2h-1v-2h-2v1h-1v-1h-5v1h-1v-1h-1v1h-3v-1h-1v1h-1v-1h-1v1h-3v-1h-9v1h-1v1h-1v-1h-1v-1h-3v2h-1v-2h-3v2h-2v1h-1v1h-1v-3h-4v-1h-2v1h-1v-1h-3v2h-1v-1h-1v-1h-3v2h-1v-1h-1v-1h-4v1h-2v-1h-4v1h-2v-1h-2v2h-1v-2h-5v1h-1v-1h-2v1h-1v1h-1v2h-1v-1h-1v-1h-1v-1h-2v-1h-2v2h-1v-1h-1v-1h-14v1h-1v-1h-1v1h-1v1h-1v-1h-1v-1h-2v7h-1v-7h-1v2h-2v-1h-1v-1h-1v3h-1v-1h-1v-1h-1v1h-1v-2h-1v9h-1v-9h-3v2h-2v-2h-6v1h-1v-1h-3v1h-1v-1h-3v1h-1v1h-1v-1h-1v-1h-1v1h-2v-1h-3v2h-1v-2h-2v1h-1v-1h-1v1h-3v-1h-3v1h-1v-1h-1v1h-1v-1h-1v2h-1v2h-1v-1h-1v-1h-1v-1h-1v-1h-1v1h-1v-1h-5v2h-1v-1h-2v-1h-1v7h-1v-7h-1v1h-1v-1h-1v1h-1v1h-1v-1h-1v1h-2v-2h-13v1h-1v-1h-2v1h-2v-1h-3v1h-1v-1h-2v2h-1v-1h-1v1h-1v-1h-1v-1h-4v1h-1v-1h-1v2h-1v-1h-2v1h-2v-2h-1v1h-2v1h-1v-1h-1v-1h-2v2h-2v-1h-1v1h-1v1h-2v2h-2v-2h-1v2h-1v-5h-1v2h-1v-1h-1v-1h-2v1h-2v1h-1v-1h-1v-1h-2v1h-1v-1h-1v1h-1v-1h-4v2h-1v-1h-1v-1h-4v1h-1v1h-2v-2h-6v1h-5v5h-1v-5h-2v1h-1v2h-1v-1h-1v-1h-2v3h-1v-2h-1v2h-1v-1h-1v-1h-1v-1h-1v1h-1v-2h-1v1h-1v1h-1v3h-1v-6h-1v2h-1v-2h-1v2h-1v1h-1v-2h-3v-1h-1v1h-1v-1h-2v1h-3v-1h-1v1h-1v-1h-4v1h-1v-1h-8v1h-1v1h-1v-1h-3v3h-1v-4h-1v1h-1v-1h-1v1h-1v-1h-1v1h-2v2h-1v-2h-2v1h-1v-2h-1v1h-2v1h-1v-1h-2v-1h-3v9h-1v-8h-1v1h-1v-1h-1v1h-1v-2h-6v1h-3v-1h-1v2h-1v3h-1v-2h-2v-1h-1v-1h-1v-1h-7v1h-3v-1h-1v1h-3v1h-2v-1h-1v-1h-2v1h-2v-1h-5v1h-1v-1h-1v2h-1v3h-1v-5h-2v1h-1v-1h-2v1h-1v-1h-2v2h-1v-1h-1v-1h-1v1h-1v1h-1v-2h-8v3h-1v-3h-1v1h-1v1h-2v-2h-1v2h-1v-1h-1v5h-1v-6h-10v2h-2v3h-2v-1h-1v-2h-1v-2h-1v2h-1v-1h-1v1h-1v-1h-1v-1h-1v2h-3v-1h-1v-1h-1v2h-1v-1h-1v-1h-1v1h-1v-1h-1v2h-2v-1h-1v1h-1v-1h-1v1h-3v-1h-1v1h-1v-2h-1v9h-1v-9h-4v1h-1v-1h-3v1h-2v1h-1v3h-3v-5h-5v1h-2v1h-1v-2h-3v1h-2v-1h-7v1h-1v1h-2v-1h-1v2h-1v-2h-3v-1h-1v1h-1v-1h-6v1h-1v-1h-1v1h-2v1h-1v-1h-1v-1h-3v1h-1v-1h-2v2h-1v-2h-2v1h-1v-1h-1v1h-2v1h-1v-2h-3v4h-1v-4h-2v1h-1v1h-1v4h-1v1h-1v-1h-1v-5h-1v1h-2v-2h-3v1h-3v2h-1v-2h-1v-1h-2v1h-3v5h-1v-4h-1v1h-2v5h-1v-4h-1v-1h-1v-1h-1v8h-1v-6h-2v1h-1v4h-1v-7h-1v1h-3v-1h-1v-1h-1v6h-1v-7h-4v1h-1v3h-1v-3h-1v-1h-1v1h-1v-1h-1v1h-4v-1h-2v1h-1v2h-1v-2h-2v-1h-1v1h-2v1h-1v-1h-1v1h-1v1h-1v-3h-1v1h-1v1h-1v-2h-5v2h-1v-2h-4v1h-1v-1h-7v1h-1v1h-2v-1h-1v2h-1v1h-1v-2h-1v2h-1v-2h-1v-1h-1v1h-1v-2h-1v1h-1v-1h-2v1h-1v1h-1v-1h-1v-1h-1v1h-2v1h-1v2h-1v-3h-3v-1h-3v1h-1v-1h-2v1h-2v1h-1v-1h-1v1h-2v1h-1v-2h-2v5h-1v-5h-1v-1h-6v1h-6v-1h-1v1h-1v-1h-1v1h-1v-1h-6v1h-2v-1h-1v1h-1v1h-1v-1h-1v1h-1v-1h-2v-1h-5v2h-1v-2h-1v1h-2v1h-1v1h-3v1h-1v-1h-1v-2h-2v-1h-6v1h-1v1h-2v-2h-1v1h-3v1h-1v2h-1v2h-1v-3h-2v-3h-2v1h-2v-1h-4v2h-1v-1h-1v-1h-1v1h-1v1h-1v-2h-3v3h-1v1h-1v1h-2v-4h-1v1h-1v-1h-1v-1h-2v2h-1v-1h-1v1h-1v-1h-1v-1h-5v2h-1v-1h-1v1h-1v-2h-5v2h-1v1h-1v-2h-2v-1h-5v1h-3v-1h-5v2h-2v-1h-2v-1h-1v1h-1v-1h-1zM277 607h5v-1h3v-1h1v2h3v-1h1v-1h1v2h2v-1h1v1h3v-1h3v-2h1v1h1v1h1v1h2v-1h5v1h6v-1h1v1h5v-1h1v1h2v-1h1v1h3v-1h1v1h1v-1h2v1h2v-1h3v-1h1v2h8v-1h1v1h1v-1h2v1h1v-1h2v1h2v-1h5v1h4v-1h1v1h1v-1h1v-1h1v1h2v-1h2v-1h1v2h3v-1h1v1h2v-1h1v2h7v-1h1v1h4v-1h3v1h6v-1h1v1h2v-1h1v1h5v-1h2v1h7v-2h1v1h3v1h1v-1h1v1h2v-1h1v1h9v-1h1v1h9v-1h2v1h7v-1h4v1h4v-1h3v1h8v-1h1v1h3v-1h1v1h1v-1h5v1h2v-1h2v1h5v-1h1v1h1v-1h1v1h1v-1h1v1h1v-2h1v1h3v1h2v-1h2v1h2v-1h1v1h1v-1h2v1h4v-1h3v-1h1v1h1v1h1v-1h1v1h2v-1h2v1h1v-1h1v-1h1v1h2v1h3v-2h2v1h2v1h4v-1h1v1h2v-2h1v1h2v1h5v-1h2v1h3v-1h1v1h2v-1h1v-1h1v2h1v-1h1v1h2v-1h1v1h9v-1h2v1h1v-2h1v-2h1v3h3v1h1v-1h3v1h6v-1h2v1h2v-1h1v1h2v-1h1v1h1v-1h1v1h5v-2h3v1h2v1h5v-1h1v1h3v-1h1v1h3v-1h1v1h1v-2h2v2h1v-2h1v2h1v-2h1v-2h1v4h2v-1h1v-1h1v1h1v-1h1v1h1v1h3v-1h1v-1h2v1h1v-1h1v1h2v1h1v-1h1v1h3v-1h2v1h2v-2h1v2h2v-1h1v1h2v-1h2v1h1v-3h1v3h7v-1h1v1h3v-1h3v1h4v-1h5v1h4v-1h1v1h1v-2h1v2h3v-1h2v1h2v-1h1v1h6v-1h2v-9h1v9h1v-2h1v2h2v-1h2v2h1v-1h2v1h1v-1h1v1h4v-1h3v1h12v-1h2v1h3v-1h1v1h1v-1h1v1h2v-1h1v-1h3v1h1v1h4v-1h1v1h1v-2h1v2h9v-3h1v3h3v-2h1v2h11v-2h1v1h1v-1h1v1h2v-1h1v1h1v1h1v-1h2v-1h1v1h1v-1h1v2h4v-1h4v1h1v-1h2v-1h1v2h1v-2h1v1h1v-1h1v1h1v1h10v-1h1v-1h1v2h2v-1h6v1h7v-1h1v1h2v-2h2v2h4v-1h1v-1h2v2h4v-2h1v2h3v-1h1v1h2v-1h1v1h3v-1h1v1h4v-1h1v-1h1v1h1v1h6v-1h1v1h3v-1h1v-2h1v3h2v-1h1v1h1v-4h1v4h3v-1h2v1h1v-1h1v1h2v-1h1v1h1v-1h4v1h4v-1h1v1h1v-2h1v2h1v-1h3v-1h2v1h4v1h10v-1h1v-1h1v1h3v1h1v-1h1v1h1v-1h1v1h3v-1h1v-1h2v1h2v1h1v-1h1v1h4v-1h2v-1h2v-1h1v1h2v2h1v-1h4v-1h1v2h9v-1h1v1h3v-1h2v1h1v-3h1v3h5v-1h2v1h2v-1h3v1h1v-1h3v1h2v-1h1v-1h2v1h1v-1h1v2h2v-1h1v1h2v-1h2v1h5v-1h3v1h2v-1h1v1h2v-1h5v1h8v-1h1v1h4v-1h1v-1h1v1h1v1h1v-1h1v1h2v-1h1v-1h1v2h7v-1h2v-2h1v2h1v1h1v-1h2v1h4v-1h4v1h2v-1h1v-1h1v2h10v-2h1v1h1v1h1v-1h3v1h1v-1h2v1h2v-1h1v-1h1v1h1v1h1v-1h1v1h6v-1h2v1h1v-2h1v1h4v1h3v-1h2v-1h1v2h1v-1h2v1h6v-1h1v-1h2v1h1v1h2v-1h1v1h1v-1h2v1h1v-2h1v1h1v1h1v-1h2v1h1v-1h1v1h4v-1h1v-4h1v4h1v1h6v-2h1v1h1v-1h2v2h1v-1h5v-1h1v1h1v1h1v-1h1v1h1v-1h1v1h2v-1h1v1h4v-1h1v1h7v-1h1v-1h2v1h1v-1h1v1h2v1h1v-1h1v1h5v-2h1v2h2v-1h1v-1h1v1h1v1h1v-1h1v1h2v-1h1v1h13v-1h1v-1h3v1h3v1h2v-1h1v1h2v-1h2v1h2v-1h1v1h5v-1h1v1h11v-1h1v-1h3v2h3v-1h1v1h11v-2h1v1h1v-1h1v-1h1v2h5v1h8v-1h9v-1h3v2h3v-1h1v-2h1v3h5v-1h1v1h6v-1h1v1h2v-2h2v2h2v-1h3v-4h1v5h1v-2h2v2h3v-2h1v1h1v-1h1v1h2v1h3v-1h1v-1h1v2h1v-1h3v1h2v-1h1v-1h1v2h3v-1h3v1h3v-1h1v1h1v7h-1v-2h-1v2h-2v-2h-1v3h-1v-2h-3v-1h-1v1h-1v-1h-2v1h-1v-1h-2v1h-2v-1h-3v1h-1v-1h-4v1h-3v-1h-6v3h-1v-3h-1v1h-1v-1h-3v1h-1v-1h-2v1h-2v-1h-1v1h-2v-1h-1v4h-1v-3h-2v2h-1v-2h-1v-1h-1v1h-1v-1h-1v3h-1v-3h-9v1h-3v-1h-5v1h-1v-1h-5v1h-1v-1h-1v1h-1v-1h-1v1h-1v-1h-1v2h-1v1h-2v-2h-1v1h-1v-1h-1v-1h-3v1h-3v-1h-3v1h-1v-1h-3v1h-1v-1h-2v1h-1v-1h-1v1h-1v-1h-1v1h-1v-1h-4v1h-1v1h-1v-1h-2v1h-1v-2h-10v1h-2v-1h-1v1h-1v-1h-3v1h-1v-1h-1v1h-1v-1h-2v1h-4v-1h-22v1h-1v2h-1v-2h-1v-1h-1v1h-2v1h-1v-1h-1v2h-1v-2h-2v-1h-1v1h-2v-1h-1v1h-1v-1h-9v1h-1v-1h-1v1h-2v-1h-1v1h-3v-1h-1v2h-1v-2h-2v1h-1v-1h-1v1h-2v-1h-1v1h-3v-1h-1v2h-1v-1h-1v-1h-6v1h-1v-1h-6v1h-1v1h-2v1h-1v-1h-2v-2h-5v1h-1v-1h-5v2h-1v-1h-1v-1h-1v1h-2v-1h-1v1h-2v-1h-5v1h-2v1h-2v-1h-1v2h-1v-3h-1v1h-1v-1h-1v1h-1v-1h-1v1h-1v-1h-2v1h-1v-1h-5v1h-1v-1h-4v1h-1v-1h-1v1h-1v-1h-4v1h-1v-1h-1v1h-1v-1h-2v1h-1v1h-1v-1h-1v-1h-1v1h-1v-1h-1v1h-1v-1h-11v1h-1v-1h-5v1h-1v-1h-9v1h-1v-1h-3v1h-1v-1h-7v1h-1v-1h-1v1h-2v-1h-4v1h-3v-1h-4v1h-1v-1h-2v1h-1v-1h-5v1h-1v-1h-11v1h-1v-1h-5v1h-1v-1h-9v1h-1v2h-1v-2h-1v2h-2v1h-1v-3h-1v1h-1v-2h-1v1h-1v-1h-4v1h-1v1h-2v-1h-1v-1h-2v1h-1v-1h-2v1h-1v-1h-4v5h-1v-5h-1v1h-2v-1h-1v1h-1v1h-2v-1h-2v-1h-2v1h-2v-1h-6v1h-2v-1h-1v1h-1v-1h-2v1h-1v-1h-1v2h-1v-1h-1v-1h-2v2h-3v-1h-4v-1h-1v1h-2v1h-1v-1h-1v-1h-5v1h-1v-1h-1v1h-2v-1h-4v1h-3v-1h-1v1h-2v-1h-1v1h-1v4h-1v-4h-1v-1h-4v2h-2v-2h-1v1h-1v-1h-2v1h-1v-1h-4v1h-2v-1h-6v1h-2v-1h-1v1h-4v-1h-2v1h-1v-1h-5v1h-1v-1h-1v1h-2v-1h-10v3h-1v-1h-1v-1h-1v-1h-2v1h-2v-1h-1v1h-1v1h-3v-2h-2v1h-2v-1h-5v1h-1v-1h-3v1h-1v3h-1v-4h-5v1h-2v-1h-2v1h-2v-1h-2v1h-1v-1h-5v1h-1v1h-1v-1h-1v1h-1v-2h-4v1h-2v-1h-2v1h-1v-1h-4v1h-1v1h-2v-2h-1v4h-1v-4h-2v3h-1v-2h-1v-1h-23v1h-2v-1h-3v1h-3v-1h-1v1h-2v-1h-2v1h-1v2h-1v-3h-2v1h-1v1h-1v-2h-1v1h-1v-1h-7v1h-1v-1h-3v1h-1v-1h-4v11h-1v-9h-1v-1h-1v-1h-10v1h-1v-1h-9v1h-1v1h-1v-2h-1v2h-1v-2h-5v1h-3v-1h-3v2h-3v-2h-1v1h-1v-1h-13v1h-1v-1h-4v1h-3v-1h-4v1h-1v-1h-1v1h-1v1h-1v-2h-1v1h-1v-1h-6v2h-1v1h-1v-3h-2v1h-1v-1h-1v1h-3v1h-1v-1h-1v-1h-2v1h-1v-1h-1v1h-1v-1h-6v2h-2v-1h-2v1h-1v-1h-1v-1h-1v2h-2v-1h-1v-1h-3v1h-2v-1h-4v1h-2v-1h-4v1h-1v-1h-1v1h-1v-1h-5v1h-1v-1h-1v1h-1v2h-1v-3h-6v1h-1v-1h-6v1h-8v-1h-1v1h-3v-1h-2v1h-2v1h-1v-1h-3v-1h-1v1h-2v-1h-4v1h-2v-1h-2v1h-2v-1h-1v1h-2v-1h-5v1h-3v-1h-1v1h-2v-1h-1v1h-1v1h-1v-2h-2v1h-1v-1h-1v1h-2v-1h-8v3h-1v-1h-1v1h-1v-1h-2v-1h-1v-1h-1v2h-1v-1h-1v-1h-1v1h-1v-1h-8v2h-1v1h-1v-2h-1v-1h-3v1h-1v-1h-4v1h-1v-1h-4v1h-2v-1h-1v1h-3v-1h-2v2h-1v-1h-6v-1h-2v1h-1v-1h-2v1h-1v-1h-1v1h-1v-1h-1v1h-1v-1h-1v1h-1v1h-2v-2h-1v5h-1v-3h-2v-2h-1v1h-4v-1h-3v2h-1v-1h-1v-1h-8v1h-2v1h-1v-2h-2v1h-4v-1h-1v1h-3v1h-1v-1h-1v-1h-1v2h-2v-1h-1v1h-1v-1h-1v-1h-1v2h-3v-1h-1v1h-3v-2h-1v2h-2v-2h-2v1h-3v-1h-2v5h-1v-5h-1v1h-2v-1h-1v1h-2v1h-2v-1h-4v1h-2v-1h-2v1h-1v-2h-1v1h-2v-1h-2v1h-1v1h-1v-1h-1v-1h-5v1h-1v-1h-6v1h-1v-1h-1v4h-1v-4h-6v1h-1v-1h-13v1h-1v-1h-1v1h-4v-1h-7v2h-1v-1h-1v1h-3v-1h-4v-1h-2v1h-1v-1h-1v1h-1v-1h-7v4h-1v-4h-4v1h-1v-1h-3v2h-1v-1h-1v-1h-1zM277 638h1v-1h1v-1h1v2h1v-2h1v1h2v1h2v-1h3v1h1v-1h1v1h1v-1h1v1h6v-1h1v-1h1v1h1v1h1v-1h1v-1h1v1h4v-1h1v1h1v1h7v-2h3v1h1v-1h1v1h5v1h2v-1h1v1h3v-1h1v1h4v-1h1v1h2v-1h1v1h1v-1h3v1h1v-1h1v1h3v-1h3v1h4v-1h1v1h5v-1h2v1h1v-1h3v1h7v-1h3v-1h2v1h3v1h1v-1h2v-1h1v2h8v-1h2v-1h1v2h3v-1h2v-1h1v2h5v-1h1v1h1v-1h2v-1h1v2h4v-1h1v1h1v-1h1v1h1v-1h1v1h8v-1h1v1h3v-1h1v1h1v-1h1v-2h1v1h1v2h1v-1h2v1h2v-1h1v-1h1v1h1v-1h1v1h2v-1h1v2h1v-1h2v1h3v-1h1v1h3v-1h1v1h1v-1h1v1h6v-1h3v1h2v-1h2v1h2v-1h2v1h8v-1h1v1h11v-2h1v2h7v-1h2v1h11v-1h1v1h12v-1h2v1h10v-1h1v1h3v-1h2v1h1v-1h1v1h4v-2h1v1h1v1h1v-1h6v1h2v-1h8v1h2v-1h2v1h11v-1h1v1h2v-1h1v1h1v-1h1v1h4v-2h1v1h1v1h1v-1h2v1h1v-1h1v1h8v-1h4v1h4v-1h1v1h3v-1h1v-1h1v1h4v1h1v-2h1v2h2v-5h1v4h1v1h4v-1h1v1h1v-1h1v1h8v-1h1v1h1v-5h1v5h2v-1h1v1h12v-1h4v1h11v-1h1v-1h2v1h1v-1h1v1h6v-2h1v1h1v2h2v-1h1v-1h1v2h1v-1h3v-1h1v2h9v-1h1v1h6v-1h1v1h4v-1h1v1h2v-1h2v1h4v-1h1v1h3v-1h3v1h1v-7h1v7h8v-3h1v3h15v-1h4v-1h1v2h7v-1h1v1h2v-1h2v1h11v-1h3v-1h1v1h1v-1h1v2h1v-1h1v-1h1v1h1v1h2v-1h1v1h2v-1h2v1h2v-2h1v1h1v1h3v-1h2v1h5v-2h1v2h2v-1h2v-1h2v1h1v-2h1v3h1v-2h1v1h1v1h4v-1h2v-1h1v2h3v-1h3v1h2v-1h2v-2h1v2h2v1h3v-1h1v1h5v-1h1v-1h1v1h2v1h4v-1h3v1h9v-1h1v1h5v-2h1v1h2v1h1v-1h2v-1h2v1h2v1h6v-1h1v1h1v-1h1v1h2v-1h1v1h1v-1h3v1h1v-1h1v1h1v-1h5v1h1v-1h4v1h3v-1h1v1h5v-1h1v1h1v-1h2v1h6v-1h2v1h2v-1h1v1h7v-2h1v2h8v-1h2v-1h1v1h1v1h2v-2h2v2h15v-1h1v1h2v-1h1v1h1v-1h1v-1h1v2h1v-1h2v1h1v-1h4v-1h1v1h1v1h4v-1h1v1h5v-2h1v1h1v1h3v-1h3v1h2v-1h1v1h1v-1h2v1h1v-1h1v1h4v-1h2v1h1v-1h3v1h1v-2h1v2h1v-1h1v1h3v-1h3v1h11v-1h1v1h1v-2h3v1h1v1h7v-1h1v1h3v-1h1v-1h1v2h7v-1h1v1h2v-1h2v1h6v-3h1v3h3v-1h1v1h11v-1h1v1h13v-1h1v-1h2v1h1v1h3v-1h3v1h2v-1h1v1h3v-1h1v-1h1v1h2v1h1v-1h3v1h2v-1h1v-1h2v1h5v1h1v-1h3v1h2v-1h1v1h1v-2h1v2h1v-1h1v-1h1v1h1v1h1v-1h2v1h1v-1h2v1h10v-1h3v1h1v-1h2v-1h2v2h2v-1h1v1h1v-1h2v1h2v-1h3v-1h1v1h1v1h5v-1h2v1h3v-1h2v1h4v-1h1v1h2v-2h2v-2h1v4h1v-2h1v1h4v1h2v-1h1v1h7v-1h2v1h5v-1h2v1h7v-1h1v1h1v-1h1v1h2v-1h1v1h3v-1h1v1h2v-1h3v1h3v-1h2v-1h2v1h1v1h2v-1h1v1h2v-1h1v1h4v-1h1v-1h1v2h1v-1h1v1h1v-1h1v1h2v-1h1v1h1v-1h2v1h1v-1h1v1h4v-2h1v2h1v-1h1v1h4v-1h1v1h1v-1h1v1h12v-1h2v1h5v-2h1v2h2v-1h7v1h2v-1h1v1h1v-2h1v-1h1v1h1v2h1v-1h1v1h4v-1h5v1h2v-1h1v1h5v4h-2v1h-2v-1h-7v1h-1v1h-1v-1h-1v-1h-5v1h-1v-1h-1v1h-1v-1h-1v3h-1v-1h-1v-1h-1v-1h-2v1h-1v-1h-5v1h-1v-1h-4v1h-2v-1h-1v1h-1v-1h-4v2h-1v-1h-2v-1h-2v1h-3v-1h-1v1h-1v-1h-11v1h-2v1h-1v-1h-4v-1h-2v1h-2v-1h-1v1h-1v-1h-2v1h-1v-1h-5v1h-2v-1h-1v1h-1v1h-3v-2h-2v1h-1v-1h-5v1h-2v-1h-6v1h-6v-1h-3v1h-2v1h-1v-1h-4v1h-1v-1h-1v-1h-5v2h-3v-1h-1v-1h-3v1h-1v1h-1v-1h-1v1h-1v-1h-1v-1h-10v1h-1v-1h-5v1h-1v-1h-4v1h-1v-1h-6v1h-2v-1h-3v1h-2v-1h-1v1h-2v-1h-1v1h-1v-1h-3v2h-1v1h-1v-1h-1v-2h-6v1h-1v-1h-11v1h-3v-1h-2v1h-1v1h-1v-1h-4v-1h-1v1h-1v1h-1v-1h-2v-1h-1v2h-1v-1h-5v-1h-1v2h-1v-2h-5v1h-3v1h-1v-1h-1v1h-1v-1h-1v-1h-1v1h-3v-1h-3v1h-1v-1h-1v1h-2v-1h-2v1h-1v-1h-1v1h-3v-1h-3v1h-2v-1h-2v3h-1v-2h-1v-1h-1v1h-5v-1h-7v1h-1v-1h-1v1h-2v-1h-4v1h-2v-1h-12v1h-3v-1h-9v2h-1v-2h-1v1h-1v-1h-1v1h-1v-1h-2v1h-1v-1h-1v1h-2v1h-1v-1h-1v1h-2v-1h-1v-1h-10v1h-2v-1h-1v1h-1v-1h-1v1h-1v-1h-4v1h-1v1h-1v-2h-20v1h-1v1h-1v-1h-3v1h-1v-1h-1v1h-1v-1h-4v-1h-1v1h-1v-1h-6v1h-1v-1h-3v1h-1v-1h-1v1h-1v-1h-4v1h-1v-1h-1v2h-2v-1h-1v1h-1v-2h-1v1h-3v-1h-5v1h-3v-1h-1v1h-1v-1h-5v1h-1v-1h-3v1h-1v-1h-1v2h-1v-2h-1v1h-2v-1h-3v1h-1v-1h-3v1h-1v-1h-1v1h-1v-1h-7v1h-1v1h-1v-2h-2v1h-1v-1h-4v1h-1v-1h-1v1h-1v-1h-1v1h-1v1h-1v-2h-4v1h-4v1h-1v-1h-1v1h-3v-1h-1v1h-1v-1h-2v-1h-2v1h-2v1h-1v-1h-1v-1h-2v1h-1v1h-1v-1h-1v-1h-6v1h-1v-1h-1v1h-1v-1h-4v1h-1v1h-3v-2h-2v1h-2v-1h-1v1h-1v-1h-1v1h-3v1h-1v1h-1v-1h-1v-2h-4v1h-4v-1h-1v1h-2v-1h-4v1h-1v1h-1v-1h-1v1h-2v1h-1v1h-2v-1h-1v-2h-1v-1h-4v1h-2v-1h-3v1h-2v2h-1v-1h-1v-1h-1v-1h-5v1h-2v-1h-2v4h-1v-4h-8v1h-1v-1h-1v1h-1v-1h-3v1h-2v-1h-2v1h-1v1h-3v-1h-1v-1h-3v1h-3v-1h-3v3h-1v-3h-1v1h-2v-1h-2v1h-1v-1h-2v2h-1v-1h-1v-1h-15v1h-3v-1h-1v7h-1v-7h-1v1h-3v1h-1v-1h-2v-1h-4v1h-1v-1h-3v1h-3v-1h-2v1h-1v-1h-1v1h-2v-1h-2v1h-2v-1h-2v1h-1v-1h-2v5h-1v-4h-4v-1h-9v1h-1v1h-1v-1h-2v-1h-1v1h-2v-1h-5v1h-1v1h-1v-1h-1v-1h-1v2h-1v-1h-1v-1h-6v1h-1v1h-2v-1h-3v-1h-2v1h-1v-1h-5v2h-1v-1h-1v-1h-7v1h-1v-1h-4v1h-3v-1h-8v1h-2v-1h-1v1h-3v-1h-1v1h-1v-1h-2v1h-1v-1h-1v1h-1v-1h-4v1h-1v-1h-6v1h-1v-1h-1v1h-1v-1h-2v1h-2v1h-1v-2h-7v1h-2v-1h-4v1h-2v1h-1v1h-1v-1h-1v-2h-4v1h-2v-1h-4v1h-2v1h-1v-1h-4v-1h-9v2h-3v-1h-1v-1h-3v1h-3v1h-1v-1h-2v-1h-3v1h-2v-1h-4v1h-2v-1h-7v1h-1v-1h-1v1h-2v-1h-7v1h-1v-1h-1v1h-2v1h-2v-1h-1v-1h-2v1h-1v-1h-2v2h-2v-1h-5v-1h-1v4h-1v-3h-1v-1h-1v1h-2v-1h-1v1h-1v-1h-1v1h-3v1h-1v-1h-1v-1h-1v1h-3v-1h-2v1h-4v-1h-3v1h-1v-1h-5v1h-1v-1h-1v1h-3v-1h-3v1h-2v-1h-2v1h-2v-1h-4v1h-2v-1h-2v1h-2v1h-1v-1h-1v-1h-2v1h-1v2h-1v-1h-1v2h-2v-2h-1v-1h-1v-1h-6v1h-3v1h-1v-1h-1v1h-1v-2h-1v1h-1v-1h-4v1h-1v-1h-1v1h-1v-1h-1v1h-1v-1h-2v2h-1v-2h-1v1h-1v-1h-1v1h-1v2h-1v-1h-2v-1h-1v-1h-1v1h-1v-1h-6v1h-1v-1h-1v1h-1v-1h-2v1h-1v-1h-5v1h-1v1h-2v-1h-5v-1h-3v1h-1v-1h-1v1h-3v-1h-2v1h-1v1h-1v-1h-2v1h-1v-1h-2v-1h-4v1h-2v-1h-2v1h-1v-1h-4v1h-1v-1h-7v1h-1v1h-1v1h-1v-2h-3v1h-1v-1h-3v1h-2v-2h-1v1h-5v1h-1v-1h-2v-1h-2v1h-1v-1h-3v1h-2v-1h-1v1h-2v-1h-4v1h-1v-1h-6v1h-2v-1h-4v1h-2v-1h-1v1h-1v1h-1v-1h-1v-1h-5v1h-2v-1h-1zM277 668h2v-1h1v1h1v-1h2v1h4v-1h2v1h2v-1h1v1h2v-2h1v2h3v-1h1v1h2v-1h5v1h4v-1h5v-1h1v2h2v-1h1v1h4v-3h1v2h2v1h4v-1h3v1h4v-1h2v1h11v-1h1v1h2v-1h1v1h4v-1h1v1h2v-1h1v1h1v-1h1v1h4v-1h1v1h1v-1h2v1h2v-1h2v1h1v-1h1v1h3v-1h2v1h1v-4h1v3h2v1h7v-1h1v1h1v-1h1v1h2v-1h5v1h1v-1h2v1h1v-1h1v1h1v-1h2v1h3v-1h2v1h1v-1h1v1h1v-2h1v2h5v-1h1v1h1v-1h4v-1h1v1h2v1h14v-1h2v1h5v-1h1v1h7v-1h3v1h3v-1h1v1h1v-2h1v1h2v1h1v-1h1v1h1v-1h1v1h13v-1h1v1h2v-1h2v1h1v-1h1v1h10v-1h2v-1h2v1h1v1h2v-1h1v1h2v-1h1v1h1v-1h1v1h11v-1h1v1h5v-1h1v1h1v-1h3v-3h1v2h1v1h3v1h4v-1h1v1h3v-1h1v1h11v-1h3v1h5v-1h2v1h5v-1h5v1h1v-1h1v1h2v-1h1v1h6v-1h1v-1h4v1h2v1h1v-1h1v1h5v-1h4v1h2v-1h1v1h1v-1h2v-1h1v2h2v-1h3v1h3v-1h1v-1h2v1h1v1h4v-1h1v1h6v-1h1v1h4v-1h1v1h1v-1h1v1h1v-1h1v1h2v-2h1v2h2v-1h1v1h5v-1h1v1h2v-1h2v-1h1v1h2v-1h1v1h2v1h3v-1h1v1h1v-1h2v1h2v-2h1v2h25v-1h1v1h3v-1h1v1h1v-1h1v1h1v-1h1v1h1v-2h1v2h2v-1h2v1h1v-1h1v-1h1v2h1v-2h1v-1h1v1h1v1h1v1h5v-1h1v-3h1v4h2v-1h2v1h2v-2h2v1h1v1h7v-1h1v1h3v-1h5v1h2v-1h2v1h3v-1h1v-1h1v1h1v1h2v-1h1v1h1v-1h1v1h5v-1h1v1h3v-1h2v1h7v-1h1v1h3v-1h1v1h1v-1h1v1h1v-1h1v1h1v-1h1v1h7v-1h2v1h5v-2h1v2h1v-1h1v1h2v-2h1v1h2v1h1v-1h2v-1h1v1h1v-1h1v-1h1v1h2v2h3v-1h1v-1h1v1h1v1h1v-1h1v1h6v-1h2v1h1v-2h1v1h1v1h1v-1h1v1h5v-1h2v1h2v-1h2v1h8v-1h4v1h2v-1h1v1h2v-1h3v1h1v-1h1v1h5v-1h1v1h2v-1h2v-1h1v1h3v1h2v-1h2v1h12v-1h3v1h1v-2h1v2h3v-1h1v1h7v-1h1v1h1v-1h1v1h1v-1h2v1h1v-1h1v1h3v-1h1v1h7v-1h2v-1h3v1h1v1h8v-1h2v1h12v-1h2v1h6v-1h5v-1h1v1h1v1h4v-1h1v1h3v-1h1v1h5v-1h1v-1h1v1h2v1h1v-1h1v-1h1v1h2v-2h1v1h2v2h3v-1h1v1h3v-1h1v1h2v-1h1v1h1v-1h2v1h1v-1h1v1h1v-1h1v1h2v-1h1v1h3v-1h1v1h1v-1h1v-1h2v2h7v-1h1v-1h1v1h1v1h4v-1h1v1h6v-1h1v1h8v-1h1v-1h4v2h2v-1h1v1h2v-5h1v4h1v1h1v-1h3v1h1v-1h2v1h2v-1h3v1h2v-1h4v1h5v-1h1v1h7v-1h5v1h8v-1h1v1h2v-1h3v1h1v-1h2v1h3v-1h1v1h2v-1h2v1h2v-2h1v1h1v-1h2v2h4v-1h2v1h1v-1h2v1h1v-1h3v1h1v-1h1v1h1v-1h2v1h2v-1h1v1h4v-1h1v1h5v-1h3v-1h1v2h3v-1h3v-1h1v1h2v-1h1v2h3v-1h1v1h1v-1h3v1h4v-1h2v1h2v-1h1v-1h1v1h2v1h2v-1h1v1h5v-2h2v1h1v1h3v-2h2v-1h1v1h1v1h1v1h1v-1h1v-1h3v1h1v1h2v-1h1v1h1v-2h1v1h2v1h8v-1h2v1h1v-12h1v11h1v-1h1v1h1v1h6v-2h1v1h2v-1h1v1h1v1h3v-1h1v1h2v-1h3v1h2v-1h3v-1h1v1h1v1h1v-1h3v1h2v-1h1v1h2v-1h5v-1h1v1h1v1h1v-1h1v1h1v-1h2v1h1v-1h5v1h1v-1h1v1h1v-1h1v1h4v-1h6v1h1v-1h1v1h9v-1h1v-1h3v1h2v1h1v-5h1v5h5v-1h1v1h4v-1h1v1h8v-1h1v1h2v-1h1v1h3v-1h2v1h3v-1h1v6h-4v1h-2v1h-3v-2h-1v-1h-2v1h-2v1h-1v-1h-3v-1h-1v1h-1v-1h-11v1h-3v-1h-10v1h-1v-1h-2v2h-2v-1h-1v-1h-1v1h-1v-1h-1v1h-2v-1h-2v2h-2v-1h-1v-1h-2v1h-1v-1h-7v1h-2v-1h-7v1h-1v2h-1v-1h-2v-1h-1v-1h-1v1h-1v-1h-6v1h-3v-1h-3v1h-5v-1h-1v1h-2v-1h-2v1h-2v-1h-4v1h-1v-1h-1v1h-1v-1h-2v1h-1v-1h-1v1h-1v10h-1v-11h-4v1h-1v-1h-2v1h-1v-1h-2v1h-1v-1h-1v1h-1v1h-1v-2h-3v1h-2v1h-1v-2h-3v1h-2v-1h-2v1h-5v-1h-7v1h-1v-1h-3v1h-2v-1h-2v1h-1v1h-3v-1h-1v-1h-1v1h-1v-1h-1v1h-3v-1h-2v1h-5v-1h-1v1h-1v-1h-6v1h-1v-1h-3v1h-8v-1h-3v1h-1v-1h-1v1h-1v-1h-5v1h-2v1h-1v-1h-1v-1h-8v1h-3v-1h-2v1h-1v-1h-2v2h-1v-2h-4v1h-3v-1h-2v1h-5v-1h-2v1h-1v1h-1v-2h-1v1h-1v-1h-5v1h-1v-1h-2v1h-3v-1h-2v1h-1v-1h-1v1h-4v-1h-12v1h-1v-1h-1v2h-1v-1h-2v-1h-5v1h-2v-1h-1v1h-1v-1h-4v1h-1v-1h-3v1h-3v-1h-8v1h-1v-1h-5v1h-1v-1h-2v1h-1v-1h-8v1h-2v-1h-1v1h-3v-1h-1v1h-2v-1h-3v1h-1v1h-1v-1h-4v-1h-1v1h-2v-1h-3v1h-1v-1h-5v1h-2v-1h-8v2h-1v-1h-1v1h-1v-2h-17v1h-1v1h-1v-2h-4v1h-2v-1h-2v1h-1v-1h-6v1h-3v-1h-6v1h-6v-1h-1v1h-2v-1h-1v1h-1v1h-2v-2h-6v1h-1v-1h-2v1h-1v-1h-1v1h-1v-1h-5v1h-1v2h-1v-3h-1v1h-2v1h-1v-2h-4v1h-1v-1h-2v1h-3v-1h-1v2h-1v-1h-3v1h-1v-2h-3v2h-1v-2h-3v1h-1v-1h-6v1h-2v-1h-1v2h-1v-1h-1v1h-1v-2h-1v1h-1v-1h-3v1h-1v-1h-10v2h-1v-2h-3v1h-2v-1h-3v1h-3v1h-1v-1h-1v1h-1v-2h-2v1h-1v-1h-5v1h-2v-1h-2v1h-1v-1h-5v1h-3v-1h-1v1h-2v-1h-1v1h-2v1h-1v-2h-1v1h-1v-1h-4v1h-1v-1h-4v1h-1v-1h-7v1h-1v-1h-1v1h-5v1h-2v-2h-1v2h-1v1h-1v-2h-3v-1h-3v1h-1v-1h-2v3h-1v-3h-14v4h-1v-3h-1v-1h-1v1h-2v-1h-8v1h-1v-1h-5v1h-2v-1h-5v1h-2v-1h-2v2h-1v-1h-3v1h-1v-2h-2v1h-3v-1h-2v1h-1v-1h-1v1h-2v-1h-1v1h-2v-1h-1v2h-1v-2h-7v1h-1v-1h-2v2h-1v-1h-1v2h-1v-1h-1v-1h-2v1h-1v-1h-1v-1h-6v1h-1v-1h-3v1h-4v-1h-3v1h-5v1h-1v-2h-4v1h-2v4h-1v-5h-9v1h-3v-1h-4v1h-3v-1h-1v1h-1v1h-1v-1h-2v-1h-1v1h-1v-1h-1v2h-1v-2h-1v2h-1v-1h-1v-1h-2v1h-1v-1h-10v1h-1v-1h-2v1h-2v-1h-4v1h-1v-1h-5v2h-1v-1h-3v-1h-6v2h-1v-1h-1v1h-1v-1h-4v-1h-6v1h-3v-1h-3v1h-2v-1h-6v1h-6v-1h-16v1h-1v-1h-10v1h-1v1h-1v-1h-1v1h-1v-2h-6v1h-1v-1h-1v1h-1v-1h-4v1h-2v1h-1v-1h-2v-1h-11v1h-1v-1h-2v1h-1v-1h-6v1h-1v-1h-4v1h-2v-1h-5v1h-2v1h-1v-1h-1v-1h-4v2h-1v-2h-3v1h-2v-1h-3v2h-1v-2h-1v1h-1v-1h-4v1h-3v-1h-5v1h-1v1h-1v-1h-1v-1h-3v1h-7v-1h-6v1h-1v-1h-2v1h-3v-1h-4v1h-1v-1h-2v1h-1v1h-1v-2h-9v1h-3v-1h-1v1h-1v-1h-5v1h-2v-1h-3v1h-3v-1h-7v1h-3v1h-1v1h-1v-1h-2v-1h-2v-1h-8v1h-4v-1h-5v1h-1v-1h-1v1h-1v-1h-4v2h-1v-2h-14v1h-2v-1h-1v1h-3v-1h-1v2h-2v-1h-1v-1h-2v1h-1v-1h-1v1h-1v-1h-3v1h-2v-1h-5v2h-1v-2h-1v1h-1v1h-1v-1h-1v-1h-1v1h-1v-1h-1v1h-1v-1h-1v2h-1v-1h-3v-1h-1v1h-2v-1h-4v1h-2v-1h-1v1h-2v1h-1v-1h-3v-1h-4v1h-1v-1h-6v5h-1v-5h-4v1h-1v-1h-1v1h-1v-1h-3v1h-3zM277 698h1v1h15v-2h1v1h1v1h1v-1h5v1h4v-1h1v1h6v-1h1v1h1v-1h3v1h3v-1h1v1h1v-3h1v2h3v-1h1v1h6v1h6v-1h1v1h1v-1h1v1h2v-1h1v-1h1v1h1v1h2v-2h3v1h1v1h2v-1h3v-1h1v1h3v1h6v-1h1v1h2v-1h3v1h4v-1h1v1h1v-1h2v1h4v-2h1v1h1v-3h1v4h2v-1h1v1h1v-2h1v1h2v1h1v-1h5v1h1v-2h1v2h1v-1h1v1h1v-1h1v-1h2v1h1v1h3v-1h1v1h7v-2h1v2h2v-1h1v1h7v-1h1v1h3v-1h3v1h3v-1h1v1h1v-1h3v1h1v-1h1v1h2v-1h1v1h3v-1h2v1h8v-1h1v1h7v-2h1v2h1v-1h1v-1h1v1h2v1h4v-2h2v1h1v1h1v-1h1v1h12v-1h3v1h1v-1h1v1h4v-1h1v1h1v-1h4v-1h1v1h1v1h2v-1h1v1h1v-1h3v1h5v-1h1v1h5v-1h2v-1h1v1h1v-1h1v1h1v1h1v-1h3v-1h1v1h1v1h2v-1h4v1h4v-1h1v-1h1v1h1v-1h1v2h3v-1h1v1h2v-1h1v1h1v-1h2v1h2v-1h1v1h4v-1h2v1h12v-1h1v1h3v-1h1v1h6v-1h4v1h4v-1h1v1h8v-1h1v1h2v-1h1v1h5v-1h1v-1h1v1h3v1h1v-2h1v2h5v-1h3v1h1v-2h1v2h6v-1h3v1h1v-1h2v1h5v-1h1v1h1v-1h1v1h2v-1h2v1h8v-1h2v-1h1v-2h1v2h1v1h2v1h1v-1h1v1h1v-1h6v1h1v-1h1v1h3v-1h1v1h2v-1h1v-1h1v2h4v-1h3v1h2v-1h1v1h1v-2h2v1h1v1h4v-3h1v3h1v-1h1v1h2v-1h1v-1h2v1h1v1h1v-1h2v1h1v-1h1v1h1v-1h2v1h2v-1h2v1h2v-1h1v1h8v-1h1v1h2v-1h1v-1h1v1h3v1h22v-1h1v-1h1v2h5v-1h1v-3h1v4h2v-2h2v2h2v-1h1v-1h2v1h3v1h1v-1h1v1h2v-1h2v1h1v-1h1v1h4v-1h2v1h6v-1h1v1h3v-1h4v1h1v-1h4v1h1v-1h3v1h7v-2h1v1h1v1h4v-1h1v-1h1v1h2v1h5v-1h2v1h3v-1h1v1h3v-1h3v1h5v-1h1v1h1v-2h2v2h2v-1h1v1h5v-1h2v1h3v-1h3v-1h1v1h1v1h22v-1h1v1h1v-1h1v1h3v-1h3v1h1v-1h1v1h2v-1h1v1h5v-4h1v3h2v1h2v-2h1v2h4v-1h2v1h11v-1h1v1h1v-1h2v1h1v-1h1v-1h1v1h2v-1h1v1h1v1h1v-1h2v1h14v-1h1v1h7v-1h1v1h5v-1h4v1h1v-2h1v1h1v1h5v-1h1v1h3v-1h2v1h1v-1h1v1h10v-1h1v1h1v-1h1v1h2v-1h4v1h23v-1h5v-1h2v1h1v1h2v-1h2v1h6v-1h1v1h4v-1h1v1h10v-1h2v1h1v-1h3v1h1v-1h2v-1h1v2h1v-2h2v1h4v1h3v-1h2v1h1v-2h1v1h1v1h15v-1h3v-1h1v2h7v-1h9v1h1v-1h1v-1h1v2h6v-1h1v1h4v-1h1v1h4v-1h2v1h2v-9h1v9h9v-1h3v1h1v-1h4v1h2v-2h4v1h1v1h12v-1h2v1h3v-1h1v-1h3v1h1v1h1v-1h2v1h5v-1h1v1h2v-1h1v1h1v-1h2v1h4v-2h1v2h1v-1h1v-1h1v1h1v1h3v-2h1v2h9v-1h1v1h1v-1h4v1h5v-1h1v1h3v-1h1v1h8v-1h1v1h7v-1h2v1h3v-1h1v-1h1v1h1v1h1v-1h3v-1h2v2h1v-1h2v-1h1v1h1v1h9v-1h1v1h6v-1h1v1h1v-1h1v1h2v-1h1v1h4v-1h1v1h2v-1h3v1h1v-1h1v-1h1v2h1v-1h1v1h8v-1h1v1h3v-1h3v1h3v-1h1v1h2v-1h1v1h4v-1h2v1h2v-1h1v-1h1v1h4v1h2v-1h1v1h1v-1h1v6h-2v1h-1v-2h-4v1h-1v-1h-1v1h-1v-1h-1v1h-3v1h-1v-1h-4v-1h-2v1h-2v-1h-4v1h-1v1h-1v-1h-1v2h-1v-1h-1v-2h-6v1h-1v-1h-2v1h-2v1h-1v-1h-1v-1h-6v1h-3v1h-1v-2h-2v2h-1v-1h-1v-1h-2v1h-1v1h-1v-1h-1v-1h-6v1h-1v-1h-4v1h-2v-1h-4v1h-1v-1h-2v1h-2v-1h-11v3h-1v-3h-5v1h-3v-1h-2v1h-1v1h-2v-1h-1v-1h-1v1h-1v-1h-13v2h-1v-1h-1v-1h-6v1h-2v-1h-1v1h-2v1h-1v-1h-2v1h-4v-1h-2v-1h-3v1h-2v-1h-2v2h-1v-1h-1v1h-1v-1h-1v3h-1v-2h-1v-2h-4v1h-1v-1h-6v2h-1v1h-1v-1h-3v-1h-3v-1h-3v1h-1v-1h-2v4h-1v-4h-1v1h-1v-1h-4v1h-1v-1h-1v2h-1v-2h-1v1h-2v-1h-4v1h-1v-1h-3v1h-1v-1h-3v4h-1v-3h-1v1h-1v-1h-4v-1h-1v1h-3v1h-2v-2h-1v2h-2v-1h-2v-1h-17v1h-1v-1h-2v1h-3v-1h-3v1h-1v-1h-1v1h-5v1h-1v-1h-1v-1h-1v2h-1v-1h-2v-1h-3v1h-3v-1h-1v2h-1v-2h-6v1h-1v-1h-3v1h-2v1h-2v-1h-2v-1h-3v1h-1v-1h-2v1h-1v-1h-10v1h-1v1h-1v-2h-6v1h-1v-1h-7v1h-1v-1h-4v1h-1v1h-1v-1h-1v-1h-3v1h-2v1h-1v-1h-2v-1h-1v1h-2v-1h-2v1h-3v-1h-15v1h-4v-1h-2v1h-2v-1h-5v1h-3v-1h-1v1h-1v3h-1v-3h-1v-1h-2v1h-1v-1h-1v1h-3v-1h-1v1h-2v-1h-2v1h-1v1h-1v-1h-1v-1h-2v1h-2v-1h-5v1h-5v-1h-1v1h-1v-1h-1v1h-2v-1h-2v1h-1v-1h-1v2h-1v-1h-4v-1h-4v1h-1v-1h-1v1h-3v1h-2v3h-1v-5h-4v1h-3v-1h-1v1h-2v-1h-5v1h-3v1h-2v-2h-2v1h-4v-1h-3v1h-1v-1h-3v1h-2v1h-1v-2h-2v2h-1v-2h-8v2h-1v-1h-1v-1h-2v1h-3v-1h-2v1h-1v-1h-3v1h-2v1h-1v-2h-1v1h-2v1h-1v-1h-1v-1h-2v1h-1v2h-1v-1h-1v-2h-2v1h-1v-1h-5v1h-1v-1h-4v1h-3v-1h-2v1h-2v-1h-2v1h-1v1h-1v-2h-5v1h-1v-1h-1v2h-1v-1h-1v-1h-2v1h-2v-1h-1v1h-6v-1h-3v3h-1v-3h-3v1h-2v-1h-1v1h-1v-1h-8v1h-1v-1h-1v1h-1v-1h-4v1h-2v-1h-6v1h-1v-1h-7v1h-1v3h-1v-3h-1v-1h-1v2h-1v-1h-1v1h-1v-2h-6v1h-3v-1h-1v1h-1v-1h-4v1h-1v-1h-6v1h-1v-1h-2v1h-1v1h-2v-2h-7v1h-1v-1h-12v1h-1v1h-1v-1h-1v-1h-4v1h-2v-1h-2v1h-2v-1h-1v1h-2v1h-1v-1h-2v-1h-2v1h-2v2h-1v-1h-1v-2h-6v1h-2v-1h-3v1h-2v-1h-1v1h-1v-1h-13v1h-1v-1h-7v1h-1v-1h-9v1h-1v-1h-9v1h-1v-1h-5v1h-1v-1h-2v1h-1v-1h-1v1h-2v-1h-1v1h-1v1h-1v-1h-1v-1h-13v1h-3v-1h-3v1h-1v-1h-2v1h-1v-1h-1v5h-1v-5h-7v1h-1v-1h-2v1h-3v1h-1v-1h-1v-1h-1v2h-1v-1h-3v-1h-4v1h-1v1h-2v1h-1v-1h-1v-1h-2v1h-2v-1h-2v-1h-1v1h-2v-1h-11v2h-1v-1h-1v1h-2v-1h-2v-1h-1v1h-2v-1h-1v5h-1v-4h-1v-1h-1v1h-4v-1h-1v2h-2v-1h-1v2h-1v-2h-1v1h-1v-1h-2v1h-1v-1h-2v-1h-11v1h-1v-1h-1v1h-1v-1h-3v1h-1v1h-2v-1h-1v1h-1v-1h-3v-1h-3v2h-1v-1h-2v-1h-9v1h-1v-1h-3v5h-1v-4h-1v-1h-3v1h-2v-1h-2v1h-2v-1h-5v1h-1v-1h-3v1h-1v-1h-2v1h-1v-1h-1v1h-1v-1h-2v4h-1v-4h-1v1h-2v-1h-6v1h-1v-1h-1v1h-1v-1h-3v1h-2v1h-1v-1h-1v-1h-2v1h-1v-1h-2v1h-2v-1h-7v1h-3v1h-1v-1h-2v-1h-2v1h-3v-1h-12v1h-2v-1h-1v1h-1v-1h-3v1h-3v-1h-4v1h-1v1h-1v-2h-2v1h-2v-1h-1v1h-2v-1h-4v1h-2v-1h-16v1h-2v-1h-3v1h-1v-1h-2v1h-2v-1h-5v1h-1v-1h-4v1h-1v-1h-1v1h-1v-1h-5v1h-2v-1h-2v1h-1v-1h-2v1h-6v-1h-2v1h-1v1h-4v-1h-1v1h-1v-1h-1v1h-2v-1h-1v-1h-1v1h-2v-1h-1v1h-1v-1h-9v1h-1v-1h-4v1h-1v1h-1v-2h-1v1h-1v-1h-4v1h-3v-1h-1v1h-2v-1h-2v1h-4v-1h-1v2h-1v-1h-1zM277 729h2v-1h1v1h7v-1h3v1h2v-3h1v3h3v-1h3v1h2v-1h5v1h7v-1h1v1h1v-1h2v1h5v-1h1v1h3v-1h1v1h13v-1h2v1h1v-1h1v1h1v-1h2v-1h1v1h2v1h2v-1h1v1h6v-1h1v1h4v-2h1v1h1v1h1v-1h2v1h16v-1h1v1h1v-1h1v1h2v-1h6v1h4v-1h1v1h2v-1h2v1h1v-1h1v1h10v-1h2v1h3v-1h3v1h1v-1h3v1h5v-1h3v1h1v-1h1v1h5v-2h1v1h3v1h13v-1h2v-1h1v2h1v-2h2v1h2v1h4v-1h2v1h3v-1h1v1h2v-1h2v1h2v-1h2v1h1v-1h2v1h5v-1h2v1h6v-1h1v1h23v-1h2v1h1v-1h3v1h1v-2h2v2h5v-1h4v1h2v-1h1v1h4v-1h2v1h6v-1h5v1h1v-2h2v1h1v-1h1v1h1v1h3v-1h2v1h12v-2h1v2h3v-1h1v-1h1v2h3v-1h1v1h13v-1h1v1h3v-1h1v1h3v-1h1v-1h1v2h3v-1h1v1h3v-1h4v1h2v-4h1v3h2v1h1v-1h5v1h4v-1h2v1h7v-2h1v2h5v-1h4v1h1v-1h1v1h3v-1h2v-2h1v1h1v1h1v1h5v-1h1v1h4v-1h1v1h8v-1h3v1h4v-1h1v-1h1v1h1v1h1v-2h1v2h10v-1h1v-1h1v2h1v-2h1v1h1v1h1v-1h1v1h10v-1h1v-1h2v1h4v1h1v-1h2v-1h1v2h12v-1h2v1h4v-1h1v1h2v-1h1v1h2v-1h1v1h4v-1h1v1h1v-1h1v1h1v-1h1v1h5v-1h6v1h1v-1h1v1h10v-1h1v1h16v-1h3v1h7v-1h2v1h1v-1h1v1h5v-1h1v-1h1v1h2v-1h2v2h8v-1h1v1h10v-1h2v1h3v-1h1v1h3v-1h3v-1h1v2h1v-1h1v1h1v-1h1v1h3v-1h1v1h1v-1h1v1h2v-3h1v3h1v-1h1v1h4v-1h1v1h2v-1h4v1h9v-1h3v-1h2v2h4v-1h3v1h5v-1h1v1h1v-1h1v1h3v-1h1v-1h2v1h1v1h3v-1h2v1h1v-1h1v1h6v-1h1v1h3v-1h3v1h7v-1h2v1h7v-1h1v1h1v-2h1v1h1v1h1v-1h1v-4h1v5h4v-1h1v1h9v-1h1v1h5v-1h1v1h6v-1h1v-2h1v3h1v-2h1v1h1v1h4v-2h1v1h1v-1h4v1h3v1h2v-1h5v-1h1v-1h1v1h1v1h3v1h7v-1h1v1h1v-1h2v1h17v-3h1v3h1v-1h1v1h5v-1h1v1h5v-1h2v1h5v-1h5v-1h1v2h1v-1h4v1h2v-1h1v1h1v-1h1v1h1v-1h4v1h2v-1h3v1h1v-2h1v1h1v-1h1v1h1v1h1v-1h2v1h3v-1h1v1h6v-1h1v1h5v-1h1v1h6v-1h1v1h1v-1h2v1h2v-1h1v1h4v-1h2v1h1v-1h2v-1h2v1h1v1h2v-1h4v1h2v-1h1v1h1v-1h1v1h3v-1h2v1h3v-2h1v2h2v-1h3v1h1v-1h1v1h3v-1h2v1h1v-1h3v1h6v-1h1v1h3v-1h1v1h9v-1h1v1h2v-2h1v1h3v1h2v-1h2v1h3v-1h2v1h1v-1h2v1h1v-1h1v1h11v-1h3v1h2v-1h1v1h4v-1h4v1h5v-1h1v1h4v-2h1v1h2v1h1v-1h1v-1h1v2h4v-2h1v1h3v1h1v-1h1v1h7v-1h1v-2h1v3h7v-2h1v2h1v-1h1v1h1v-1h1v1h1v-1h1v1h1v-1h3v1h12v-1h4v1h6v-1h1v1h1v-1h1v1h6v-1h2v1h12v-1h1v1h1v-1h2v1h8v-1h2v1h3v-1h1v1h2v-1h3v1h1v-1h1v1h3v-1h2v1h1v-1h3v1h4v4h-4v1h-1v-1h-4v1h-3v-1h-4v1h-1v1h-1v-2h-2v1h-3v1h-1v-1h-2v-1h-7v1h-3v-1h-2v1h-1v-1h-1v1h-1v-1h-7v1h-1v-1h-6v5h-1v-4h-1v-1h-4v1h-2v-1h-3v2h-2v-1h-1v-1h-1v1h-1v-1h-8v1h-1v-1h-12v1h-1v1h-2v-1h-1v1h-2v-2h-4v1h-1v-1h-2v1h-2v-1h-1v1h-4v-1h-3v1h-4v-1h-5v1h-1v-1h-8v2h-1v-1h-1v-1h-5v1h-1v-1h-13v1h-1v-1h-6v1h-1v-1h-1v1h-2v-1h-2v1h-1v-1h-3v1h-2v1h-3v-2h-1v1h-1v1h-1v-1h-1v-1h-1v1h-1v-1h-2v1h-1v-1h-2v1h-1v-1h-1v2h-1v-1h-3v-1h-4v1h-1v-1h-4v1h-5v1h-2v-2h-1v1h-6v-1h-1v1h-1v-1h-2v1h-2v-1h-2v1h-1v-1h-6v1h-4v-1h-6v2h-1v-1h-6v-1h-2v1h-1v-1h-6v1h-2v1h-2v-1h-6v-1h-2v1h-1v-1h-4v1h-1v1h-1v-2h-1v1h-1v-1h-1v1h-2v-1h-9v1h-1v-1h-2v1h-3v-1h-7v1h-1v-1h-4v1h-1v-1h-1v2h-2v-2h-2v2h-1v-1h-1v1h-1v-1h-1v-1h-9v1h-4v-1h-3v1h-1v-1h-3v1h-1v-1h-8v1h-1v-1h-2v1h-3v1h-2v-2h-9v1h-1v-1h-2v1h-3v-1h-4v1h-2v-1h-1v2h-1v-1h-1v-1h-2v1h-1v-1h-1v1h-1v-1h-2v1h-1v-1h-1v1h-1v-1h-3v4h-1v-3h-1v-1h-1v1h-1v-1h-1v1h-1v-1h-9v1h-2v-1h-12v5h-1v-5h-1v1h-1v-1h-1v1h-1v1h-2v-2h-3v1h-1v-1h-1v1h-1v-1h-2v1h-5v-1h-5v1h-2v-1h-4v1h-1v-1h-1v2h-1v-1h-1v-1h-5v1h-1v-1h-1v1h-1v-1h-1v1h-2v-1h-6v1h-1v-1h-8v2h-2v-1h-1v-1h-2v1h-1v-1h-5v5h-1v-4h-1v-1h-2v1h-1v-1h-8v1h-4v-1h-2v1h-1v2h-1v-2h-2v-1h-2v1h-1v-1h-6v1h-2v-1h-1v1h-2v-1h-10v1h-1v-1h-1v1h-1v1h-2v-1h-2v-1h-6v1h-1v-1h-1v2h-1v-1h-2v1h-2v-1h-1v-1h-2v1h-1v-1h-2v1h-1v-1h-7v1h-1v-1h-2v1h-1v-1h-1v1h-5v1h-1v-1h-3v-1h-3v1h-1v1h-4v-2h-1v1h-1v-1h-18v1h-1v-1h-11v1h-1v-1h-1v1h-1v-1h-1v1h-3v-1h-2v1h-3v-1h-15v1h-1v-1h-6v1h-1v-1h-2v1h-1v-1h-1v1h-3v-1h-4v1h-1v-1h-1v2h-3v-2h-5v1h-1v-1h-4v1h-1v-1h-3v1h-1v1h-1v-1h-1v1h-1v-1h-2v-1h-2v1h-2v-1h-2v1h-1v-1h-1v5h-1v-5h-4v1h-1v-1h-7v1h-1v3h-1v-4h-12v1h-1v1h-1v-1h-1v1h-1v-1h-2v-1h-5v1h-2v-1h-1v1h-2v-1h-1v1h-1v-1h-1v1h-2v-1h-5v1h-1v-1h-2v1h-2v-1h-1v1h-8v-1h-2v1h-1v-1h-1v2h-1v-1h-1v-1h-9v1h-4v-1h-3v1h-2v-1h-2v1h-1v-1h-1v1h-3v-1h-2v1h-2v1h-1v-1h-1v-1h-5v1h-1v-1h-7v1h-1v-1h-4v2h-1v-1h-3v-1h-1v1h-1v1h-1v-1h-1v-1h-7v1h-1v-1h-1v1h-1v-1h-13v1h-1v-1h-1v1h-7v-1h-1v2h-3v-1h-1v-1h-4v1h-1v-1h-5v1h-1v-1h-4v1h-5v-1h-12v1h-2v-1h-1v1h-1v-1h-2v1h-1v-1h-1v1h-1v-1h-4v1h-2v-1h-1v1h-2v-1h-3v1h-2v-1h-7v1h-1v-1h-3v1h-1v-1h-8v1h-2v-1h-4v1h-3v-1h-5v1h-1v-1h-1v1h-8v1h-1v-1h-1v-1h-4v2h-1v-1h-3v-1h-2v1h-1v1h-3v-1h-1v-1h-2v1h-2v-1h-1v1h-1v-1h-4v1h-5v-1h-3v1h-1v-1h-5v1h-4v-1h-5v1h-1v-1h-1v1h-2v-1h-4v1h-2v-1h-4v1h-5v-1h-1v1h-1v1h-1v-1h-2v1h-1v-2h-4v1h-1v1h-1v-1h-2v-1h-5v1h-4v-1h-3v1h-5v-1h-3v1h-2v-1h-2v1h-2v-1h-10v1h-1v-1h-1v1h-1v-1h-1v1h-3v-1h-1v1h-1v-1h-1v1h-1v-1h-5v1h-1v2h-1v-3h-4v1h-1v-1h-3v1h-3v1h-1v-2h-3zM277 759h1v-1h1v1h5v-1h1v1h4v-1h2v1h4v-1h1v1h2v-1h1v1h2v-1h3v-1h1v2h3v-1h1v1h1v-1h3v-2h1v1h1v1h2v1h4v-1h2v-1h1v2h3v-1h3v-1h1v1h1v1h1v-1h1v1h5v-1h2v1h4v-1h4v1h1v-1h1v-1h3v2h3v-1h1v1h6v-1h1v1h10v-1h3v1h1v-1h1v-1h2v1h1v1h7v-2h1v1h3v1h1v-1h6v1h1v-2h1v2h3v-1h1v1h2v-1h1v1h8v-1h3v1h3v-2h1v1h3v1h6v-2h2v1h6v-1h1v1h1v1h1v-1h1v1h3v-1h1v1h9v-2h1v1h2v1h1v-1h2v1h3v-1h1v1h4v-1h3v-1h1v1h1v1h5v-1h4v1h2v-1h2v1h2v-1h1v1h1v-1h1v1h3v-1h3v1h14v-1h1v1h1v-1h2v1h2v-1h1v1h2v-2h1v2h4v-1h1v1h2v-1h1v1h1v-1h3v-1h1v-1h1v2h2v1h1v-1h2v1h4v-17h1v15h1v1h1v1h3v-1h3v1h2v-1h5v-1h1v2h6v-1h1v1h1v-1h1v1h1v-1h2v1h2v-1h1v1h2v-1h2v1h1v-1h2v1h3v-1h3v1h1v-1h4v1h3v-1h1v1h1v-2h1v1h5v1h1v-1h1v1h6v-1h1v-1h1v2h5v-1h1v1h3v-3h1v3h2v-1h1v1h6v-1h1v1h5v-1h1v1h1v-1h1v-1h1v1h3v-1h2v1h1v1h7v-1h1v1h14v-1h1v1h15v-1h1v-1h1v1h1v1h4v-1h3v1h4v-1h1v-1h1v2h1v-1h2v1h1v-1h2v-1h2v1h1v1h4v-1h1v1h1v-1h3v1h9v-1h1v1h2v-1h1v1h3v-2h2v-1h1v2h2v1h1v-1h2v1h3v-1h1v1h5v-1h2v1h6v-1h1v1h3v-1h2v1h1v-2h1v1h1v1h4v-1h1v1h5v-1h1v1h2v-1h2v1h5v-1h1v1h2v-1h2v-1h1v1h1v1h10v-1h1v1h3v-1h3v-1h3v1h1v-1h1v2h3v-1h3v-1h1v2h1v-1h2v1h7v-1h1v-1h1v2h1v-3h1v1h1v2h1v-1h1v1h5v-1h1v1h4v-1h1v-1h1v1h2v-1h6v2h1v-1h2v1h8v-1h1v1h2v-1h1v1h12v-1h2v1h3v-1h1v1h1v-1h1v1h4v-2h1v2h8v-1h1v1h2v-1h1v1h6v-2h2v1h1v1h6v-1h2v1h5v-1h4v1h2v-1h1v-2h1v3h1v-1h1v1h1v-1h1v1h2v-2h1v2h1v-2h1v2h15v-2h1v2h3v-1h1v1h1v-1h1v-1h1v2h4v-1h1v1h4v-1h1v1h1v-1h1v1h1v-1h2v1h4v-1h2v1h5v-1h2v1h4v-1h1v1h1v-1h2v1h2v-1h1v-1h1v1h3v1h6v-1h3v1h2v-1h1v-1h2v1h1v1h1v-1h1v1h1v-1h5v-1h1v1h1v1h10v-1h4v1h2v-1h2v1h1v-2h1v-1h1v1h2v1h1v1h1v-1h2v1h3v-1h1v1h1v-1h2v1h3v-1h1v1h6v-1h1v1h14v-1h1v1h1v-1h1v1h6v-1h1v1h2v-1h1v-1h3v1h4v1h1v-1h1v1h1v-1h3v-1h1v1h4v1h2v-1h1v1h5v-1h2v1h1v-1h1v1h4v-1h1v1h4v-1h1v1h1v-1h1v1h1v-1h1v1h1v-1h2v-1h3v1h2v1h7v-1h3v1h1v-1h2v-1h1v1h3v-1h1v1h1v-1h1v1h2v1h1v-1h1v1h4v-2h1v2h7v-1h1v-1h1v2h4v-1h1v1h3v-2h1v2h10v-1h1v1h3v-2h1v1h1v1h2v-1h1v1h6v-1h2v-1h1v1h1v1h2v-1h1v1h1v-1h2v1h4v-1h2v1h1v-1h1v1h2v-1h7v1h5v-1h1v1h4v-1h1v1h2v-1h2v1h4v-1h2v-1h1v1h2v1h2v-1h1v1h1v-1h2v-1h3v1h3v1h2v-1h1v1h4v-1h2v1h4v-1h1v1h5v-1h4v1h1v-1h2v1h4v-2h1v-1h1v2h1v1h1v-1h1v1h1v-1h1v-1h1v1h3v1h1v-1h1v1h2v-1h1v1h2v-1h2v1h1v-1h1v1h14v-1h1v1h1v-2h1v1h2v-1h1v1h2v1h11v-1h2v1h2v-1h2v5h-12v1h-1v-1h-1v1h-2v-1h-2v1h-1v-1h-1v1h-2v-1h-1v1h-1v-1h-5v2h-1v-2h-1v1h-6v-1h-4v1h-1v-1h-3v1h-1v-1h-1v1h-1v1h-2v-1h-3v-1h-4v1h-5v-1h-1v1h-4v-1h-1v2h-3v-1h-1v-1h-5v1h-2v-1h-6v1h-1v1h-1v-1h-1v1h-1v-2h-2v1h-1v-1h-2v1h-2v-1h-1v1h-1v-1h-6v1h-2v-1h-2v1h-1v-1h-2v1h-5v1h-2v-1h-1v-1h-1v1h-1v2h-1v-3h-4v1h-1v-1h-1v1h-2v-1h-3v1h-3v-1h-7v1h-1v-1h-4v1h-2v-1h-1v1h-1v-1h-4v1h-1v-1h-3v2h-1v-1h-3v-1h-1v1h-3v-1h-2v1h-1v-1h-7v1h-1v-1h-1v1h-2v-1h-2v1h-2v1h-1v1h-2v-1h-1v-1h-4v1h-2v-2h-1v2h-1v-1h-1v-1h-3v1h-1v-1h-2v1h-1v-1h-1v1h-1v1h-1v-1h-2v-1h-1v1h-1v-1h-6v1h-2v-1h-2v1h-1v-1h-3v1h-9v-1h-2v1h-2v1h-1v-1h-1v-1h-13v1h-1v-1h-1v1h-1v1h-1v-1h-1v2h-1v-1h-1v1h-1v-2h-1v-1h-2v1h-1v1h-1v-1h-2v-1h-1v1h-1v-1h-4v1h-1v-1h-1v1h-1v-1h-4v1h-4v-1h-3v1h-1v-1h-2v2h-1v-1h-1v-1h-1v1h-1v-1h-3v1h-2v-1h-1v1h-1v-1h-1v1h-3v-1h-1v1h-1v-1h-6v1h-1v-1h-5v1h-3v1h-1v-1h-1v-1h-4v1h-3v-1h-1v1h-1v-1h-1v1h-1v1h-1v-1h-1v-1h-2v1h-1v-1h-5v1h-1v-1h-1v1h-2v-1h-1v1h-2v-1h-2v1h-1v1h-5v-1h-3v-1h-6v2h-1v-2h-6v1h-3v1h-1v-1h-1v-1h-1v1h-1v-1h-3v1h-1v-1h-7v1h-2v-1h-5v2h-1v-1h-2v1h-2v-2h-1v1h-1v-1h-1v1h-2v1h-1v-1h-1v-1h-4v1h-2v-1h-1v1h-1v-1h-1v3h-1v-3h-2v1h-1v-1h-10v1h-2v-1h-1v1h-1v-1h-2v1h-1v-1h-6v2h-1v-1h-3v-1h-1v1h-1v-1h-1v1h-1v-1h-3v1h-4v1h-2v-2h-11v2h-1v-1h-1v-1h-1v2h-1v-2h-14v1h-1v1h-1v-2h-6v1h-1v-1h-3v1h-2v-1h-5v1h-1v-1h-1v1h-1v-1h-1v1h-3v-1h-1v1h-1v1h-1v-2h-2v1h-1v1h-1v-2h-4v1h-3v-1h-2v1h-1v-1h-1v1h-2v-1h-1v1h-1v-1h-4v2h-2v-2h-5v3h-1v-2h-1v-1h-2v1h-1v-1h-1v1h-1v-1h-4v1h-1v-1h-1v3h-1v-2h-3v-1h-3v1h-3v-1h-3v1h-2v-1h-2v1h-2v-1h-5v1h-5v1h-2v1h-1v-2h-1v2h-2v-1h-2v-1h-1v-1h-2v1h-1v1h-1v-1h-1v-1h-5v1h-1v-1h-1v1h-1v1h-1v-1h-3v-1h-2v1h-2v2h-1v-1h-2v-1h-1v1h-1v-1h-2v1h-1v-2h-4v1h-1v-1h-4v1h-1v-1h-2v1h-2v-1h-2v1h-2v-1h-1v1h-1v1h-1v-1h-1v-1h-1v1h-1v-1h-1v1h-5v-1h-1v1h-3v-1h-4v1h-2v1h-2v-1h-2v-1h-4v1h-1v1h-1v-1h-2v-1h-3v1h-1v-1h-9v1h-3v-1h-4v2h-1v-1h-1v-1h-2v1h-1v2h-1v-2h-2v-1h-7v1h-1v-1h-1v1h-3v-1h-1v1h-2v-1h-3v1h-2v-1h-3v1h-1v-1h-1v1h-1v-1h-1v1h-1v1h-1v-1h-1v1h-1v-2h-1v1h-1v-1h-2v1h-3v-1h-1v1h-1v-1h-4v1h-1v1h-1v-2h-2v1h-1v1h-1v-1h-1v-1h-5v2h-1v-2h-6v1h-1v1h-2v-1h-1v-1h-5v1h-1v-1h-4v1h-1v-1h-1v1h-2v-1h-2v1h-2v-1h-2v1h-2v-1h-6v1h-4v-1h-1v1h-1v-1h-5v1h-2v-1h-4v1h-2v-1h-1v1h-3v-1h-1v1h-1v-1h-5v1h-1v-1h-6v1h-3v14h-1v-15h-2v2h-1v-1h-3v-1h-11v1h-2v-1h-1v1h-2v-1h-2v1h-1v-1h-1v2h-2v-2h-1v1h-1v-1h-1v1h-2v-1h-1v1h-2v-1h-4v1h-1v-1h-1v1h-2v1h-1v-1h-1v-1h-3v1h-3v-1h-3v1h-1v1h-1v-2h-3v2h-1v-2h-12v1h-1v1h-1v-1h-3v-1h-9v1h-1v-1h-9v2h-1v-1h-1v-1h-7v1h-1v1h-1v-2h-2v1h-1v-1h-6v1h-1v-1h-5v1h-2v-1h-5v1h-1v-1h-4v1h-1v-1h-3v1h-2v-1h-4v1h-1v3h-1v-3h-2v-1h-10v1h-1v-1h-1v1h-1v-1h-3v1h-1v-1h-14v1h-1v-1h-5v1h-5v-1h-2v1h-2v-1h-1v1h-1v-1h-4v1h-1v-1h-1v1h-1v-1h-2v1h-1v-1h-1v1h-2v-1h-9v1h-3v-1h-1v1h-2v-1h-4v1h-1v-1h-1v1h-1v-1h-5v1h-1v1h-2v-2h-1v1h-1v-1h-4v1h-2v2h-1v-3h-5v1h-1v-1h-1v1h-3v1h-1v-1h-2v-1h-5v1h-1v-1h-3v1h-1zM277 790h1v-1h1v1h1v-1h1v1h5v-1h2v1h7v-1h1v1h6v-1h1v1h2v-1h1v1h2v-1h1v1h3v-1h2v-1h1v1h2v1h5v-1h5v-3h1v4h7v-1h1v-1h1v1h1v-1h2v1h4v1h1v-1h1v1h6v-1h5v1h3v-2h1v1h2v1h2v-1h1v1h6v-1h2v-1h1v1h1v1h3v-1h2v1h10v-1h3v1h2v-1h1v1h5v-1h1v1h5v-1h1v1h5v-1h1v1h3v-1h1v1h2v-1h4v1h3v-2h1v1h1v1h8v-1h3v1h18v-1h2v1h1v-1h1v-1h1v2h3v-1h1v1h2v-1h1v1h5v-2h1v1h1v1h3v-1h1v1h2v-1h2v1h5v-1h2v1h3v-1h1v-1h2v1h3v1h1v-1h2v1h2v-2h1v1h1v1h1v-2h1v2h3v-1h3v1h3v-1h2v-1h1v2h13v-1h3v1h9v-1h1v1h2v-1h3v-1h1v2h2v-1h5v1h1v-1h1v1h10v-2h1v1h3v1h2v-1h1v1h2v-1h3v1h4v-1h1v1h5v-1h2v1h1v-1h1v1h24v-2h1v2h4v-1h2v1h2v-4h1v4h2v-1h2v1h2v-1h1v1h1v-1h4v-1h1v1h1v1h2v-1h2v-1h1v1h2v1h2v-1h1v1h7v-1h1v-1h1v2h10v-1h5v1h2v-2h1v2h1v-2h1v1h4v1h2v-1h2v1h6v-1h2v1h2v-1h1v-1h1v1h1v1h4v-2h1v2h11v-1h1v1h1v-1h1v1h6v-1h1v1h8v-1h1v1h2v-1h2v1h2v-1h1v1h1v-1h2v1h8v-1h2v1h2v-1h1v1h2v-1h1v1h1v-1h3v-1h2v1h2v-1h1v1h2v-1h3v1h3v-1h1v2h6v-1h1v1h7v-1h1v1h4v-1h1v1h1v-1h1v-1h1v1h1v1h2v-2h1v2h4v-1h1v1h5v-1h4v1h2v-1h1v1h3v-1h1v1h3v-1h1v1h5v-2h2v1h1v1h5v-2h2v1h2v-3h1v2h2v2h1v-1h1v1h3v-1h1v1h5v-1h2v1h1v-1h1v-1h1v1h2v1h3v-1h4v-1h2v2h1v-1h1v1h3v-1h1v-1h1v-1h1v2h1v1h1v-1h2v1h3v-1h6v1h11v-1h2v1h7v-1h2v1h2v-1h1v1h3v-1h1v-1h1v1h1v-2h1v3h2v-1h1v1h1v-1h1v1h2v-1h4v-2h1v1h1v2h1v-1h1v1h2v-1h1v1h5v-1h2v1h1v-1h1v1h10v-1h1v-1h1v1h1v-2h1v1h1v1h2v1h5v-1h2v1h3v-2h1v1h1v-2h1v2h1v1h2v-2h1v1h2v1h3v-1h3v1h2v-1h5v-1h1v1h2v1h5v-1h1v1h6v-1h2v1h1v-2h2v1h1v1h3v-1h1v-1h1v1h1v1h1v-2h3v1h2v1h2v-1h1v-2h1v1h1v1h1v-2h1v2h3v1h12v-1h1v1h3v-1h1v1h4v-2h1v1h2v1h2v-1h4v1h4v-1h1v1h3v-1h1v1h13v-1h3v1h4v-1h2v1h3v-1h1v1h1v-1h1v-1h1v1h1v-1h2v-1h1v1h1v1h1v-1h1v2h3v-2h1v2h5v-1h1v1h1v-2h1v1h2v1h4v-2h1v1h1v1h5v-1h2v1h8v-1h9v1h2v-1h3v1h9v-1h1v1h1v-1h2v1h1v-5h1v4h1v1h3v-1h4v1h3v-1h2v1h3v-1h1v1h2v-1h3v-2h1v2h2v-1h1v1h3v1h4v-1h3v1h2v-1h3v1h4v-1h3v1h2v-1h1v1h2v-1h1v1h1v-1h1v1h1v-1h1v1h6v-1h2v1h4v-1h1v1h3v-1h1v1h2v-1h1v1h1v-2h1v2h1v-1h4v-1h1v2h1v-2h1v2h1v-1h2v1h5v-1h2v-1h1v1h2v1h7v-2h1v2h4v-1h1v1h1v-2h1v2h2v-1h1v1h2v-1h1v1h1v-1h1v1h4v-1h1v-1h1v1h1v1h1v-1h2v-1h1v1h1v-1h1v2h3v-1h2v1h10v-1h4v1h1v-1h1v-1h1v1h1v1h3v-1h2v-1h1v2h1v-1h1v-1h1v2h5v-1h1v1h3v-1h1v1h6v-1h1v1h1v-1h2v1h3v-1h4v1h4v-1h2v1h1v-1h2v5h-2v1h-2v-1h-2v2h-1v-2h-3v1h-2v-1h-6v1h-1v1h-1v-1h-1v-1h-3v1h-3v-1h-5v1h-1v-1h-7v1h-2v-1h-1v1h-2v-1h-3v1h-2v-1h-4v1h-3v-1h-1v2h-1v-2h-4v1h-1v-1h-1v2h-1v-2h-2v1h-2v1h-1v-2h-1v2h-1v-2h-1v2h-1v-2h-3v1h-2v-1h-3v1h-2v-1h-4v1h-1v-1h-2v1h-4v1h-2v-1h-1v-1h-2v1h-1v-1h-1v1h-1v1h-1v-2h-1v1h-2v-1h-2v1h-2v-1h-7v1h-1v-1h-2v1h-1v1h-1v-1h-2v-1h-5v1h-1v-1h-1v1h-1v1h-3v-2h-1v1h-1v4h-1v-5h-4v1h-1v-1h-1v1h-1v-1h-1v1h-2v-1h-6v1h-1v-1h-1v1h-1v-1h-1v1h-4v1h-1v-2h-5v1h-6v-1h-13v1h-1v-1h-11v1h-3v-1h-1v1h-2v-1h-1v1h-1v-1h-1v1h-1v-1h-1v1h-2v-1h-1v1h-2v-1h-8v1h-1v-1h-1v1h-1v-1h-1v1h-3v-1h-16v1h-3v-1h-1v1h-5v-1h-11v1h-1v-1h-2v1h-1v-1h-2v5h-1v-5h-10v1h-1v-1h-4v1h-1v-1h-4v1h-1v-1h-1v1h-1v-1h-5v1h-1v-1h-2v1h-3v-1h-4v1h-1v1h-1v-1h-1v-1h-6v1h-1v-1h-2v1h-2v-1h-5v1h-1v1h-1v-1h-1v-1h-3v1h-1v1h-1v-1h-1v-1h-6v3h-1v-2h-1v-1h-3v1h-3v-1h-6v1h-2v1h-1v-1h-1v-1h-3v1h-5v-1h-3v1h-1v-1h-3v1h-1v-1h-4v1h-3v-1h-1v1h-1v-1h-2v1h-2v-1h-1v1h-1v-1h-8v1h-1v-1h-4v1h-1v1h-1v-1h-1v-1h-13v1h-2v-1h-2v1h-4v-1h-1v2h-1v-2h-2v1h-1v-1h-4v2h-1v-1h-2v-1h-3v1h-3v1h-1v-2h-3v1h-1v1h-2v-2h-3v2h-1v-1h-1v-1h-5v1h-1v-1h-8v1h-1v-1h-2v1h-3v1h-2v-1h-2v-1h-2v1h-1v-1h-13v1h-1v-1h-6v1h-2v-1h-1v2h-2v-1h-1v-1h-9v1h-3v-1h-1v1h-4v-1h-5v1h-1v-1h-1v1h-2v-1h-2v2h-2v-2h-5v1h-1v-1h-1v1h-1v-1h-2v1h-1v-1h-1v1h-2v1h-1v-1h-1v-1h-1v1h-1v-1h-3v1h-2v1h-4v-1h-1v1h-1v-1h-2v-1h-6v1h-1v-1h-1v1h-1v-1h-2v1h-3v-1h-2v1h-2v-1h-1v1h-3v1h-1v-1h-1v-1h-2v1h-1v-1h-1v1h-3v-1h-1v2h-2v-2h-3v1h-1v3h-1v-4h-8v1h-3v1h-1v-1h-4v-1h-1v2h-1v-1h-1v-1h-3v1h-1v-1h-1v2h-1v-1h-6v-1h-2v1h-2v-1h-2v1h-3v1h-1v-2h-3v1h-4v-1h-3v1h-3v1h-3v-1h-2v-1h-2v1h-2v1h-1v-2h-2v4h-1v-4h-7v2h-1v-1h-1v-1h-5v1h-2v-1h-1v1h-2v1h-1v-1h-2v-1h-6v2h-1v-2h-1v2h-3v-2h-1v1h-10v-1h-3v1h-2v-1h-1v1h-1v-1h-11v1h-1v-1h-1v1h-2v1h-1v-2h-1v1h-1v-1h-10v1h-1v-1h-6v1h-3v-1h-1v1h-1v-1h-2v1h-1v3h-1v-3h-1v-1h-1v1h-1v1h-1v-1h-3v-1h-10v1h-1v-1h-1v1h-1v-1h-2v1h-3v-1h-2v1h-1v-1h-2v1h-1v-1h-1v1h-1v-1h-1v1h-2v-1h-2v1h-4v-1h-1v1h-2v-1h-4v1h-4v-1h-4v1h-1v-1h-6v1h-1v-1h-3v1h-2v1h-1v-2h-2v1h-1v-1h-3v1h-3v-1h-4v1h-2v-1h-4v1h-1v-1h-7v2h-1v-1h-3v-1h-3v1h-3v2h-1v-1h-1v-1h-1v-1h-5v1h-1v1h-1v-1h-1v-1h-8v1h-3v-1h-4v1h-3v-1h-3v1h-1v-1h-1v1h-1v1h-1v-1h-1v-1h-24v1h-1v-1h-1v1h-3v-1h-1v1h-1v-1h-2v1h-2v-1h-1v1h-3v-1h-1v1h-1v-1h-8v1h-1v-1h-6v1h-3v-1h-2v1h-1v1h-1v-1h-1v-1h-1v1h-1v-1h-2v4h-1v-4h-3v1h-5v-1h-6v1h-1v-1h-1v1h-3v-1h-4v1h-1v-1h-5v1h-4v-1h-1v1h-1v-1h-2v1h-2v-1h-3v1h-1v-1h-5v1h-3v-1h-1v1h-1v-1h-1v1h-1v1h-1v-1h-3v1h-1v-1h-3v1h-2v-2h-1v1h-6v-1h-2v1h-6v-1h-2v3h-1v-2h-1v-1h-2v2h-1v-1h-1v-1h-2v2h-2v-1h-4v-1h-3v1h-1v-1h-8v1h-1v-1h-9v1h-3v-1h-1v1h-2v-1h-6v1h-2v-1h-1zM277 820h1v-1h1v1h16v-1h3v-1h1v1h2v1h3v-1h1v1h3v-1h3v1h1v-1h1v1h5v-1h2v-1h1v1h1v1h4v-1h2v1h2v-1h1v1h4v-1h1v1h8v-1h1v1h2v-1h1v1h5v-1h2v1h8v-1h1v-1h1v1h1v-1h2v2h2v-1h4v1h7v-1h1v1h1v-1h1v-1h1v2h3v-1h5v1h1v-1h2v1h3v-1h3v1h1v-1h1v1h5v-1h1v1h1v-1h3v1h5v-1h1v1h2v-1h1v1h7v-1h3v1h4v-1h1v1h1v-1h1v-1h1v1h1v1h1v-1h1v-1h1v2h2v-1h1v1h3v-1h1v1h5v-1h1v1h6v-1h4v1h1v-1h1v1h1v-1h1v-1h1v2h1v-1h1v1h4v-2h1v2h1v-1h2v1h3v-1h1v1h1v-1h1v-1h1v1h1v1h1v-1h1v1h3v-2h2v2h1v-1h1v1h1v-1h1v-1h1v1h1v1h3v-1h1v1h6v-1h1v1h1v-1h1v1h5v-2h1v1h2v-1h1v1h3v1h7v-1h1v1h3v-1h3v1h5v-1h2v1h4v-1h1v1h6v-2h1v2h2v-1h1v1h1v-1h1v1h2v-1h1v1h1v-1h1v-1h3v2h1v-1h1v1h7v-1h1v1h3v-2h1v1h3v-1h1v1h1v1h3v-1h2v-1h1v2h1v-1h3v1h3v-1h3v1h2v-1h2v-1h1v1h1v-1h1v1h2v1h3v-1h1v1h1v-1h1v-1h1v2h1v-1h1v1h9v-1h3v1h2v-1h1v1h9v-1h1v1h2v-1h2v1h3v-1h1v1h1v-1h2v1h5v-1h2v1h5v-1h1v1h5v-1h1v1h4v-1h2v1h8v-2h1v1h1v1h2v-1h2v-1h1v1h1v1h1v-1h1v-1h1v1h1v1h2v-1h1v1h6v-1h2v1h1v-1h2v1h1v-1h3v1h10v-1h1v1h1v-1h1v-1h1v1h3v1h1v-1h7v1h1v-1h3v1h6v-1h1v1h5v-2h1v2h7v-1h1v1h4v-1h3v1h1v-1h1v1h2v-1h1v1h9v-1h1v1h5v-2h1v-1h1v3h2v-1h1v-1h1v2h2v-1h1v1h5v-1h1v1h1v-1h1v1h1v-1h1v1h2v-1h1v1h2v-1h2v1h1v-1h1v1h1v-1h2v1h13v-1h3v1h1v-1h1v1h3v-2h1v1h2v1h1v-1h1v-1h1v1h2v-4h1v5h1v-1h2v-1h1v2h1v-2h1v2h1v-1h2v1h2v-1h2v1h1v-1h5v1h2v-1h1v1h3v-1h1v1h2v-1h1v1h1v-1h3v-1h1v1h2v-1h2v2h2v-4h1v4h1v-1h2v-1h1v2h1v-1h3v1h1v-1h1v1h15v-1h2v1h1v-1h1v1h1v-1h1v1h1v-1h1v1h1v-1h1v1h1v-2h1v1h1v1h2v-1h2v1h1v-1h1v1h2v-1h2v-1h2v1h1v1h1v-1h3v1h2v-1h1v1h5v-1h4v1h1v-1h1v1h2v-1h1v1h1v-1h1v1h1v-1h1v1h11v-1h3v1h7v-1h1v1h1v-1h1v1h1v-1h3v1h14v-1h3v1h1v-1h1v1h6v-1h1v1h1v-2h1v1h2v-2h1v2h3v1h18v-1h1v1h7v-1h2v-1h2v1h3v-1h3v1h2v1h3v-1h1v1h1v-1h2v1h2v-2h1v2h4v-4h1v4h1v-1h1v1h1v-1h2v1h9v-2h1v1h2v1h6v-1h5v1h5v-1h1v1h2v-1h1v1h4v-1h1v-1h2v1h1v1h2v-1h1v1h1v-2h1v1h4v1h1v-1h1v1h11v-1h1v1h3v-3h1v1h2v1h1v1h5v-1h2v1h2v-1h1v1h1v-1h2v1h1v-1h1v1h12v-1h3v-1h1v1h1v1h2v-1h2v1h15v-1h1v1h5v-1h1v1h1v-1h1v1h3v-1h1v1h1v-1h1v1h3v-1h1v1h4v-1h1v1h6v-1h1v1h3v-1h1v1h1v-1h1v-1h1v1h2v1h3v-1h2v1h1v-1h2v1h3v-1h1v1h7v-1h1v1h3v-1h4v1h12v-2h3v1h1v1h5v-1h1v-1h1v1h1v1h4v-1h1v1h3v-1h1v1h4v-2h1v2h1v-1h1v1h2v-2h1v1h1v-1h1v1h2v1h12v-1h1v1h4v-1h1v1h3v-1h1v-2h1v-2h2v-1h1v3h1v2h2v-1h1v2h11v-1h3v1h3v-2h1v1h1v1h4v-1h1v1h2v-1h1v1h8v4h-1v1h-4v-1h-6v1h-3v-1h-5v1h-1v-1h-1v2h-1v-2h-7v1h-1v-1h-1v1h-3v-1h-2v2h-1v1h-1v-1h-1v3h-1v-1h-1v-2h-2v-1h-2v-1h-1v1h-1v-1h-3v1h-2v-1h-2v2h-1v-1h-2v-1h-2v1h-1v1h-1v-1h-1v-1h-5v1h-4v-1h-2v1h-1v-1h-1v1h-1v1h-2v-1h-3v-1h-3v1h-4v-1h-3v1h-1v1h-1v-1h-1v-1h-8v1h-1v1h-1v-1h-1v1h-1v-2h-8v1h-1v-1h-2v1h-1v-1h-1v1h-1v-1h-4v1h-3v-1h-3v1h-1v-1h-3v1h-2v-1h-2v2h-1v-1h-1v-1h-1v1h-2v-1h-3v1h-4v-1h-2v1h-1v-1h-1v2h-1v-1h-1v-1h-1v1h-1v-1h-1v1h-2v-1h-7v1h-1v-1h-1v1h-1v-1h-3v1h-1v-1h-5v2h-2v-1h-1v-1h-3v1h-2v-1h-3v1h-1v-1h-9v1h-1v-1h-1v1h-3v1h-1v-1h-1v-1h-13v1h-1v-1h-4v1h-1v-1h-1v1h-1v-1h-6v1h-3v-1h-1v1h-3v-1h-7v1h-6v-1h-3v2h-1v-1h-2v-1h-1v1h-3v-1h-3v1h-2v-1h-5v2h-1v-1h-1v-1h-1v1h-1v-1h-4v1h-4v-1h-3v1h-4v-1h-7v1h-4v-1h-2v1h-2v-1h-7v1h-2v-1h-4v1h-4v-1h-2v1h-1v-1h-2v1h-1v-1h-5v1h-2v-1h-1v1h-3v-1h-3v1h-5v1h-1v-1h-2v-1h-1v2h-2v-1h-1v-1h-13v1h-1v1h-1v-1h-1v-1h-19v1h-1v-1h-5v2h-1v-1h-2v-1h-3v1h-2v-1h-2v1h-2v-1h-2v1h-1v-1h-4v1h-1v-1h-1v1h-3v-1h-2v1h-3v-1h-2v1h-1v-1h-9v1h-1v-1h-7v1h-2v-1h-4v1h-1v-1h-5v1h-2v1h-1v-1h-1v1h-1v-1h-1v-1h-20v1h-1v-1h-4v2h-1v-1h-1v1h-1v-1h-3v-1h-4v2h-1v-1h-1v2h-1v-3h-4v1h-1v-1h-1v1h-2v-1h-1v1h-2v-1h-4v1h-1v-1h-2v1h-1v-1h-4v1h-1v1h-1v-2h-1v1h-1v-1h-1v1h-1v1h-1v-1h-1v-1h-1v1h-1v-1h-1v1h-1v-1h-11v1h-3v-1h-12v1h-2v2h-1v-3h-1v1h-2v1h-1v-1h-1v-1h-8v1h-1v-1h-1v1h-3v-1h-6v1h-1v-1h-1v2h-1v-2h-11v1h-1v-1h-3v1h-1v-1h-1v1h-2v-1h-2v1h-1v-1h-1v1h-1v-1h-1v1h-1v-1h-15v1h-2v-1h-5v1h-2v-1h-2v1h-1v-1h-10v1h-1v-1h-1v1h-1v1h-1v-1h-1v1h-1v-1h-2v-1h-1v1h-1v-1h-4v1h-1v-1h-1v2h-1v-1h-1v-1h-2v1h-1v1h-1v-2h-1v1h-1v-1h-2v1h-1v-1h-5v2h-2v-1h-1v1h-2v-1h-1v-1h-1v2h-1v-1h-1v1h-1v-2h-5v1h-4v-1h-9v1h-3v-1h-1v1h-1v-1h-2v1h-1v-1h-2v1h-1v-1h-1v1h-1v-1h-2v1h-1v-1h-6v2h-1v-2h-2v1h-1v-1h-12v1h-1v-1h-8v1h-1v-1h-5v1h-1v-1h-4v1h-1v2h-1v-3h-4v1h-1v1h-3v-1h-1v2h-1v-1h-2v-2h-2v1h-5v-1h-9v1h-2v-1h-2v1h-3v-1h-2v1h-2v1h-1v-1h-1v-1h-6v1h-5v-1h-4v1h-2v-1h-3v1h-5v-1h-1v1h-6v-1h-33v1h-1v1h-1v-1h-1v1h-1v-1h-1v-1h-3v1h-1v-1h-2v1h-4v-1h-1v1h-1v-1h-2v1h-1v-1h-2v2h-1v-1h-3v-1h-1v1h-1v-1h-4v1h-2v-1h-4v1h-2v-1h-4v1h-1v-1h-1v1h-1v-1h-3v1h-1v-1h-1v1h-3v-1h-7v1h-1v-1h-2v1h-6v-1h-8v2h-1v-1h-1v-1h-1v1h-1v-1h-1v1h-2v-1h-1v1h-2v-1h-2v1h-2v-1h-1v2h-1v-1h-1v-1h-3v1h-1v-1h-1v1h-7v-1h-4v1h-1v-1h-1v1h-1v-1h-3v1h-2v-1h-3v1h-4v-1h-10v1h-1v1h-1v-2h-1v1h-1v-1h-1v2h-1v1h-1v-1h-3v-2h-4v1h-4v1h-1v-1h-1v-1h-1v1h-3v-1h-5v1h-1v-1h-1v1h-1v-1h-4v1h-1v-1h-1v1h-1v-1h-1v1h-8v-1h-2v1h-3v-1h-1v1h-1v-1h-1v1h-3v-1h-1v1h-3v1h-1v-1h-1v-1h-3v1h-1v1h-1v-1h-1v-1h-1v2h-2v-1h-2v-1h-5v1h-2v-1h-1v1h-3v-1h-1v1h-1v-1h-2v1h-1v-1h-4v2h-1v-1h-3v-1h-1v1h-2v-1h-1zM277 849h2v1h5v-1h2v1h3v-1h1v-1h1v1h1v1h2v-1h2v1h4v-1h1v1h1v-1h1v-1h1v2h2v-1h1v1h5v-1h2v1h5v-1h1v1h2v-2h1v2h1v-1h2v1h1v-1h1v1h6v-1h1v1h2v-1h3v1h1v-1h1v1h6v-1h5v-1h1v1h4v1h1v-1h3v1h6v-1h1v1h11v-1h1v1h3v-2h1v1h1v1h1v-1h1v1h1v-1h1v1h3v-2h1v1h2v1h6v-5h1v5h5v-4h1v4h1v-1h1v1h1v-2h2v1h3v1h1v-1h1v1h1v-1h1v1h1v-1h2v1h6v-1h2v1h5v-1h2v1h3v-1h2v1h6v-1h3v1h1v-1h1v1h1v-1h1v1h2v-1h2v1h5v-1h2v1h4v-1h1v1h1v-1h1v1h3v-1h3v1h2v-1h2v1h1v-1h1v-1h1v1h6v1h10v-1h1v1h1v-1h1v-1h1v2h3v-1h2v-1h1v2h2v-1h2v1h1v-1h2v1h3v-1h3v1h1v-1h1v-1h1v1h1v1h1v-1h1v1h2v-1h2v-2h1v2h1v1h2v-1h1v1h8v-1h1v-1h1v1h1v1h13v-1h3v1h1v-2h1v1h1v1h1v-1h1v-1h1v1h1v1h3v-1h1v-1h1v-3h1v4h1v-1h3v1h1v1h2v-1h1v1h1v-1h1v1h3v-1h1v1h2v-1h1v1h2v-1h1v1h12v-1h1v1h1v-1h4v1h4v-1h3v1h11v-1h2v-1h1v1h2v1h8v-1h2v1h5v-1h2v1h4v-2h1v1h1v1h1v-2h1v2h4v-1h1v1h7v-1h1v1h20v-1h2v1h1v-1h1v1h1v-2h1v2h2v-1h1v1h3v-1h1v1h1v-1h2v1h1v-1h2v-1h1v2h1v-1h1v1h3v-1h1v-1h1v2h2v-1h2v1h7v-1h1v1h1v-1h2v1h2v-1h1v1h3v-1h6v1h2v-1h2v1h1v-1h2v1h6v-1h3v-2h1v2h1v1h1v-2h1v1h1v1h2v-1h3v1h1v-1h1v1h4v-1h1v1h4v-2h1v1h2v1h1v-1h3v-1h1v1h3v1h1v-1h1v1h2v-1h1v1h1v-1h1v1h1v-1h4v1h2v-2h1v1h2v1h6v-2h1v2h3v-1h1v1h2v-1h1v-1h1v1h1v-1h1v1h1v1h4v-1h1v1h3v-1h1v-1h1v1h1v1h1v-1h2v1h3v-2h1v2h1v-1h1v1h2v-1h1v1h1v-1h2v1h2v-1h2v1h1v-1h1v1h1v-1h2v1h6v-1h1v1h1v-1h3v1h1v-1h2v1h2v-1h1v1h2v-1h1v1h3v-1h1v1h1v-2h1v1h1v-1h3v1h1v1h1v-1h1v1h5v-1h2v1h2v-1h2v1h3v-1h3v1h3v-1h1v1h1v-1h1v1h2v-1h3v1h1v-2h1v1h1v-1h1v2h2v-1h1v-1h1v1h1v-1h1v2h1v-1h2v1h1v-2h2v2h4v-1h2v1h6v-1h1v-1h1v1h6v1h4v-1h1v1h5v-1h1v1h2v-1h1v1h1v-1h1v1h2v-5h1v5h5v-1h3v1h5v-1h1v1h7v-1h2v-1h1v1h1v1h1v-1h1v-1h1v1h4v1h1v-1h2v1h9v-1h2v1h1v-1h1v1h4v-1h1v-1h1v1h1v1h1v-2h1v1h2v1h1v-1h1v1h2v-1h1v1h3v-1h1v1h2v-1h1v1h1v-1h1v1h2v-2h2v2h1v-1h2v1h1v-2h1v2h5v-1h2v1h5v-1h2v-1h1v1h2v1h2v-1h1v1h7v-1h1v1h11v-2h3v2h3v-1h1v-1h1v1h2v1h2v-1h1v1h1v-2h1v2h1v-1h1v-1h1v1h3v1h16v-2h2v1h1v1h1v-1h2v1h4v-1h3v1h1v-1h1v1h4v-1h1v1h6v-1h1v1h2v-1h5v1h1v-1h2v1h1v-1h1v-1h1v2h1v-1h1v1h10v-1h5v1h8v-1h3v1h1v-1h1v1h5v-2h1v2h7v-1h2v1h2v-1h1v-1h1v1h1v-1h1v1h4v1h9v-1h1v1h3v-1h1v1h1v-2h2v2h3v-1h1v1h10v-1h1v1h3v-1h2v1h1v-1h1v1h7v-1h5v1h1v-2h1v1h2v1h1v-1h2v1h1v-1h3v1h2v-1h1v-1h2v1h1v1h7v-2h1v1h1v-1h1v1h1v-1h1v1h2v1h1v-1h3v-2h1v2h1v-1h2v1h2v1h7v-1h6v-1h1v2h1v-1h1v-2h1v1h1v1h1v1h1v-5h1v5h2v-1h1v1h1v-1h1v1h5v-1h1v1h2v-1h2v1h5v-1h1v1h3v-1h1v1h2v-1h1v1h1v-1h1v1h4v-1h2v1h4v-1h4v1h3v5h-3v1h-1v-1h-1v-1h-1v1h-1v-1h-5v1h-1v-1h-1v1h-3v-1h-6v1h-1v-1h-1v1h-2v2h-1v-1h-1v-2h-1v1h-1v1h-1v-1h-3v-1h-1v1h-1v-1h-2v1h-1v-1h-4v1h-1v1h-1v-2h-1v1h-3v-1h-1v1h-1v-1h-5v1h-1v-1h-4v1h-3v-1h-6v1h-1v-1h-7v1h-2v-1h-13v1h-1v-1h-4v1h-1v-1h-4v1h-2v-1h-4v1h-1v-1h-6v1h-3v-1h-6v1h-1v-1h-1v1h-1v-1h-1v1h-1v1h-1v-2h-9v1h-1v-1h-1v1h-1v1h-1v-1h-1v-1h-2v1h-2v-1h-3v1h-1v3h-1v-3h-1v-1h-2v1h-4v-1h-1v1h-1v1h-1v-1h-1v-1h-15v1h-3v-1h-5v1h-1v1h-1v-1h-1v-1h-5v2h-1v-1h-1v-1h-1v1h-1v-1h-1v1h-1v1h-1v-2h-3v1h-1v-1h-6v1h-3v-1h-2v1h-2v-1h-2v1h-1v-1h-4v1h-1v-1h-2v1h-1v-1h-14v1h-1v-1h-1v2h-1v-1h-1v-1h-1v1h-1v-1h-7v1h-1v1h-1v-1h-3v1h-1v-1h-1v1h-1v1h-1v-1h-2v-1h-6v1h-2v-1h-1v-1h-2v1h-2v-1h-3v1h-3v1h-1v-1h-1v-1h-1v1h-1v-1h-1v1h-4v-1h-2v1h-2v-1h-17v1h-1v1h-1v-2h-6v1h-2v-1h-1v1h-1v-1h-3v1h-2v-1h-5v1h-1v-1h-1v1h-1v1h-1v-2h-7v1h-2v-1h-1v1h-1v-1h-10v1h-1v-1h-15v1h-5v-1h-5v1h-1v-1h-1v1h-1v-1h-1v1h-1v-1h-2v2h-1v-1h-2v-1h-3v1h-1v-1h-1v2h-2v-1h-2v-1h-4v1h-1v-1h-4v1h-2v-1h-3v1h-1v-1h-3v1h-1v1h-1v-1h-1v-1h-1v1h-1v-1h-4v1h-3v-1h-12v1h-1v-1h-1v1h-1v-1h-2v1h-1v-1h-16v1h-5v-1h-3v1h-1v-1h-3v1h-1v-1h-7v1h-1v1h-1v-1h-2v-1h-1v1h-1v3h-1v-3h-3v2h-1v-2h-1v-1h-5v2h-1v-2h-1v1h-5v-1h-9v1h-2v1h-1v-2h-5v1h-1v1h-1v-2h-3v1h-1v-1h-2v1h-1v1h-1v-1h-1v-1h-2v1h-1v-1h-1v1h-2v-1h-3v2h-1v-2h-4v1h-1v-1h-2v1h-1v-1h-1v1h-1v-1h-7v1h-2v1h-1v-2h-3v1h-1v-1h-3v4h-1v-2h-2v-2h-1v1h-2v1h-1v-2h-5v1h-1v-1h-2v2h-2v-1h-1v-1h-2v2h-1v-2h-2v1h-1v-1h-1v1h-1v-1h-2v1h-1v-1h-6v2h-1v-1h-3v-1h-5v1h-1v-1h-3v1h-1v-1h-2v1h-1v1h-1v-1h-3v1h-1v-1h-2v1h-2v-2h-8v1h-1v-1h-1v1h-2v-1h-3v1h-1v-1h-1v1h-1v-1h-3v1h-1v-1h-1v1h-1v-1h-3v1h-2v-1h-1v1h-1v-1h-2v1h-2v1h-1v-1h-1v-1h-3v1h-1v-1h-1v1h-3v-1h-2v1h-3v-1h-1v2h-1v-1h-2v-1h-5v1h-4v-1h-6v1h-2v-1h-1v1h-2v-1h-6v1h-1v-1h-1v1h-1v1h-2v-2h-3v1h-2v-1h-3v1h-4v-1h-8v1h-1v-1h-8v1h-4v-1h-5v1h-2v-1h-2v2h-1v-2h-4v1h-1v-1h-7v1h-3v-1h-1v1h-8v-1h-1v1h-2v-1h-1v1h-1v-1h-1v1h-1v-1h-5v1h-1v-1h-1v2h-2v-1h-3v-1h-5v1h-1v-1h-1v1h-2v-1h-1v1h-1v-1h-4v1h-2v-1h-1v1h-4v1h-3v-1h-6v-1h-4v1h-1v-1h-3v1h-2v1h-1v-1h-2v-1h-1v1h-2v-1h-1v1h-7v1h-1v-2h-5v1h-1v-1h-2v1h-2v1h-1v-1h-7v-1h-1v1h-1v-1h-5v1h-2v-1h-2v1h-4v-1h-1v1h-3v-1h-3v1h-1v-1h-1v1h-2v-1h-3v1h-1v-1h-1v1h-1v-1h-3v1h-2v-1h-5v1h-1v1h-1v-1h-1v-1h-3v1h-1v-1h-5v1h-1v-1h-2v1h-4v-1h-3v1h-2v-1h-1v1h-1v-1h-2v1h-2v-1h-6v1h-2v-1h-7v1h-1v1h-1v-2h-1v1h-2v-1h-1v2h-1v-1h-1v-1h-2v2h-1v-2h-2v1h-2v1h-2v-2h-1v1h-2v-1h-3v1h-1v-1h-3v1h-6v-1h-6v1h-1v-1h-2v1h-2v-1h-2v1h-4v1h-1v-1h-1v-1h-8v1h-1v-1h-1v1h-1v-1h-7v1h-1v-1h-2v1h-2v-1h-2v1h-1v1h-1v-1h-1v1h-1v-1h-1v-1h-2v1h-1v-1h-2v1h-1v-1h-5v1h-2v-1h-1v1h-2v1h-1v-1h-1v-1h-4v1h-3v1h-1v-2h-1v1h-4v-1h-6v2h-1v-2h-3v1h-3v1h-1v-2h-4v1h-1v-1h-8v1h-1v-1h-7zM277 881h3v-1h1v1h2v-1h1v1h1v-1h1v1h5v-1h1v1h2v-1h1v-1h1v1h1v1h1v-1h1v-1h1v2h13v-1h1v1h2v-1h1v1h3v-1h1v1h2v-1h1v-1h3v1h2v1h4v-1h1v1h4v-2h1v1h1v1h1v-1h1v1h1v-1h1v1h1v-1h3v1h1v-1h1v-1h1v1h1v1h6v-1h3v1h1v-1h2v1h2v-1h1v1h13v-2h1v2h11v-1h1v1h9v-1h1v1h3v-1h4v1h2v-1h4v1h1v-1h2v1h2v-1h2v1h20v-1h1v1h1v-1h1v1h2v-1h1v-1h1v1h1v1h2v-1h1v-2h1v-1h1v4h1v-2h1v1h2v-9h1v9h1v1h1v-1h2v1h5v-1h4v1h2v-1h2v-1h2v1h2v-1h1v1h3v1h3v-1h2v1h1v-1h2v1h1v-1h1v1h1v-1h3v1h1v-1h4v1h1v-1h2v1h3v-1h1v1h1v-1h2v1h8v-1h2v1h1v-1h1v1h11v-1h3v1h5v-1h1v1h3v-1h3v1h3v-1h4v1h4v-1h3v1h5v-1h1v1h3v-1h4v1h1v-2h2v1h2v-1h1v1h1v1h2v-1h2v-1h1v2h1v-1h1v1h8v-1h1v-1h1v2h1v-1h2v1h3v-1h1v-1h1v1h1v1h3v-1h3v1h1v-16h1v16h3v-1h2v-2h1v1h1v1h1v1h6v-1h1v-1h1v2h1v-1h3v1h3v-1h2v1h11v-1h1v1h3v-1h1v1h3v-1h3v1h14v-1h3v1h1v-2h2v2h4v-1h1v1h3v-1h3v1h3v-1h1v-1h1v2h2v-1h1v1h2v-1h3v1h1v-1h1v-1h1v1h1v1h1v-2h1v1h1v1h2v-1h1v1h1v-1h1v1h1v-1h1v1h4v-1h6v1h13v-1h1v1h16v-3h1v3h2v-1h1v1h3v-1h6v1h3v-1h2v1h1v-1h1v1h2v-1h1v1h1v-1h1v1h1v-1h4v1h3v-1h1v1h8v-1h1v1h1v-1h1v-2h1v3h2v-1h1v1h3v-1h1v1h6v-2h3v1h2v1h1v-1h2v1h2v-1h2v1h1v-1h1v1h4v-1h1v-1h1v1h1v1h4v-1h2v1h2v-1h2v1h17v-1h5v-1h1v1h3v1h1v-1h1v1h6v-1h3v-1h1v1h3v1h3v-1h2v1h8v-1h2v1h5v-1h1v1h1v-2h1v-6h1v6h1v1h2v1h1v-1h1v1h1v-1h1v1h2v-1h1v1h2v-1h1v-1h1v2h2v-1h2v-1h2v2h18v-2h1v1h1v-1h1v1h4v1h1v-1h1v-1h1v2h5v-1h2v1h2v-1h1v1h5v-1h1v1h4v-1h3v1h2v-1h1v1h2v-1h1v1h1v-1h1v1h2v-1h3v1h5v-1h1v1h1v-1h6v-1h1v1h1v1h5v-1h2v1h4v-2h1v1h2v1h4v-2h1v1h6v1h4v-1h2v1h1v-1h2v1h4v-1h5v-1h1v-1h1v3h1v-1h2v1h1v-2h1v1h1v1h7v-1h1v-1h1v1h2v-1h1v2h3v-1h4v1h1v-1h1v1h5v-1h1v1h2v-1h1v1h1v-1h1v1h5v-1h1v1h1v-1h1v1h2v-1h1v-2h1v2h2v1h5v-1h3v1h2v-1h1v1h8v-4h1v2h1v2h1v-1h2v1h9v-1h1v1h1v-2h1v2h6v-1h1v1h2v-1h1v1h2v-1h2v-1h1v2h1v-1h1v-1h1v1h1v1h1v-1h3v1h1v-1h1v1h1v-3h1v3h1v-1h2v1h7v-1h1v1h3v-2h1v2h4v-2h1v1h1v-1h1v1h6v1h5v-1h1v-1h1v-1h2v1h1v1h1v1h4v-1h1v1h2v-1h2v1h1v-1h1v1h2v-1h2v-2h2v2h2v1h9v-1h1v1h7v-1h1v1h7v-1h1v1h1v-1h3v-1h1v2h1v-1h2v-1h1v1h1v-1h1v1h2v1h11v-2h3v2h3v-1h1v-1h2v1h2v1h3v-1h1v1h2v-1h1v1h6v-1h1v1h1v-1h1v1h3v-1h2v1h1v-2h3v2h2v-1h1v-1h2v1h1v-1h1v1h1v1h3v-2h1v2h6v-1h1v-1h2v1h1v1h9v-1h1v1h7v-1h2v-1h1v1h1v1h1v-1h2v-2h1v3h3v-1h1v1h1v-1h4v1h1v-1h2v1h1v-1h2v1h5v-1h4v1h4v-2h2v1h1v6h-1v-1h-2v1h-1v-1h-6v1h-1v1h-1v-1h-1v-1h-4v2h-1v-1h-1v-1h-1v1h-1v-1h-1v1h-2v-1h-20v1h-2v-1h-4v1h-3v-1h-2v1h-2v1h-1v-1h-2v-1h-1v1h-2v1h-1v-1h-2v-1h-2v1h-2v-1h-6v1h-2v-1h-12v1h-1v-1h-1v1h-2v1h-1v-1h-2v-1h-3v1h-5v-1h-2v1h-1v-1h-9v1h-1v-1h-6v1h-2v-1h-1v1h-1v1h-1v-1h-1v1h-1v-2h-3v1h-2v-1h-3v1h-4v-1h-3v1h-1v-1h-1v1h-2v-1h-1v1h-1v-1h-1v3h-1v-3h-2v1h-2v-1h-3v1h-1v-1h-2v1h-1v1h-2v2h-1v-4h-1v1h-1v-1h-1v1h-1v-1h-8v1h-2v-1h-3v1h-5v-1h-3v1h-1v-1h-5v1h-4v1h-1v-1h-3v-1h-3v1h-1v-1h-1v1h-2v-1h-5v1h-1v-1h-2v3h-1v-1h-1v-2h-1v1h-1v-1h-7v1h-1v-1h-1v1h-1v1h-1v-1h-2v-1h-6v1h-4v1h-1v-2h-1v1h-2v-1h-5v1h-1v1h-1v-1h-1v-1h-3v2h-1v-2h-1v1h-4v-1h-1v1h-1v-1h-2v1h-2v1h-1v-2h-17v1h-1v-1h-2v1h-3v-1h-1v2h-1v-2h-5v1h-2v-1h-1v1h-1v-1h-1v2h-1v-1h-3v1h-2v-1h-2v-1h-1v1h-1v-1h-2v1h-1v1h-2v-1h-5v-1h-3v1h-1v1h-1v2h-1v-4h-1v1h-1v-1h-3v1h-2v-1h-2v1h-1v-1h-8v1h-1v-1h-6v1h-1v-1h-3v1h-1v1h-2v-2h-5v1h-1v-1h-1v1h-1v-1h-2v1h-1v1h-1v-1h-1v1h-2v-1h-2v-1h-3v1h-2v-1h-3v2h-1v-2h-2v1h-1v-1h-2v1h-1v-1h-2v1h-1v-1h-3v1h-3v1h-1v-1h-3v-1h-5v1h-1v-1h-6v1h-2v1h-1v-2h-10v1h-4v1h-1v-1h-2v-1h-2v1h-1v-1h-3v1h-3v-1h-1v1h-2v-1h-1v1h-3v1h-1v-1h-1v-1h-1v1h-3v-1h-1v2h-1v-1h-3v-1h-3v1h-2v1h-1v1h-1v5h-1v-7h-2v-1h-1v2h-2v-1h-2v-1h-5v1h-4v2h-1v-2h-1v-1h-10v1h-3v-1h-1v1h-1v-1h-7v1h-1v-1h-6v1h-1v-1h-1v1h-2v-1h-7v1h-4v-1h-6v1h-1v-1h-2v1h-1v-1h-1v1h-1v-1h-9v2h-1v-1h-3v-1h-10v1h-3v1h-1v-1h-1v-1h-2v1h-1v-1h-2v1h-2v-1h-2v1h-4v-1h-1v1h-3v-1h-4v1h-4v-1h-1v1h-2v-1h-2v1h-1v-1h-1v1h-2v-1h-5v1h-2v-1h-1v1h-1v-1h-3v1h-3v-1h-1v1h-1v3h-1v-2h-1v-2h-1v1h-1v-1h-1v1h-1v-1h-1v2h-1v-2h-3v1h-2v-1h-11v2h-1v-2h-3v1h-1v-1h-3v1h-1v1h-1v-1h-1v-1h-7v1h-4v-1h-3v1h-3v-1h-5v1h-2v-1h-2v1h-1v1h-1v-2h-3v1h-1v-1h-3v1h-1v1h-1v-1h-2v-1h-7v1h-1v1h-2v-2h-3v1h-1v-1h-15v1h-3v-1h-3v1h-1v-1h-2v1h-2v-1h-1v1h-1v-1h-7v1h-1v-1h-2v1h-1v-1h-2v1h-2v-1h-2v1h-1v-1h-1v1h-3v-1h-1v1h-1v-1h-3v1h-1v-1h-1v1h-1v11h-1v-12h-19v1h-3v-1h-1v1h-1v-1h-4v1h-1v1h-1v-2h-3v1h-5v-1h-3v1h-1v-1h-1v1h-3v1h-1v-1h-1v-1h-1v1h-1v-1h-7v1h-1v-1h-3v1h-2v-1h-3v1h-1v-1h-19v1h-1v-1h-5v1h-2v-1h-3v1h-1v-1h-8v1h-2v-1h-2v2h-1v-2h-3v1h-1v1h-1v-1h-2v-1h-1v1h-1v2h-1v-1h-1v-1h-1v-1h-4v1h-3v-1h-10v1h-2v-1h-4v2h-1v-2h-3v1h-2v-1h-6v1h-1v10h-1v-10h-1v1h-5v-1h-2v-1h-3v1h-2v-1h-8v1h-1v-1h-2v1h-1v-1h-1v1h-1v-1h-1v1h-1v-1h-1v3h-1v-2h-1v-1h-6v1h-1v-1h-3v1h-1v-1h-1v1h-1v-1h-2v1h-1v1h-1v-1h-1v-1h-1v2h-2v-1h-1v-1h-5v1h-1v-1h-1v1h-1v-1h-5v1h-2v-1h-10v2h-2v-2h-4v1h-1v-1h-1v2h-1v-1h-1v-1h-2v1h-1v1h-4v-2h-1v1h-1v-1h-8v1h-1v-1h-5v1h-3v-1h-1v1h-1v-1h-7v1h-1v1h-1v-2h-1v1h-3v2h-1v-2h-3v-1h-14v1h-1v-1h-2v1h-3v-1h-1v1h-2v-1h-1v1h-2v-1h-4v2h-1v-1h-3v-1h-5v1h-2v-1h-4v2h-1v-2h-3zM277 911h1v-1h3v1h10v-2h1v1h2v1h1v-1h1v1h3v-1h1v1h6v-1h1v1h2v-1h2v1h3v-1h2v-1h3v1h1v1h3v-1h1v1h3v-1h1v-1h1v2h1v-1h2v1h2v-2h1v1h1v-1h1v1h1v1h17v-1h1v1h10v-1h2v1h2v-1h1v1h5v-1h1v1h19v-5h1v4h1v1h18v-1h5v1h3v-1h4v1h3v-1h2v-3h1v3h1v1h2v-1h1v1h1v-1h1v-1h1v1h2v-1h1v1h1v1h5v-1h2v1h3v-1h3v1h1v-1h2v1h3v-1h1v1h6v-1h2v1h7v-1h1v1h6v-1h1v1h1v-1h4v1h3v-1h3v1h1v-1h1v1h1v-1h1v1h1v-1h3v1h2v-1h1v1h3v-1h1v1h5v-1h1v1h4v-2h2v2h3v-1h2v-1h1v1h1v1h3v-1h1v-1h1v2h3v-1h1v1h1v-1h3v1h4v-1h2v-1h1v1h2v1h1v-1h1v1h1v-1h1v1h1v-1h2v1h2v-1h3v1h1v-2h1v1h1v-1h1v2h1v-1h2v-1h1v1h1v1h6v-3h1v2h4v-2h1v2h1v1h3v-1h1v1h8v-1h1v1h2v-1h1v1h3v-1h4v1h6v-1h2v1h6v-1h1v1h1v-2h2v1h3v1h1v-1h1v1h1v-1h2v1h1v-2h1v1h1v1h3v-1h1v1h1v-1h2v1h9v-1h1v1h3v-1h6v1h3v-1h1v1h2v-1h4v1h15v-1h2v1h3v-1h2v1h4v-1h1v1h1v-1h1v1h3v-1h2v1h3v-1h2v1h2v-1h4v1h6v-1h1v-1h1v2h1v-1h2v-2h1v2h1v-1h2v2h2v-2h1v1h2v1h4v-1h1v1h2v-1h1v1h2v-1h2v-1h1v1h1v1h1v-2h1v1h3v1h2v-2h1v1h1v1h4v-1h3v1h2v-1h1v1h3v-1h1v1h4v-1h1v1h1v-2h1v1h2v1h7v-1h1v1h3v-1h1v-1h1v1h2v1h5v-1h4v1h2v-1h1v1h5v-1h1v1h6v-1h1v1h1v-1h1v1h4v-1h1v1h6v-1h2v1h5v-1h1v1h1v-1h2v1h1v-1h2v1h2v-1h3v1h3v-2h2v1h3v1h3v-1h4v1h12v-1h1v-1h1v1h2v1h3v-1h4v1h3v-1h1v-3h1v4h12v-1h3v-1h1v-1h1v2h1v-1h2v-1h1v2h1v1h4v-1h1v1h3v-2h1v1h1v1h1v-1h2v1h4v-1h1v1h8v-1h1v1h1v-1h2v-1h2v2h5v-1h2v1h1v-1h1v1h7v-1h1v-1h3v2h5v-1h1v1h3v-1h1v-1h1v1h4v-1h2v1h1v1h1v-1h1v1h1v-1h1v1h4v-1h2v1h1v-1h1v1h1v-1h3v1h2v-1h2v1h7v-1h1v1h4v-1h2v1h3v-1h2v1h5v-1h1v-1h1v1h3v1h2v-1h1v1h3v-1h4v1h1v-2h1v1h2v1h2v-2h1v1h1v1h1v-1h1v1h5v-1h2v1h4v-1h1v1h3v-1h1v1h1v-1h3v-1h1v2h2v-1h3v-1h1v1h1v1h2v-1h2v1h3v-1h1v1h2v-1h1v1h2v-1h1v1h1v-1h1v1h4v-1h1v1h2v-1h2v1h3v-1h1v1h2v-1h3v1h6v-1h2v1h15v-1h1v1h4v-1h1v1h7v-1h3v-1h2v1h2v1h16v-1h1v-2h2v1h2v1h3v1h10v-5h1v5h3v-1h1v-1h1v2h16v-1h2v1h1v-1h1v1h1v-1h1v1h1v-1h2v1h1v-1h1v1h3v-1h1v1h1v-1h1v1h1v-1h3v1h1v-1h1v1h3v-1h1v-1h1v2h17v-1h2v1h2v-1h2v1h3v-2h3v2h1v-1h2v1h4v-1h1v1h1v-1h2v1h3v-1h3v-1h2v1h2v1h4v-2h1v1h1v1h1v-2h1v1h1v1h1v-1h1v1h20v-1h2v1h1v-2h1v1h1v1h1v-1h1v-1h2v2h3v-1h1v1h1v-1h1v5h-8v1h-1v-1h-2v1h-1v-1h-13v1h-1v-1h-6v1h-1v-1h-2v1h-1v-1h-13v1h-2v-1h-3v1h-2v1h-1v-2h-2v1h-2v-1h-1v1h-1v-1h-1v1h-1v-1h-4v1h-3v-1h-2v1h-1v1h-2v-1h-1v-1h-9v1h-2v1h-1v-2h-5v1h-3v-1h-1v1h-2v-1h-4v1h-1v-1h-12v1h-2v-1h-1v1h-2v-1h-3v1h-1v-1h-1v1h-1v-1h-1v2h-1v-1h-1v-1h-2v1h-3v-1h-4v2h-1v-2h-8v1h-3v-1h-1v1h-2v-1h-3v1h-3v-1h-7v1h-1v-1h-1v2h-1v-2h-1v1h-4v1h-1v-1h-1v-1h-5v1h-1v-1h-6v1h-1v-1h-3v1h-1v-1h-1v1h-2v-1h-2v1h-1v-1h-6v1h-2v-1h-1v1h-1v-1h-2v1h-2v-1h-7v1h-1v-1h-3v1h-1v-1h-7v1h-1v-1h-1v1h-2v-1h-1v1h-1v-1h-1v1h-1v1h-1v-2h-1v1h-2v-1h-1v1h-1v-1h-10v1h-3v1h-1v-1h-1v-1h-1v1h-1v-1h-3v1h-1v-1h-3v1h-1v-1h-7v1h-2v-1h-3v1h-1v-1h-5v1h-1v-1h-3v1h-1v-1h-9v1h-5v-1h-1v1h-2v1h-1v-1h-7v-1h-1v1h-1v-1h-23v1h-4v-1h-1v1h-2v-1h-1v1h-1v1h-1v-2h-2v2h-1v-1h-1v-1h-2v1h-2v-1h-1v1h-1v-1h-2v1h-1v-1h-4v1h-2v-1h-5v1h-1v-1h-4v1h-1v-1h-11v1h-1v1h-1v-1h-1v-1h-12v1h-3v-1h-3v1h-1v-1h-2v2h-3v-2h-1v1h-1v-1h-1v1h-2v1h-1v-1h-1v-1h-1v1h-3v1h-1v-1h-3v-1h-1v1h-1v-1h-4v1h-3v-1h-1v1h-1v-1h-3v1h-2v-1h-3v1h-1v1h-1v-1h-1v-1h-2v1h-2v-1h-1v1h-3v-1h-4v1h-1v1h-1v-2h-5v1h-1v-1h-7v1h-1v-1h-1v1h-3v-1h-1v2h-1v-1h-3v-1h-20v1h-1v-1h-1v1h-1v-1h-2v1h-2v-1h-4v1h-3v-1h-2v1h-2v-1h-1v1h-1v-1h-3v5h-1v-5h-3v1h-2v-1h-1v1h-1v-1h-6v2h-2v-1h-2v-1h-2v1h-1v-1h-1v1h-5v-1h-2v1h-1v-1h-3v1h-1v-1h-2v1h-2v1h-1v-1h-1v-1h-2v1h-1v-1h-3v1h-2v-1h-1v1h-1v-1h-1v1h-2v-1h-7v1h-1v1h-2v-1h-1v-1h-2v1h-1v-1h-1v1h-1v-1h-3v1h-1v-1h-2v1h-2v-1h-4v1h-1v-1h-2v1h-1v-1h-5v1h-1v1h-1v-1h-3v-1h-11v2h-2v-1h-1v1h-1v-2h-1v1h-1v-1h-1v1h-2v-1h-9v1h-1v-1h-1v1h-3v-1h-5v1h-1v-1h-6v1h-1v1h-3v-1h-1v-1h-2v1h-2v-1h-2v1h-1v-1h-9v1h-2v1h-1v-1h-4v-1h-2v2h-1v-1h-1v-1h-1v1h-2v-1h-1v1h-3v-1h-1v2h-1v-1h-1v-1h-1v1h-3v1h-1v-1h-2v1h-1v-1h-4v1h-1v-2h-6v1h-1v-1h-1v1h-1v-1h-1v1h-2v-1h-2v1h-5v-1h-3v1h-1v-1h-2v1h-3v1h-1v-1h-2v-1h-1v1h-1v-1h-2v1h-1v1h-1v-2h-4v1h-1v-1h-4v1h-1v-1h-1v5h-1v-5h-2v1h-1v-1h-14v1h-2v1h-4v-2h-3v1h-2v-1h-1v1h-1v-1h-6v1h-1v-1h-2v1h-1v-1h-4v1h-1v-1h-2v1h-1v-1h-1v1h-1v-1h-7v2h-3v-1h-2v-1h-2v1h-3v-1h-3v1h-1v-1h-5v1h-1v-1h-3v1h-3v-1h-16v1h-1v2h-1v-2h-1v-1h-7v1h-1v-1h-10v3h-1v-1h-2v-2h-2v1h-1v1h-1v-1h-1v-1h-1v1h-2v-1h-2v1h-1v-1h-2v1h-1v-1h-2v1h-2v-1h-13v1h-1v-1h-6v1h-3v-1h-1v1h-1v-1h-3v1h-1v1h-1v-2h-2v1h-2v-1h-2v1h-3v-1h-10v1h-3v-1h-3v1h-2v1h-2v-1h-1v-1h-19v1h-1v1h-2v-1h-1v-1h-1v1h-3v-1h-5v1h-1v-1h-1v2h-1v-1h-1v-1h-5v1h-1v-1h-1v1h-1v-1h-1v1h-1v-1h-1v1h-2v-1h-6v1h-1v-1h-11v1h-1v-1h-3v1h-1v-1h-2v1h-1v1h-4v-2h-2v1h-2v-1h-1z"/>
</g>
<g font-size="13" fill="#000">
<text x="352.5" y="178" text-anchor="middle">02</text><text x="352.5" y="960" text-anchor="middle">02</text><text x="427.5" y="178" text-anchor="middle">04</text><text x="427.5" y="960" text-anchor="middle">04</text><text x="502.5" y="178" text-anchor="middle">06</text><text x="502.5" y="960" text-anchor="middle">06</text><text x="577.5" y="178" text-anchor="middle">08</text><text x="577.5" y="960" text-anchor="middle">08</text><text x="652.5" y="178" text-anchor="middle">10</text><text x="652.5" y="960" text-anchor="middle">10</text><text x="727.5" y="178" text-anchor="middle">12</text><text x="727.5" y="960" text-anchor="middle">12</text><text x="802.5" y="178" text-anchor="middle">14</text><text x="802.5" y="960" text-anchor="middle">14</text><text x="876.5" y="178" text-anchor="middle">16</text><text x="876.5" y="960" text-anchor="middle">16</text><text x="951.5" y="178" text-anchor="middle">18</text><text x="951.5" y="960" text-anchor="middle">18</text><text x="1026.5" y="178" text-anchor="middle">20</text><text x="1026.5" y="960" text-anchor="middle">20</text><text x="1101.5" y="178" text-anchor="middle">22</text><text x="1101.5" y="960" text-anchor="middle">22</text><text x="1176.5" y="178" text-anchor="middle">24</text><text x="1176.5" y="960" text-anchor="middle">24</text><text x="1251.5" y="178" text-anchor="middle">26</text><text x="1251.5" y="960" text-anchor="middle">26</text><text x="1326.5" y="178" text-anchor="middle">28</text><text x="1326.5" y="960" text-anchor="middle">28</text><text x="1407" y="220">12:30</text><text x="1407" y="251">13:00</text><text x="1407" y="281">13:30</text><text x="1407" y="311">14:00</text><text x="1407" y="342">14:30</text><text x="1407" y="372">15:00</text><text x="1407" y="402">15:30</text><text x="1407" y="433">16:00</text><text x="1407" y="463">16:30</text><text x="1407" y="493">17:00</text><text x="1407" y="524">17:30</text><text x="1407" y="554">18:00</text><text x="1407" y="584">18:30</text><text x="1407" y="614">19:00</text><text x="1407" y="645">19:30</text><text x="1407" y="675">20:00</text><text x="1407" y="705">20:30</text><text x="1407" y="736">21:00</text><text x="1407" y="766">21:30</text><text x="1407" y="796">22:00</text><text x="1407" y="827">22:30</text><text x="1407" y="857">23:00</text><text x="1407" y="887">23:30</text><text x="1407" y="918">24:00</text>
</g>
<text x="1405" y="192" font-size="18" fill="#ff0000">UTC</text>
<text x="839.6" y="1000.5" text-anchor="middle" font-size="18" fill="#000">Minutes écoulées</text>
</svg>
</body></html>
